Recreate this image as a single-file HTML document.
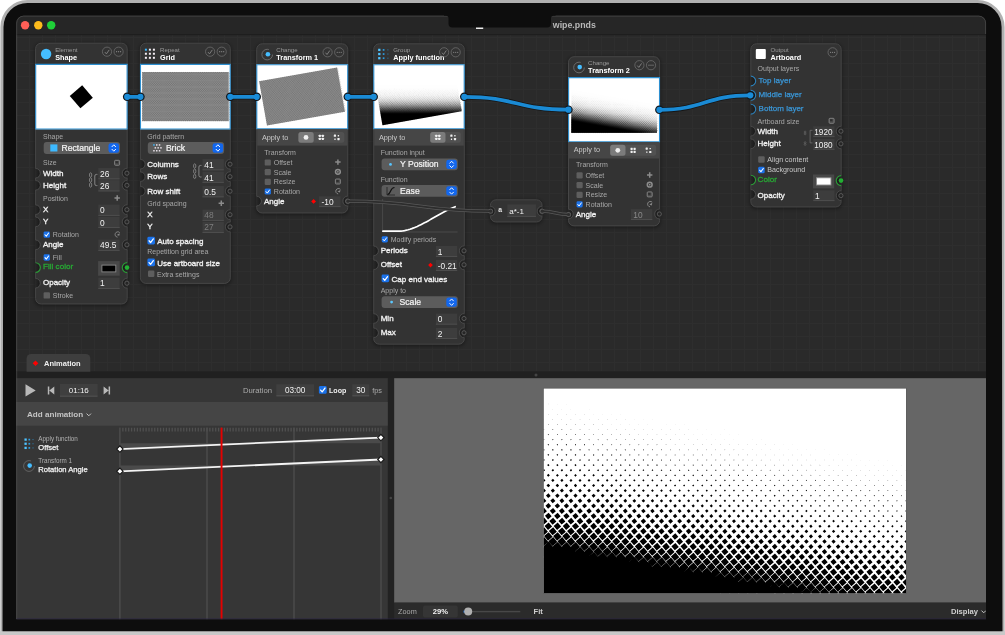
<!DOCTYPE html><html><head><meta charset="utf-8"><title>wipe.pnds</title><style>html,body{margin:0;padding:0;background:#fff}svg{display:block;will-change:transform}text{font-family:"Liberation Sans",sans-serif}</style></head><body>
<svg width="1005" height="635" viewBox="0 0 1005 635">
<defs>
<path id="uni" d="M-958.6 -558.3L-941.7 -538.6L-961.4 -521.7L-978.3 -541.4zM-910.6 -558.3L-893.7 -538.6L-913.4 -521.7L-930.3 -541.4zM-862.6 -558.3L-845.7 -538.6L-865.4 -521.7L-882.3 -541.4zM-814.6 -558.3L-797.7 -538.6L-817.4 -521.7L-834.3 -541.4zM-766.6 -558.3L-749.7 -538.6L-769.4 -521.7L-786.3 -541.4zM-718.6 -558.3L-701.7 -538.6L-721.4 -521.7L-738.3 -541.4zM-670.6 -558.3L-653.7 -538.6L-673.4 -521.7L-690.3 -541.4zM-622.6 -558.3L-605.7 -538.6L-625.4 -521.7L-642.3 -541.4zM-574.6 -558.3L-557.7 -538.6L-577.4 -521.7L-594.3 -541.4zM-526.6 -558.3L-509.7 -538.6L-529.4 -521.7L-546.3 -541.4zM-478.6 -558.3L-461.7 -538.6L-481.4 -521.7L-498.3 -541.4zM-430.6 -558.3L-413.7 -538.6L-433.4 -521.7L-450.3 -541.4zM-382.6 -558.3L-365.7 -538.6L-385.4 -521.7L-402.3 -541.4zM-334.6 -558.3L-317.7 -538.6L-337.4 -521.7L-354.3 -541.4zM-286.6 -558.3L-269.7 -538.6L-289.4 -521.7L-306.3 -541.4zM-238.6 -558.3L-221.7 -538.6L-241.4 -521.7L-258.3 -541.4zM-190.6 -558.3L-173.7 -538.6L-193.4 -521.7L-210.3 -541.4zM-142.6 -558.3L-125.7 -538.6L-145.4 -521.7L-162.3 -541.4zM-94.6 -558.3L-77.7 -538.6L-97.4 -521.7L-114.3 -541.4zM-46.6 -558.3L-29.7 -538.6L-49.4 -521.7L-66.3 -541.4zM1.4 -558.3L18.3 -538.6L-1.4 -521.7L-18.3 -541.4zM49.4 -558.3L66.3 -538.6L46.6 -521.7L29.7 -541.4zM97.4 -558.3L114.3 -538.6L94.6 -521.7L77.7 -541.4zM145.4 -558.3L162.3 -538.6L142.6 -521.7L125.7 -541.4zM193.4 -558.3L210.3 -538.6L190.6 -521.7L173.7 -541.4zM241.4 -558.3L258.3 -538.6L238.6 -521.7L221.7 -541.4zM289.4 -558.3L306.3 -538.6L286.6 -521.7L269.7 -541.4zM337.4 -558.3L354.3 -538.6L334.6 -521.7L317.7 -541.4zM385.4 -558.3L402.3 -538.6L382.6 -521.7L365.7 -541.4zM433.4 -558.3L450.3 -538.6L430.6 -521.7L413.7 -541.4zM481.4 -558.3L498.3 -538.6L478.6 -521.7L461.7 -541.4zM529.4 -558.3L546.3 -538.6L526.6 -521.7L509.7 -541.4zM577.4 -558.3L594.3 -538.6L574.6 -521.7L557.7 -541.4zM625.4 -558.3L642.3 -538.6L622.6 -521.7L605.7 -541.4zM673.4 -558.3L690.3 -538.6L670.6 -521.7L653.7 -541.4zM721.4 -558.3L738.3 -538.6L718.6 -521.7L701.7 -541.4zM769.4 -558.3L786.3 -538.6L766.6 -521.7L749.7 -541.4zM817.4 -558.3L834.3 -538.6L814.6 -521.7L797.7 -541.4zM865.4 -558.3L882.3 -538.6L862.6 -521.7L845.7 -541.4zM913.4 -558.3L930.3 -538.6L910.6 -521.7L893.7 -541.4zM961.4 -558.3L978.3 -538.6L958.6 -521.7L941.7 -541.4zM-934.6 -531.3L-917.7 -511.6L-937.4 -494.7L-954.3 -514.4zM-886.6 -531.3L-869.7 -511.6L-889.4 -494.7L-906.3 -514.4zM-838.6 -531.3L-821.7 -511.6L-841.4 -494.7L-858.3 -514.4zM-790.6 -531.3L-773.7 -511.6L-793.4 -494.7L-810.3 -514.4zM-742.6 -531.3L-725.7 -511.6L-745.4 -494.7L-762.3 -514.4zM-694.6 -531.3L-677.7 -511.6L-697.4 -494.7L-714.3 -514.4zM-646.6 -531.3L-629.7 -511.6L-649.4 -494.7L-666.3 -514.4zM-598.6 -531.3L-581.7 -511.6L-601.4 -494.7L-618.3 -514.4zM-550.6 -531.3L-533.7 -511.6L-553.4 -494.7L-570.3 -514.4zM-502.6 -531.3L-485.7 -511.6L-505.4 -494.7L-522.3 -514.4zM-454.6 -531.3L-437.7 -511.6L-457.4 -494.7L-474.3 -514.4zM-406.6 -531.3L-389.7 -511.6L-409.4 -494.7L-426.3 -514.4zM-358.6 -531.3L-341.7 -511.6L-361.4 -494.7L-378.3 -514.4zM-310.6 -531.3L-293.7 -511.6L-313.4 -494.7L-330.3 -514.4zM-262.6 -531.3L-245.7 -511.6L-265.4 -494.7L-282.3 -514.4zM-214.6 -531.3L-197.7 -511.6L-217.4 -494.7L-234.3 -514.4zM-166.6 -531.3L-149.7 -511.6L-169.4 -494.7L-186.3 -514.4zM-118.6 -531.3L-101.7 -511.6L-121.4 -494.7L-138.3 -514.4zM-70.6 -531.3L-53.7 -511.6L-73.4 -494.7L-90.3 -514.4zM-22.6 -531.3L-5.7 -511.6L-25.4 -494.7L-42.3 -514.4zM25.4 -531.3L42.3 -511.6L22.6 -494.7L5.7 -514.4zM73.4 -531.3L90.3 -511.6L70.6 -494.7L53.7 -514.4zM121.4 -531.3L138.3 -511.6L118.6 -494.7L101.7 -514.4zM169.4 -531.3L186.3 -511.6L166.6 -494.7L149.7 -514.4zM217.4 -531.3L234.3 -511.6L214.6 -494.7L197.7 -514.4zM265.4 -531.3L282.3 -511.6L262.6 -494.7L245.7 -514.4zM313.4 -531.3L330.3 -511.6L310.6 -494.7L293.7 -514.4zM361.4 -531.3L378.3 -511.6L358.6 -494.7L341.7 -514.4zM409.4 -531.3L426.3 -511.6L406.6 -494.7L389.7 -514.4zM457.4 -531.3L474.3 -511.6L454.6 -494.7L437.7 -514.4zM505.4 -531.3L522.3 -511.6L502.6 -494.7L485.7 -514.4zM553.4 -531.3L570.3 -511.6L550.6 -494.7L533.7 -514.4zM601.4 -531.3L618.3 -511.6L598.6 -494.7L581.7 -514.4zM649.4 -531.3L666.3 -511.6L646.6 -494.7L629.7 -514.4zM697.4 -531.3L714.3 -511.6L694.6 -494.7L677.7 -514.4zM745.4 -531.3L762.3 -511.6L742.6 -494.7L725.7 -514.4zM793.4 -531.3L810.3 -511.6L790.6 -494.7L773.7 -514.4zM841.4 -531.3L858.3 -511.6L838.6 -494.7L821.7 -514.4zM889.4 -531.3L906.3 -511.6L886.6 -494.7L869.7 -514.4zM937.4 -531.3L954.3 -511.6L934.6 -494.7L917.7 -514.4zM985.4 -531.3L1002.3 -511.6L982.6 -494.7L965.7 -514.4zM-958.6 -504.3L-941.7 -484.6L-961.4 -467.7L-978.3 -487.4zM-910.6 -504.3L-893.7 -484.6L-913.4 -467.7L-930.3 -487.4zM-862.6 -504.3L-845.7 -484.6L-865.4 -467.7L-882.3 -487.4zM-814.6 -504.3L-797.7 -484.6L-817.4 -467.7L-834.3 -487.4zM-766.6 -504.3L-749.7 -484.6L-769.4 -467.7L-786.3 -487.4zM-718.6 -504.3L-701.7 -484.6L-721.4 -467.7L-738.3 -487.4zM-670.6 -504.3L-653.7 -484.6L-673.4 -467.7L-690.3 -487.4zM-622.6 -504.3L-605.7 -484.6L-625.4 -467.7L-642.3 -487.4zM-574.6 -504.3L-557.7 -484.6L-577.4 -467.7L-594.3 -487.4zM-526.6 -504.3L-509.7 -484.6L-529.4 -467.7L-546.3 -487.4zM-478.6 -504.3L-461.7 -484.6L-481.4 -467.7L-498.3 -487.4zM-430.6 -504.3L-413.7 -484.6L-433.4 -467.7L-450.3 -487.4zM-382.6 -504.3L-365.7 -484.6L-385.4 -467.7L-402.3 -487.4zM-334.6 -504.3L-317.7 -484.6L-337.4 -467.7L-354.3 -487.4zM-286.6 -504.3L-269.7 -484.6L-289.4 -467.7L-306.3 -487.4zM-238.6 -504.3L-221.7 -484.6L-241.4 -467.7L-258.3 -487.4zM-190.6 -504.3L-173.7 -484.6L-193.4 -467.7L-210.3 -487.4zM-142.6 -504.3L-125.7 -484.6L-145.4 -467.7L-162.3 -487.4zM-94.6 -504.3L-77.7 -484.6L-97.4 -467.7L-114.3 -487.4zM-46.6 -504.3L-29.7 -484.6L-49.4 -467.7L-66.3 -487.4zM1.4 -504.3L18.3 -484.6L-1.4 -467.7L-18.3 -487.4zM49.4 -504.3L66.3 -484.6L46.6 -467.7L29.7 -487.4zM97.4 -504.3L114.3 -484.6L94.6 -467.7L77.7 -487.4zM145.4 -504.3L162.3 -484.6L142.6 -467.7L125.7 -487.4zM193.4 -504.3L210.3 -484.6L190.6 -467.7L173.7 -487.4zM241.4 -504.3L258.3 -484.6L238.6 -467.7L221.7 -487.4zM289.4 -504.3L306.3 -484.6L286.6 -467.7L269.7 -487.4zM337.4 -504.3L354.3 -484.6L334.6 -467.7L317.7 -487.4zM385.4 -504.3L402.3 -484.6L382.6 -467.7L365.7 -487.4zM433.4 -504.3L450.3 -484.6L430.6 -467.7L413.7 -487.4zM481.4 -504.3L498.3 -484.6L478.6 -467.7L461.7 -487.4zM529.4 -504.3L546.3 -484.6L526.6 -467.7L509.7 -487.4zM577.4 -504.3L594.3 -484.6L574.6 -467.7L557.7 -487.4zM625.4 -504.3L642.3 -484.6L622.6 -467.7L605.7 -487.4zM673.4 -504.3L690.3 -484.6L670.6 -467.7L653.7 -487.4zM721.4 -504.3L738.3 -484.6L718.6 -467.7L701.7 -487.4zM769.4 -504.3L786.3 -484.6L766.6 -467.7L749.7 -487.4zM817.4 -504.3L834.3 -484.6L814.6 -467.7L797.7 -487.4zM865.4 -504.3L882.3 -484.6L862.6 -467.7L845.7 -487.4zM913.4 -504.3L930.3 -484.6L910.6 -467.7L893.7 -487.4zM961.4 -504.3L978.3 -484.6L958.6 -467.7L941.7 -487.4zM-934.6 -477.3L-917.7 -457.6L-937.4 -440.7L-954.3 -460.4zM-886.6 -477.3L-869.7 -457.6L-889.4 -440.7L-906.3 -460.4zM-838.6 -477.3L-821.7 -457.6L-841.4 -440.7L-858.3 -460.4zM-790.6 -477.3L-773.7 -457.6L-793.4 -440.7L-810.3 -460.4zM-742.6 -477.3L-725.7 -457.6L-745.4 -440.7L-762.3 -460.4zM-694.6 -477.3L-677.7 -457.6L-697.4 -440.7L-714.3 -460.4zM-646.6 -477.3L-629.7 -457.6L-649.4 -440.7L-666.3 -460.4zM-598.6 -477.3L-581.7 -457.6L-601.4 -440.7L-618.3 -460.4zM-550.6 -477.3L-533.7 -457.6L-553.4 -440.7L-570.3 -460.4zM-502.6 -477.3L-485.7 -457.6L-505.4 -440.7L-522.3 -460.4zM-454.6 -477.3L-437.7 -457.6L-457.4 -440.7L-474.3 -460.4zM-406.6 -477.3L-389.7 -457.6L-409.4 -440.7L-426.3 -460.4zM-358.6 -477.3L-341.7 -457.6L-361.4 -440.7L-378.3 -460.4zM-310.6 -477.3L-293.7 -457.6L-313.4 -440.7L-330.3 -460.4zM-262.6 -477.3L-245.7 -457.6L-265.4 -440.7L-282.3 -460.4zM-214.6 -477.3L-197.7 -457.6L-217.4 -440.7L-234.3 -460.4zM-166.6 -477.3L-149.7 -457.6L-169.4 -440.7L-186.3 -460.4zM-118.6 -477.3L-101.7 -457.6L-121.4 -440.7L-138.3 -460.4zM-70.6 -477.3L-53.7 -457.6L-73.4 -440.7L-90.3 -460.4zM-22.6 -477.3L-5.7 -457.6L-25.4 -440.7L-42.3 -460.4zM25.4 -477.3L42.3 -457.6L22.6 -440.7L5.7 -460.4zM73.4 -477.3L90.3 -457.6L70.6 -440.7L53.7 -460.4zM121.4 -477.3L138.3 -457.6L118.6 -440.7L101.7 -460.4zM169.4 -477.3L186.3 -457.6L166.6 -440.7L149.7 -460.4zM217.4 -477.3L234.3 -457.6L214.6 -440.7L197.7 -460.4zM265.4 -477.3L282.3 -457.6L262.6 -440.7L245.7 -460.4zM313.4 -477.3L330.3 -457.6L310.6 -440.7L293.7 -460.4zM361.4 -477.3L378.3 -457.6L358.6 -440.7L341.7 -460.4zM409.4 -477.3L426.3 -457.6L406.6 -440.7L389.7 -460.4zM457.4 -477.3L474.3 -457.6L454.6 -440.7L437.7 -460.4zM505.4 -477.3L522.3 -457.6L502.6 -440.7L485.7 -460.4zM553.4 -477.3L570.3 -457.6L550.6 -440.7L533.7 -460.4zM601.4 -477.3L618.3 -457.6L598.6 -440.7L581.7 -460.4zM649.4 -477.3L666.3 -457.6L646.6 -440.7L629.7 -460.4zM697.4 -477.3L714.3 -457.6L694.6 -440.7L677.7 -460.4zM745.4 -477.3L762.3 -457.6L742.6 -440.7L725.7 -460.4zM793.4 -477.3L810.3 -457.6L790.6 -440.7L773.7 -460.4zM841.4 -477.3L858.3 -457.6L838.6 -440.7L821.7 -460.4zM889.4 -477.3L906.3 -457.6L886.6 -440.7L869.7 -460.4zM937.4 -477.3L954.3 -457.6L934.6 -440.7L917.7 -460.4zM985.4 -477.3L1002.3 -457.6L982.6 -440.7L965.7 -460.4zM-958.6 -450.3L-941.7 -430.6L-961.4 -413.7L-978.3 -433.4zM-910.6 -450.3L-893.7 -430.6L-913.4 -413.7L-930.3 -433.4zM-862.6 -450.3L-845.7 -430.6L-865.4 -413.7L-882.3 -433.4zM-814.6 -450.3L-797.7 -430.6L-817.4 -413.7L-834.3 -433.4zM-766.6 -450.3L-749.7 -430.6L-769.4 -413.7L-786.3 -433.4zM-718.6 -450.3L-701.7 -430.6L-721.4 -413.7L-738.3 -433.4zM-670.6 -450.3L-653.7 -430.6L-673.4 -413.7L-690.3 -433.4zM-622.6 -450.3L-605.7 -430.6L-625.4 -413.7L-642.3 -433.4zM-574.6 -450.3L-557.7 -430.6L-577.4 -413.7L-594.3 -433.4zM-526.6 -450.3L-509.7 -430.6L-529.4 -413.7L-546.3 -433.4zM-478.6 -450.3L-461.7 -430.6L-481.4 -413.7L-498.3 -433.4zM-430.6 -450.3L-413.7 -430.6L-433.4 -413.7L-450.3 -433.4zM-382.6 -450.3L-365.7 -430.6L-385.4 -413.7L-402.3 -433.4zM-334.6 -450.3L-317.7 -430.6L-337.4 -413.7L-354.3 -433.4zM-286.6 -450.3L-269.7 -430.6L-289.4 -413.7L-306.3 -433.4zM-238.6 -450.3L-221.7 -430.6L-241.4 -413.7L-258.3 -433.4zM-190.6 -450.3L-173.7 -430.6L-193.4 -413.7L-210.3 -433.4zM-142.6 -450.3L-125.7 -430.6L-145.4 -413.7L-162.3 -433.4zM-94.6 -450.3L-77.7 -430.6L-97.4 -413.7L-114.3 -433.4zM-46.6 -450.3L-29.7 -430.6L-49.4 -413.7L-66.3 -433.4zM1.4 -450.3L18.3 -430.6L-1.4 -413.7L-18.3 -433.4zM49.4 -450.3L66.3 -430.6L46.6 -413.7L29.7 -433.4zM97.4 -450.3L114.3 -430.6L94.6 -413.7L77.7 -433.4zM145.4 -450.3L162.3 -430.6L142.6 -413.7L125.7 -433.4zM193.4 -450.3L210.3 -430.6L190.6 -413.7L173.7 -433.4zM241.4 -450.3L258.3 -430.6L238.6 -413.7L221.7 -433.4zM289.4 -450.3L306.3 -430.6L286.6 -413.7L269.7 -433.4zM337.4 -450.3L354.3 -430.6L334.6 -413.7L317.7 -433.4zM385.4 -450.3L402.3 -430.6L382.6 -413.7L365.7 -433.4zM433.4 -450.3L450.3 -430.6L430.6 -413.7L413.7 -433.4zM481.4 -450.3L498.3 -430.6L478.6 -413.7L461.7 -433.4zM529.4 -450.3L546.3 -430.6L526.6 -413.7L509.7 -433.4zM577.4 -450.3L594.3 -430.6L574.6 -413.7L557.7 -433.4zM625.4 -450.3L642.3 -430.6L622.6 -413.7L605.7 -433.4zM673.4 -450.3L690.3 -430.6L670.6 -413.7L653.7 -433.4zM721.4 -450.3L738.3 -430.6L718.6 -413.7L701.7 -433.4zM769.4 -450.3L786.3 -430.6L766.6 -413.7L749.7 -433.4zM817.4 -450.3L834.3 -430.6L814.6 -413.7L797.7 -433.4zM865.4 -450.3L882.3 -430.6L862.6 -413.7L845.7 -433.4zM913.4 -450.3L930.3 -430.6L910.6 -413.7L893.7 -433.4zM961.4 -450.3L978.3 -430.6L958.6 -413.7L941.7 -433.4zM-934.6 -423.3L-917.7 -403.6L-937.4 -386.7L-954.3 -406.4zM-886.6 -423.3L-869.7 -403.6L-889.4 -386.7L-906.3 -406.4zM-838.6 -423.3L-821.7 -403.6L-841.4 -386.7L-858.3 -406.4zM-790.6 -423.3L-773.7 -403.6L-793.4 -386.7L-810.3 -406.4zM-742.6 -423.3L-725.7 -403.6L-745.4 -386.7L-762.3 -406.4zM-694.6 -423.3L-677.7 -403.6L-697.4 -386.7L-714.3 -406.4zM-646.6 -423.3L-629.7 -403.6L-649.4 -386.7L-666.3 -406.4zM-598.6 -423.3L-581.7 -403.6L-601.4 -386.7L-618.3 -406.4zM-550.6 -423.3L-533.7 -403.6L-553.4 -386.7L-570.3 -406.4zM-502.6 -423.3L-485.7 -403.6L-505.4 -386.7L-522.3 -406.4zM-454.6 -423.3L-437.7 -403.6L-457.4 -386.7L-474.3 -406.4zM-406.6 -423.3L-389.7 -403.6L-409.4 -386.7L-426.3 -406.4zM-358.6 -423.3L-341.7 -403.6L-361.4 -386.7L-378.3 -406.4zM-310.6 -423.3L-293.7 -403.6L-313.4 -386.7L-330.3 -406.4zM-262.6 -423.3L-245.7 -403.6L-265.4 -386.7L-282.3 -406.4zM-214.6 -423.3L-197.7 -403.6L-217.4 -386.7L-234.3 -406.4zM-166.6 -423.3L-149.7 -403.6L-169.4 -386.7L-186.3 -406.4zM-118.6 -423.3L-101.7 -403.6L-121.4 -386.7L-138.3 -406.4zM-70.6 -423.3L-53.7 -403.6L-73.4 -386.7L-90.3 -406.4zM-22.6 -423.3L-5.7 -403.6L-25.4 -386.7L-42.3 -406.4zM25.4 -423.3L42.3 -403.6L22.6 -386.7L5.7 -406.4zM73.4 -423.3L90.3 -403.6L70.6 -386.7L53.7 -406.4zM121.4 -423.3L138.3 -403.6L118.6 -386.7L101.7 -406.4zM169.4 -423.3L186.3 -403.6L166.6 -386.7L149.7 -406.4zM217.4 -423.3L234.3 -403.6L214.6 -386.7L197.7 -406.4zM265.4 -423.3L282.3 -403.6L262.6 -386.7L245.7 -406.4zM313.4 -423.3L330.3 -403.6L310.6 -386.7L293.7 -406.4zM361.4 -423.3L378.3 -403.6L358.6 -386.7L341.7 -406.4zM409.4 -423.3L426.3 -403.6L406.6 -386.7L389.7 -406.4zM457.4 -423.3L474.3 -403.6L454.6 -386.7L437.7 -406.4zM505.4 -423.3L522.3 -403.6L502.6 -386.7L485.7 -406.4zM553.4 -423.3L570.3 -403.6L550.6 -386.7L533.7 -406.4zM601.4 -423.3L618.3 -403.6L598.6 -386.7L581.7 -406.4zM649.4 -423.3L666.3 -403.6L646.6 -386.7L629.7 -406.4zM697.4 -423.3L714.3 -403.6L694.6 -386.7L677.7 -406.4zM745.4 -423.3L762.3 -403.6L742.6 -386.7L725.7 -406.4zM793.4 -423.3L810.3 -403.6L790.6 -386.7L773.7 -406.4zM841.4 -423.3L858.3 -403.6L838.6 -386.7L821.7 -406.4zM889.4 -423.3L906.3 -403.6L886.6 -386.7L869.7 -406.4zM937.4 -423.3L954.3 -403.6L934.6 -386.7L917.7 -406.4zM985.4 -423.3L1002.3 -403.6L982.6 -386.7L965.7 -406.4zM-958.6 -396.3L-941.7 -376.6L-961.4 -359.7L-978.3 -379.4zM-910.6 -396.3L-893.7 -376.6L-913.4 -359.7L-930.3 -379.4zM-862.6 -396.3L-845.7 -376.6L-865.4 -359.7L-882.3 -379.4zM-814.6 -396.3L-797.7 -376.6L-817.4 -359.7L-834.3 -379.4zM-766.6 -396.3L-749.7 -376.6L-769.4 -359.7L-786.3 -379.4zM-718.6 -396.3L-701.7 -376.6L-721.4 -359.7L-738.3 -379.4zM-670.6 -396.3L-653.7 -376.6L-673.4 -359.7L-690.3 -379.4zM-622.6 -396.3L-605.7 -376.6L-625.4 -359.7L-642.3 -379.4zM-574.6 -396.3L-557.7 -376.6L-577.4 -359.7L-594.3 -379.4zM-526.6 -396.3L-509.7 -376.6L-529.4 -359.7L-546.3 -379.4zM-478.6 -396.3L-461.7 -376.6L-481.4 -359.7L-498.3 -379.4zM-430.6 -396.3L-413.7 -376.6L-433.4 -359.7L-450.3 -379.4zM-382.6 -396.3L-365.7 -376.6L-385.4 -359.7L-402.3 -379.4zM-334.6 -396.3L-317.7 -376.6L-337.4 -359.7L-354.3 -379.4zM-286.6 -396.3L-269.7 -376.6L-289.4 -359.7L-306.3 -379.4zM-238.6 -396.3L-221.7 -376.6L-241.4 -359.7L-258.3 -379.4zM-190.6 -396.3L-173.7 -376.6L-193.4 -359.7L-210.3 -379.4zM-142.6 -396.3L-125.7 -376.6L-145.4 -359.7L-162.3 -379.4zM-94.6 -396.3L-77.7 -376.6L-97.4 -359.7L-114.3 -379.4zM-46.6 -396.3L-29.7 -376.6L-49.4 -359.7L-66.3 -379.4zM1.4 -396.3L18.3 -376.6L-1.4 -359.7L-18.3 -379.4zM49.4 -396.3L66.3 -376.6L46.6 -359.7L29.7 -379.4zM97.4 -396.3L114.3 -376.6L94.6 -359.7L77.7 -379.4zM145.4 -396.3L162.3 -376.6L142.6 -359.7L125.7 -379.4zM193.4 -396.3L210.3 -376.6L190.6 -359.7L173.7 -379.4zM241.4 -396.3L258.3 -376.6L238.6 -359.7L221.7 -379.4zM289.4 -396.3L306.3 -376.6L286.6 -359.7L269.7 -379.4zM337.4 -396.3L354.3 -376.6L334.6 -359.7L317.7 -379.4zM385.4 -396.3L402.3 -376.6L382.6 -359.7L365.7 -379.4zM433.4 -396.3L450.3 -376.6L430.6 -359.7L413.7 -379.4zM481.4 -396.3L498.3 -376.6L478.6 -359.7L461.7 -379.4zM529.4 -396.3L546.3 -376.6L526.6 -359.7L509.7 -379.4zM577.4 -396.3L594.3 -376.6L574.6 -359.7L557.7 -379.4zM625.4 -396.3L642.3 -376.6L622.6 -359.7L605.7 -379.4zM673.4 -396.3L690.3 -376.6L670.6 -359.7L653.7 -379.4zM721.4 -396.3L738.3 -376.6L718.6 -359.7L701.7 -379.4zM769.4 -396.3L786.3 -376.6L766.6 -359.7L749.7 -379.4zM817.4 -396.3L834.3 -376.6L814.6 -359.7L797.7 -379.4zM865.4 -396.3L882.3 -376.6L862.6 -359.7L845.7 -379.4zM913.4 -396.3L930.3 -376.6L910.6 -359.7L893.7 -379.4zM961.4 -396.3L978.3 -376.6L958.6 -359.7L941.7 -379.4zM-934.6 -369.3L-917.7 -349.6L-937.4 -332.7L-954.3 -352.4zM-886.6 -369.3L-869.7 -349.6L-889.4 -332.7L-906.3 -352.4zM-838.6 -369.3L-821.7 -349.6L-841.4 -332.7L-858.3 -352.4zM-790.6 -369.3L-773.7 -349.6L-793.4 -332.7L-810.3 -352.4zM-742.6 -369.3L-725.7 -349.6L-745.4 -332.7L-762.3 -352.4zM-694.6 -369.3L-677.7 -349.6L-697.4 -332.7L-714.3 -352.4zM-646.6 -369.3L-629.7 -349.6L-649.4 -332.7L-666.3 -352.4zM-598.6 -369.3L-581.7 -349.6L-601.4 -332.7L-618.3 -352.4zM-550.6 -369.3L-533.7 -349.6L-553.4 -332.7L-570.3 -352.4zM-502.6 -369.3L-485.7 -349.6L-505.4 -332.7L-522.3 -352.4zM-454.6 -369.3L-437.7 -349.6L-457.4 -332.7L-474.3 -352.4zM-406.6 -369.3L-389.7 -349.6L-409.4 -332.7L-426.3 -352.4zM-358.6 -369.3L-341.7 -349.6L-361.4 -332.7L-378.3 -352.4zM-310.6 -369.3L-293.7 -349.6L-313.4 -332.7L-330.3 -352.4zM-262.6 -369.3L-245.7 -349.6L-265.4 -332.7L-282.3 -352.4zM-214.6 -369.3L-197.7 -349.6L-217.4 -332.7L-234.3 -352.4zM-166.6 -369.3L-149.7 -349.6L-169.4 -332.7L-186.3 -352.4zM-118.6 -369.3L-101.7 -349.6L-121.4 -332.7L-138.3 -352.4zM-70.6 -369.3L-53.7 -349.6L-73.4 -332.7L-90.3 -352.4zM-22.6 -369.3L-5.7 -349.6L-25.4 -332.7L-42.3 -352.4zM25.4 -369.3L42.3 -349.6L22.6 -332.7L5.7 -352.4zM73.4 -369.3L90.3 -349.6L70.6 -332.7L53.7 -352.4zM121.4 -369.3L138.3 -349.6L118.6 -332.7L101.7 -352.4zM169.4 -369.3L186.3 -349.6L166.6 -332.7L149.7 -352.4zM217.4 -369.3L234.3 -349.6L214.6 -332.7L197.7 -352.4zM265.4 -369.3L282.3 -349.6L262.6 -332.7L245.7 -352.4zM313.4 -369.3L330.3 -349.6L310.6 -332.7L293.7 -352.4zM361.4 -369.3L378.3 -349.6L358.6 -332.7L341.7 -352.4zM409.4 -369.3L426.3 -349.6L406.6 -332.7L389.7 -352.4zM457.4 -369.3L474.3 -349.6L454.6 -332.7L437.7 -352.4zM505.4 -369.3L522.3 -349.6L502.6 -332.7L485.7 -352.4zM553.4 -369.3L570.3 -349.6L550.6 -332.7L533.7 -352.4zM601.4 -369.3L618.3 -349.6L598.6 -332.7L581.7 -352.4zM649.4 -369.3L666.3 -349.6L646.6 -332.7L629.7 -352.4zM697.4 -369.3L714.3 -349.6L694.6 -332.7L677.7 -352.4zM745.4 -369.3L762.3 -349.6L742.6 -332.7L725.7 -352.4zM793.4 -369.3L810.3 -349.6L790.6 -332.7L773.7 -352.4zM841.4 -369.3L858.3 -349.6L838.6 -332.7L821.7 -352.4zM889.4 -369.3L906.3 -349.6L886.6 -332.7L869.7 -352.4zM937.4 -369.3L954.3 -349.6L934.6 -332.7L917.7 -352.4zM985.4 -369.3L1002.3 -349.6L982.6 -332.7L965.7 -352.4zM-958.6 -342.3L-941.7 -322.6L-961.4 -305.7L-978.3 -325.4zM-910.6 -342.3L-893.7 -322.6L-913.4 -305.7L-930.3 -325.4zM-862.6 -342.3L-845.7 -322.6L-865.4 -305.7L-882.3 -325.4zM-814.6 -342.3L-797.7 -322.6L-817.4 -305.7L-834.3 -325.4zM-766.6 -342.3L-749.7 -322.6L-769.4 -305.7L-786.3 -325.4zM-718.6 -342.3L-701.7 -322.6L-721.4 -305.7L-738.3 -325.4zM-670.6 -342.3L-653.7 -322.6L-673.4 -305.7L-690.3 -325.4zM-622.6 -342.3L-605.7 -322.6L-625.4 -305.7L-642.3 -325.4zM-574.6 -342.3L-557.7 -322.6L-577.4 -305.7L-594.3 -325.4zM-526.6 -342.3L-509.7 -322.6L-529.4 -305.7L-546.3 -325.4zM-478.6 -342.3L-461.7 -322.6L-481.4 -305.7L-498.3 -325.4zM-430.6 -342.3L-413.7 -322.6L-433.4 -305.7L-450.3 -325.4zM-382.6 -342.3L-365.7 -322.6L-385.4 -305.7L-402.3 -325.4zM-334.6 -342.3L-317.7 -322.6L-337.4 -305.7L-354.3 -325.4zM-286.6 -342.3L-269.7 -322.6L-289.4 -305.7L-306.3 -325.4zM-238.6 -342.3L-221.7 -322.6L-241.4 -305.7L-258.3 -325.4zM-190.6 -342.3L-173.7 -322.6L-193.4 -305.7L-210.3 -325.4zM-142.6 -342.3L-125.7 -322.6L-145.4 -305.7L-162.3 -325.4zM-94.6 -342.3L-77.7 -322.6L-97.4 -305.7L-114.3 -325.4zM-46.6 -342.3L-29.7 -322.6L-49.4 -305.7L-66.3 -325.4zM1.4 -342.3L18.3 -322.6L-1.4 -305.7L-18.3 -325.4zM49.4 -342.3L66.3 -322.6L46.6 -305.7L29.7 -325.4zM97.4 -342.3L114.3 -322.6L94.6 -305.7L77.7 -325.4zM145.4 -342.3L162.3 -322.6L142.6 -305.7L125.7 -325.4zM193.4 -342.3L210.3 -322.6L190.6 -305.7L173.7 -325.4zM241.4 -342.3L258.3 -322.6L238.6 -305.7L221.7 -325.4zM289.4 -342.3L306.3 -322.6L286.6 -305.7L269.7 -325.4zM337.4 -342.3L354.3 -322.6L334.6 -305.7L317.7 -325.4zM385.4 -342.3L402.3 -322.6L382.6 -305.7L365.7 -325.4zM433.4 -342.3L450.3 -322.6L430.6 -305.7L413.7 -325.4zM481.4 -342.3L498.3 -322.6L478.6 -305.7L461.7 -325.4zM529.4 -342.3L546.3 -322.6L526.6 -305.7L509.7 -325.4zM577.4 -342.3L594.3 -322.6L574.6 -305.7L557.7 -325.4zM625.4 -342.3L642.3 -322.6L622.6 -305.7L605.7 -325.4zM673.4 -342.3L690.3 -322.6L670.6 -305.7L653.7 -325.4zM721.4 -342.3L738.3 -322.6L718.6 -305.7L701.7 -325.4zM769.4 -342.3L786.3 -322.6L766.6 -305.7L749.7 -325.4zM817.4 -342.3L834.3 -322.6L814.6 -305.7L797.7 -325.4zM865.4 -342.3L882.3 -322.6L862.6 -305.7L845.7 -325.4zM913.4 -342.3L930.3 -322.6L910.6 -305.7L893.7 -325.4zM961.4 -342.3L978.3 -322.6L958.6 -305.7L941.7 -325.4zM-934.6 -315.3L-917.7 -295.6L-937.4 -278.7L-954.3 -298.4zM-886.6 -315.3L-869.7 -295.6L-889.4 -278.7L-906.3 -298.4zM-838.6 -315.3L-821.7 -295.6L-841.4 -278.7L-858.3 -298.4zM-790.6 -315.3L-773.7 -295.6L-793.4 -278.7L-810.3 -298.4zM-742.6 -315.3L-725.7 -295.6L-745.4 -278.7L-762.3 -298.4zM-694.6 -315.3L-677.7 -295.6L-697.4 -278.7L-714.3 -298.4zM-646.6 -315.3L-629.7 -295.6L-649.4 -278.7L-666.3 -298.4zM-598.6 -315.3L-581.7 -295.6L-601.4 -278.7L-618.3 -298.4zM-550.6 -315.3L-533.7 -295.6L-553.4 -278.7L-570.3 -298.4zM-502.6 -315.3L-485.7 -295.6L-505.4 -278.7L-522.3 -298.4zM-454.6 -315.3L-437.7 -295.6L-457.4 -278.7L-474.3 -298.4zM-406.6 -315.3L-389.7 -295.6L-409.4 -278.7L-426.3 -298.4zM-358.6 -315.3L-341.7 -295.6L-361.4 -278.7L-378.3 -298.4zM-310.6 -315.3L-293.7 -295.6L-313.4 -278.7L-330.3 -298.4zM-262.6 -315.3L-245.7 -295.6L-265.4 -278.7L-282.3 -298.4zM-214.6 -315.3L-197.7 -295.6L-217.4 -278.7L-234.3 -298.4zM-166.6 -315.3L-149.7 -295.6L-169.4 -278.7L-186.3 -298.4zM-118.6 -315.3L-101.7 -295.6L-121.4 -278.7L-138.3 -298.4zM-70.6 -315.3L-53.7 -295.6L-73.4 -278.7L-90.3 -298.4zM-22.6 -315.3L-5.7 -295.6L-25.4 -278.7L-42.3 -298.4zM25.4 -315.3L42.3 -295.6L22.6 -278.7L5.7 -298.4zM73.4 -315.3L90.3 -295.6L70.6 -278.7L53.7 -298.4zM121.4 -315.3L138.3 -295.6L118.6 -278.7L101.7 -298.4zM169.4 -315.3L186.3 -295.6L166.6 -278.7L149.7 -298.4zM217.4 -315.3L234.3 -295.6L214.6 -278.7L197.7 -298.4zM265.4 -315.3L282.3 -295.6L262.6 -278.7L245.7 -298.4zM313.4 -315.3L330.3 -295.6L310.6 -278.7L293.7 -298.4zM361.4 -315.3L378.3 -295.6L358.6 -278.7L341.7 -298.4zM409.4 -315.3L426.3 -295.6L406.6 -278.7L389.7 -298.4zM457.4 -315.3L474.3 -295.6L454.6 -278.7L437.7 -298.4zM505.4 -315.3L522.3 -295.6L502.6 -278.7L485.7 -298.4zM553.4 -315.3L570.3 -295.6L550.6 -278.7L533.7 -298.4zM601.4 -315.3L618.3 -295.6L598.6 -278.7L581.7 -298.4zM649.4 -315.3L666.3 -295.6L646.6 -278.7L629.7 -298.4zM697.4 -315.3L714.3 -295.6L694.6 -278.7L677.7 -298.4zM745.4 -315.3L762.3 -295.6L742.6 -278.7L725.7 -298.4zM793.4 -315.3L810.3 -295.6L790.6 -278.7L773.7 -298.4zM841.4 -315.3L858.3 -295.6L838.6 -278.7L821.7 -298.4zM889.4 -315.3L906.3 -295.6L886.6 -278.7L869.7 -298.4zM937.4 -315.3L954.3 -295.6L934.6 -278.7L917.7 -298.4zM985.4 -315.3L1002.3 -295.6L982.6 -278.7L965.7 -298.4zM-958.6 -288.3L-941.7 -268.6L-961.4 -251.7L-978.3 -271.4zM-910.6 -288.3L-893.7 -268.6L-913.4 -251.7L-930.3 -271.4zM-862.6 -288.3L-845.7 -268.6L-865.4 -251.7L-882.3 -271.4zM-814.6 -288.3L-797.7 -268.6L-817.4 -251.7L-834.3 -271.4zM-766.6 -288.3L-749.7 -268.6L-769.4 -251.7L-786.3 -271.4zM-718.6 -288.3L-701.7 -268.6L-721.4 -251.7L-738.3 -271.4zM-670.6 -288.3L-653.7 -268.6L-673.4 -251.7L-690.3 -271.4zM-622.6 -288.3L-605.7 -268.6L-625.4 -251.7L-642.3 -271.4zM-574.6 -288.3L-557.7 -268.6L-577.4 -251.7L-594.3 -271.4zM-526.6 -288.3L-509.7 -268.6L-529.4 -251.7L-546.3 -271.4zM-478.6 -288.3L-461.7 -268.6L-481.4 -251.7L-498.3 -271.4zM-430.6 -288.3L-413.7 -268.6L-433.4 -251.7L-450.3 -271.4zM-382.6 -288.3L-365.7 -268.6L-385.4 -251.7L-402.3 -271.4zM-334.6 -288.3L-317.7 -268.6L-337.4 -251.7L-354.3 -271.4zM-286.6 -288.3L-269.7 -268.6L-289.4 -251.7L-306.3 -271.4zM-238.6 -288.3L-221.7 -268.6L-241.4 -251.7L-258.3 -271.4zM-190.6 -288.3L-173.7 -268.6L-193.4 -251.7L-210.3 -271.4zM-142.6 -288.3L-125.7 -268.6L-145.4 -251.7L-162.3 -271.4zM-94.6 -288.3L-77.7 -268.6L-97.4 -251.7L-114.3 -271.4zM-46.6 -288.3L-29.7 -268.6L-49.4 -251.7L-66.3 -271.4zM1.4 -288.3L18.3 -268.6L-1.4 -251.7L-18.3 -271.4zM49.4 -288.3L66.3 -268.6L46.6 -251.7L29.7 -271.4zM97.4 -288.3L114.3 -268.6L94.6 -251.7L77.7 -271.4zM145.4 -288.3L162.3 -268.6L142.6 -251.7L125.7 -271.4zM193.4 -288.3L210.3 -268.6L190.6 -251.7L173.7 -271.4zM241.4 -288.3L258.3 -268.6L238.6 -251.7L221.7 -271.4zM289.4 -288.3L306.3 -268.6L286.6 -251.7L269.7 -271.4zM337.4 -288.3L354.3 -268.6L334.6 -251.7L317.7 -271.4zM385.4 -288.3L402.3 -268.6L382.6 -251.7L365.7 -271.4zM433.4 -288.3L450.3 -268.6L430.6 -251.7L413.7 -271.4zM481.4 -288.3L498.3 -268.6L478.6 -251.7L461.7 -271.4zM529.4 -288.3L546.3 -268.6L526.6 -251.7L509.7 -271.4zM577.4 -288.3L594.3 -268.6L574.6 -251.7L557.7 -271.4zM625.4 -288.3L642.3 -268.6L622.6 -251.7L605.7 -271.4zM673.4 -288.3L690.3 -268.6L670.6 -251.7L653.7 -271.4zM721.4 -288.3L738.3 -268.6L718.6 -251.7L701.7 -271.4zM769.4 -288.3L786.3 -268.6L766.6 -251.7L749.7 -271.4zM817.4 -288.3L834.3 -268.6L814.6 -251.7L797.7 -271.4zM865.4 -288.3L882.3 -268.6L862.6 -251.7L845.7 -271.4zM913.4 -288.3L930.3 -268.6L910.6 -251.7L893.7 -271.4zM961.4 -288.3L978.3 -268.6L958.6 -251.7L941.7 -271.4zM-934.6 -261.3L-917.7 -241.6L-937.4 -224.7L-954.3 -244.4zM-886.6 -261.3L-869.7 -241.6L-889.4 -224.7L-906.3 -244.4zM-838.6 -261.3L-821.7 -241.6L-841.4 -224.7L-858.3 -244.4zM-790.6 -261.3L-773.7 -241.6L-793.4 -224.7L-810.3 -244.4zM-742.6 -261.3L-725.7 -241.6L-745.4 -224.7L-762.3 -244.4zM-694.6 -261.3L-677.7 -241.6L-697.4 -224.7L-714.3 -244.4zM-646.6 -261.3L-629.7 -241.6L-649.4 -224.7L-666.3 -244.4zM-598.6 -261.3L-581.7 -241.6L-601.4 -224.7L-618.3 -244.4zM-550.6 -261.3L-533.7 -241.6L-553.4 -224.7L-570.3 -244.4zM-502.6 -261.3L-485.7 -241.6L-505.4 -224.7L-522.3 -244.4zM-454.6 -261.3L-437.7 -241.6L-457.4 -224.7L-474.3 -244.4zM-406.6 -261.3L-389.7 -241.6L-409.4 -224.7L-426.3 -244.4zM-358.6 -261.3L-341.7 -241.6L-361.4 -224.7L-378.3 -244.4zM-310.6 -261.3L-293.7 -241.6L-313.4 -224.7L-330.3 -244.4zM-262.6 -261.3L-245.7 -241.6L-265.4 -224.7L-282.3 -244.4zM-214.6 -261.3L-197.7 -241.6L-217.4 -224.7L-234.3 -244.4zM-166.6 -261.3L-149.7 -241.6L-169.4 -224.7L-186.3 -244.4zM-118.6 -261.3L-101.7 -241.6L-121.4 -224.7L-138.3 -244.4zM-70.6 -261.3L-53.7 -241.6L-73.4 -224.7L-90.3 -244.4zM-22.6 -261.3L-5.7 -241.6L-25.4 -224.7L-42.3 -244.4zM25.4 -261.3L42.3 -241.6L22.6 -224.7L5.7 -244.4zM73.4 -261.3L90.3 -241.6L70.6 -224.7L53.7 -244.4zM121.4 -261.3L138.3 -241.6L118.6 -224.7L101.7 -244.4zM169.4 -261.3L186.3 -241.6L166.6 -224.7L149.7 -244.4zM217.4 -261.3L234.3 -241.6L214.6 -224.7L197.7 -244.4zM265.4 -261.3L282.3 -241.6L262.6 -224.7L245.7 -244.4zM313.4 -261.3L330.3 -241.6L310.6 -224.7L293.7 -244.4zM361.4 -261.3L378.3 -241.6L358.6 -224.7L341.7 -244.4zM409.4 -261.3L426.3 -241.6L406.6 -224.7L389.7 -244.4zM457.4 -261.3L474.3 -241.6L454.6 -224.7L437.7 -244.4zM505.4 -261.3L522.3 -241.6L502.6 -224.7L485.7 -244.4zM553.4 -261.3L570.3 -241.6L550.6 -224.7L533.7 -244.4zM601.4 -261.3L618.3 -241.6L598.6 -224.7L581.7 -244.4zM649.4 -261.3L666.3 -241.6L646.6 -224.7L629.7 -244.4zM697.4 -261.3L714.3 -241.6L694.6 -224.7L677.7 -244.4zM745.4 -261.3L762.3 -241.6L742.6 -224.7L725.7 -244.4zM793.4 -261.3L810.3 -241.6L790.6 -224.7L773.7 -244.4zM841.4 -261.3L858.3 -241.6L838.6 -224.7L821.7 -244.4zM889.4 -261.3L906.3 -241.6L886.6 -224.7L869.7 -244.4zM937.4 -261.3L954.3 -241.6L934.6 -224.7L917.7 -244.4zM985.4 -261.3L1002.3 -241.6L982.6 -224.7L965.7 -244.4zM-958.6 -234.3L-941.7 -214.6L-961.4 -197.7L-978.3 -217.4zM-910.6 -234.3L-893.7 -214.6L-913.4 -197.7L-930.3 -217.4zM-862.6 -234.3L-845.7 -214.6L-865.4 -197.7L-882.3 -217.4zM-814.6 -234.3L-797.7 -214.6L-817.4 -197.7L-834.3 -217.4zM-766.6 -234.3L-749.7 -214.6L-769.4 -197.7L-786.3 -217.4zM-718.6 -234.3L-701.7 -214.6L-721.4 -197.7L-738.3 -217.4zM-670.6 -234.3L-653.7 -214.6L-673.4 -197.7L-690.3 -217.4zM-622.6 -234.3L-605.7 -214.6L-625.4 -197.7L-642.3 -217.4zM-574.6 -234.3L-557.7 -214.6L-577.4 -197.7L-594.3 -217.4zM-526.6 -234.3L-509.7 -214.6L-529.4 -197.7L-546.3 -217.4zM-478.6 -234.3L-461.7 -214.6L-481.4 -197.7L-498.3 -217.4zM-430.6 -234.3L-413.7 -214.6L-433.4 -197.7L-450.3 -217.4zM-382.6 -234.3L-365.7 -214.6L-385.4 -197.7L-402.3 -217.4zM-334.6 -234.3L-317.7 -214.6L-337.4 -197.7L-354.3 -217.4zM-286.6 -234.3L-269.7 -214.6L-289.4 -197.7L-306.3 -217.4zM-238.6 -234.3L-221.7 -214.6L-241.4 -197.7L-258.3 -217.4zM-190.6 -234.3L-173.7 -214.6L-193.4 -197.7L-210.3 -217.4zM-142.6 -234.3L-125.7 -214.6L-145.4 -197.7L-162.3 -217.4zM-94.6 -234.3L-77.7 -214.6L-97.4 -197.7L-114.3 -217.4zM-46.6 -234.3L-29.7 -214.6L-49.4 -197.7L-66.3 -217.4zM1.4 -234.3L18.3 -214.6L-1.4 -197.7L-18.3 -217.4zM49.4 -234.3L66.3 -214.6L46.6 -197.7L29.7 -217.4zM97.4 -234.3L114.3 -214.6L94.6 -197.7L77.7 -217.4zM145.4 -234.3L162.3 -214.6L142.6 -197.7L125.7 -217.4zM193.4 -234.3L210.3 -214.6L190.6 -197.7L173.7 -217.4zM241.4 -234.3L258.3 -214.6L238.6 -197.7L221.7 -217.4zM289.4 -234.3L306.3 -214.6L286.6 -197.7L269.7 -217.4zM337.4 -234.3L354.3 -214.6L334.6 -197.7L317.7 -217.4zM385.4 -234.3L402.3 -214.6L382.6 -197.7L365.7 -217.4zM433.4 -234.3L450.3 -214.6L430.6 -197.7L413.7 -217.4zM481.4 -234.3L498.3 -214.6L478.6 -197.7L461.7 -217.4zM529.4 -234.3L546.3 -214.6L526.6 -197.7L509.7 -217.4zM577.4 -234.3L594.3 -214.6L574.6 -197.7L557.7 -217.4zM625.4 -234.3L642.3 -214.6L622.6 -197.7L605.7 -217.4zM673.4 -234.3L690.3 -214.6L670.6 -197.7L653.7 -217.4zM721.4 -234.3L738.3 -214.6L718.6 -197.7L701.7 -217.4zM769.4 -234.3L786.3 -214.6L766.6 -197.7L749.7 -217.4zM817.4 -234.3L834.3 -214.6L814.6 -197.7L797.7 -217.4zM865.4 -234.3L882.3 -214.6L862.6 -197.7L845.7 -217.4zM913.4 -234.3L930.3 -214.6L910.6 -197.7L893.7 -217.4zM961.4 -234.3L978.3 -214.6L958.6 -197.7L941.7 -217.4zM-934.6 -207.3L-917.7 -187.6L-937.4 -170.7L-954.3 -190.4zM-886.6 -207.3L-869.7 -187.6L-889.4 -170.7L-906.3 -190.4zM-838.6 -207.3L-821.7 -187.6L-841.4 -170.7L-858.3 -190.4zM-790.6 -207.3L-773.7 -187.6L-793.4 -170.7L-810.3 -190.4zM-742.6 -207.3L-725.7 -187.6L-745.4 -170.7L-762.3 -190.4zM-694.6 -207.3L-677.7 -187.6L-697.4 -170.7L-714.3 -190.4zM-646.6 -207.3L-629.7 -187.6L-649.4 -170.7L-666.3 -190.4zM-598.6 -207.3L-581.7 -187.6L-601.4 -170.7L-618.3 -190.4zM-550.6 -207.3L-533.7 -187.6L-553.4 -170.7L-570.3 -190.4zM-502.6 -207.3L-485.7 -187.6L-505.4 -170.7L-522.3 -190.4zM-454.6 -207.3L-437.7 -187.6L-457.4 -170.7L-474.3 -190.4zM-406.6 -207.3L-389.7 -187.6L-409.4 -170.7L-426.3 -190.4zM-358.6 -207.3L-341.7 -187.6L-361.4 -170.7L-378.3 -190.4zM-310.6 -207.3L-293.7 -187.6L-313.4 -170.7L-330.3 -190.4zM-262.6 -207.3L-245.7 -187.6L-265.4 -170.7L-282.3 -190.4zM-214.6 -207.3L-197.7 -187.6L-217.4 -170.7L-234.3 -190.4zM-166.6 -207.3L-149.7 -187.6L-169.4 -170.7L-186.3 -190.4zM-118.6 -207.3L-101.7 -187.6L-121.4 -170.7L-138.3 -190.4zM-70.6 -207.3L-53.7 -187.6L-73.4 -170.7L-90.3 -190.4zM-22.6 -207.3L-5.7 -187.6L-25.4 -170.7L-42.3 -190.4zM25.4 -207.3L42.3 -187.6L22.6 -170.7L5.7 -190.4zM73.4 -207.3L90.3 -187.6L70.6 -170.7L53.7 -190.4zM121.4 -207.3L138.3 -187.6L118.6 -170.7L101.7 -190.4zM169.4 -207.3L186.3 -187.6L166.6 -170.7L149.7 -190.4zM217.4 -207.3L234.3 -187.6L214.6 -170.7L197.7 -190.4zM265.4 -207.3L282.3 -187.6L262.6 -170.7L245.7 -190.4zM313.4 -207.3L330.3 -187.6L310.6 -170.7L293.7 -190.4zM361.4 -207.3L378.3 -187.6L358.6 -170.7L341.7 -190.4zM409.4 -207.3L426.3 -187.6L406.6 -170.7L389.7 -190.4zM457.4 -207.3L474.3 -187.6L454.6 -170.7L437.7 -190.4zM505.4 -207.3L522.3 -187.6L502.6 -170.7L485.7 -190.4zM553.4 -207.3L570.3 -187.6L550.6 -170.7L533.7 -190.4zM601.4 -207.3L618.3 -187.6L598.6 -170.7L581.7 -190.4zM649.4 -207.3L666.3 -187.6L646.6 -170.7L629.7 -190.4zM697.4 -207.3L714.3 -187.6L694.6 -170.7L677.7 -190.4zM745.4 -207.3L762.3 -187.6L742.6 -170.7L725.7 -190.4zM793.4 -207.3L810.3 -187.6L790.6 -170.7L773.7 -190.4zM841.4 -207.3L858.3 -187.6L838.6 -170.7L821.7 -190.4zM889.4 -207.3L906.3 -187.6L886.6 -170.7L869.7 -190.4zM937.4 -207.3L954.3 -187.6L934.6 -170.7L917.7 -190.4zM985.4 -207.3L1002.3 -187.6L982.6 -170.7L965.7 -190.4zM-958.6 -180.3L-941.7 -160.6L-961.4 -143.7L-978.3 -163.4zM-910.6 -180.3L-893.7 -160.6L-913.4 -143.7L-930.3 -163.4zM-862.6 -180.3L-845.7 -160.6L-865.4 -143.7L-882.3 -163.4zM-814.6 -180.3L-797.7 -160.6L-817.4 -143.7L-834.3 -163.4zM-766.6 -180.3L-749.7 -160.6L-769.4 -143.7L-786.3 -163.4zM-718.6 -180.3L-701.7 -160.6L-721.4 -143.7L-738.3 -163.4zM-670.6 -180.3L-653.7 -160.6L-673.4 -143.7L-690.3 -163.4zM-622.6 -180.3L-605.7 -160.6L-625.4 -143.7L-642.3 -163.4zM-574.6 -180.3L-557.7 -160.6L-577.4 -143.7L-594.3 -163.4zM-526.6 -180.3L-509.7 -160.6L-529.4 -143.7L-546.3 -163.4zM-478.6 -180.3L-461.7 -160.6L-481.4 -143.7L-498.3 -163.4zM-430.6 -180.3L-413.7 -160.6L-433.4 -143.7L-450.3 -163.4zM-382.6 -180.3L-365.7 -160.6L-385.4 -143.7L-402.3 -163.4zM-334.6 -180.3L-317.7 -160.6L-337.4 -143.7L-354.3 -163.4zM-286.6 -180.3L-269.7 -160.6L-289.4 -143.7L-306.3 -163.4zM-238.6 -180.3L-221.7 -160.6L-241.4 -143.7L-258.3 -163.4zM-190.6 -180.3L-173.7 -160.6L-193.4 -143.7L-210.3 -163.4zM-142.6 -180.3L-125.7 -160.6L-145.4 -143.7L-162.3 -163.4zM-94.6 -180.3L-77.7 -160.6L-97.4 -143.7L-114.3 -163.4zM-46.6 -180.3L-29.7 -160.6L-49.4 -143.7L-66.3 -163.4zM1.4 -180.3L18.3 -160.6L-1.4 -143.7L-18.3 -163.4zM49.4 -180.3L66.3 -160.6L46.6 -143.7L29.7 -163.4zM97.4 -180.3L114.3 -160.6L94.6 -143.7L77.7 -163.4zM145.4 -180.3L162.3 -160.6L142.6 -143.7L125.7 -163.4zM193.4 -180.3L210.3 -160.6L190.6 -143.7L173.7 -163.4zM241.4 -180.3L258.3 -160.6L238.6 -143.7L221.7 -163.4zM289.4 -180.3L306.3 -160.6L286.6 -143.7L269.7 -163.4zM337.4 -180.3L354.3 -160.6L334.6 -143.7L317.7 -163.4zM385.4 -180.3L402.3 -160.6L382.6 -143.7L365.7 -163.4zM433.4 -180.3L450.3 -160.6L430.6 -143.7L413.7 -163.4zM481.4 -180.3L498.3 -160.6L478.6 -143.7L461.7 -163.4zM529.4 -180.3L546.3 -160.6L526.6 -143.7L509.7 -163.4zM577.4 -180.3L594.3 -160.6L574.6 -143.7L557.7 -163.4zM625.4 -180.3L642.3 -160.6L622.6 -143.7L605.7 -163.4zM673.4 -180.3L690.3 -160.6L670.6 -143.7L653.7 -163.4zM721.4 -180.3L738.3 -160.6L718.6 -143.7L701.7 -163.4zM769.4 -180.3L786.3 -160.6L766.6 -143.7L749.7 -163.4zM817.4 -180.3L834.3 -160.6L814.6 -143.7L797.7 -163.4zM865.4 -180.3L882.3 -160.6L862.6 -143.7L845.7 -163.4zM913.4 -180.3L930.3 -160.6L910.6 -143.7L893.7 -163.4zM961.4 -180.3L978.3 -160.6L958.6 -143.7L941.7 -163.4zM-934.6 -153.3L-917.7 -133.6L-937.4 -116.7L-954.3 -136.4zM-886.6 -153.3L-869.7 -133.6L-889.4 -116.7L-906.3 -136.4zM-838.6 -153.3L-821.7 -133.6L-841.4 -116.7L-858.3 -136.4zM-790.6 -153.3L-773.7 -133.6L-793.4 -116.7L-810.3 -136.4zM-742.6 -153.3L-725.7 -133.6L-745.4 -116.7L-762.3 -136.4zM-694.6 -153.3L-677.7 -133.6L-697.4 -116.7L-714.3 -136.4zM-646.6 -153.3L-629.7 -133.6L-649.4 -116.7L-666.3 -136.4zM-598.6 -153.3L-581.7 -133.6L-601.4 -116.7L-618.3 -136.4zM-550.6 -153.3L-533.7 -133.6L-553.4 -116.7L-570.3 -136.4zM-502.6 -153.3L-485.7 -133.6L-505.4 -116.7L-522.3 -136.4zM-454.6 -153.3L-437.7 -133.6L-457.4 -116.7L-474.3 -136.4zM-406.6 -153.3L-389.7 -133.6L-409.4 -116.7L-426.3 -136.4zM-358.6 -153.3L-341.7 -133.6L-361.4 -116.7L-378.3 -136.4zM-310.6 -153.3L-293.7 -133.6L-313.4 -116.7L-330.3 -136.4zM-262.6 -153.3L-245.7 -133.6L-265.4 -116.7L-282.3 -136.4zM-214.6 -153.3L-197.7 -133.6L-217.4 -116.7L-234.3 -136.4zM-166.6 -153.3L-149.7 -133.6L-169.4 -116.7L-186.3 -136.4zM-118.6 -153.3L-101.7 -133.6L-121.4 -116.7L-138.3 -136.4zM-70.6 -153.3L-53.7 -133.6L-73.4 -116.7L-90.3 -136.4zM-22.6 -153.3L-5.7 -133.6L-25.4 -116.7L-42.3 -136.4zM25.4 -153.3L42.3 -133.6L22.6 -116.7L5.7 -136.4zM73.4 -153.3L90.3 -133.6L70.6 -116.7L53.7 -136.4zM121.4 -153.3L138.3 -133.6L118.6 -116.7L101.7 -136.4zM169.4 -153.3L186.3 -133.6L166.6 -116.7L149.7 -136.4zM217.4 -153.3L234.3 -133.6L214.6 -116.7L197.7 -136.4zM265.4 -153.3L282.3 -133.6L262.6 -116.7L245.7 -136.4zM313.4 -153.3L330.3 -133.6L310.6 -116.7L293.7 -136.4zM361.4 -153.3L378.3 -133.6L358.6 -116.7L341.7 -136.4zM409.4 -153.3L426.3 -133.6L406.6 -116.7L389.7 -136.4zM457.4 -153.3L474.3 -133.6L454.6 -116.7L437.7 -136.4zM505.4 -153.3L522.3 -133.6L502.6 -116.7L485.7 -136.4zM553.4 -153.3L570.3 -133.6L550.6 -116.7L533.7 -136.4zM601.4 -153.3L618.3 -133.6L598.6 -116.7L581.7 -136.4zM649.4 -153.3L666.3 -133.6L646.6 -116.7L629.7 -136.4zM697.4 -153.3L714.3 -133.6L694.6 -116.7L677.7 -136.4zM745.4 -153.3L762.3 -133.6L742.6 -116.7L725.7 -136.4zM793.4 -153.3L810.3 -133.6L790.6 -116.7L773.7 -136.4zM841.4 -153.3L858.3 -133.6L838.6 -116.7L821.7 -136.4zM889.4 -153.3L906.3 -133.6L886.6 -116.7L869.7 -136.4zM937.4 -153.3L954.3 -133.6L934.6 -116.7L917.7 -136.4zM985.4 -153.3L1002.3 -133.6L982.6 -116.7L965.7 -136.4zM-958.6 -126.3L-941.7 -106.6L-961.4 -89.7L-978.3 -109.4zM-910.6 -126.3L-893.7 -106.6L-913.4 -89.7L-930.3 -109.4zM-862.6 -126.3L-845.7 -106.6L-865.4 -89.7L-882.3 -109.4zM-814.6 -126.3L-797.7 -106.6L-817.4 -89.7L-834.3 -109.4zM-766.6 -126.3L-749.7 -106.6L-769.4 -89.7L-786.3 -109.4zM-718.6 -126.3L-701.7 -106.6L-721.4 -89.7L-738.3 -109.4zM-670.6 -126.3L-653.7 -106.6L-673.4 -89.7L-690.3 -109.4zM-622.6 -126.3L-605.7 -106.6L-625.4 -89.7L-642.3 -109.4zM-574.6 -126.3L-557.7 -106.6L-577.4 -89.7L-594.3 -109.4zM-526.6 -126.3L-509.7 -106.6L-529.4 -89.7L-546.3 -109.4zM-478.6 -126.3L-461.7 -106.6L-481.4 -89.7L-498.3 -109.4zM-430.6 -126.3L-413.7 -106.6L-433.4 -89.7L-450.3 -109.4zM-382.6 -126.3L-365.7 -106.6L-385.4 -89.7L-402.3 -109.4zM-334.6 -126.3L-317.7 -106.6L-337.4 -89.7L-354.3 -109.4zM-286.6 -126.3L-269.7 -106.6L-289.4 -89.7L-306.3 -109.4zM-238.6 -126.3L-221.7 -106.6L-241.4 -89.7L-258.3 -109.4zM-190.6 -126.3L-173.7 -106.6L-193.4 -89.7L-210.3 -109.4zM-142.6 -126.3L-125.7 -106.6L-145.4 -89.7L-162.3 -109.4zM-94.6 -126.3L-77.7 -106.6L-97.4 -89.7L-114.3 -109.4zM-46.6 -126.3L-29.7 -106.6L-49.4 -89.7L-66.3 -109.4zM1.4 -126.3L18.3 -106.6L-1.4 -89.7L-18.3 -109.4zM49.4 -126.3L66.3 -106.6L46.6 -89.7L29.7 -109.4zM97.4 -126.3L114.3 -106.6L94.6 -89.7L77.7 -109.4zM145.4 -126.3L162.3 -106.6L142.6 -89.7L125.7 -109.4zM193.4 -126.3L210.3 -106.6L190.6 -89.7L173.7 -109.4zM241.4 -126.3L258.3 -106.6L238.6 -89.7L221.7 -109.4zM289.4 -126.3L306.3 -106.6L286.6 -89.7L269.7 -109.4zM337.4 -126.3L354.3 -106.6L334.6 -89.7L317.7 -109.4zM385.4 -126.3L402.3 -106.6L382.6 -89.7L365.7 -109.4zM433.4 -126.3L450.3 -106.6L430.6 -89.7L413.7 -109.4zM481.4 -126.3L498.3 -106.6L478.6 -89.7L461.7 -109.4zM529.4 -126.3L546.3 -106.6L526.6 -89.7L509.7 -109.4zM577.4 -126.3L594.3 -106.6L574.6 -89.7L557.7 -109.4zM625.4 -126.3L642.3 -106.6L622.6 -89.7L605.7 -109.4zM673.4 -126.3L690.3 -106.6L670.6 -89.7L653.7 -109.4zM721.4 -126.3L738.3 -106.6L718.6 -89.7L701.7 -109.4zM769.4 -126.3L786.3 -106.6L766.6 -89.7L749.7 -109.4zM817.4 -126.3L834.3 -106.6L814.6 -89.7L797.7 -109.4zM865.4 -126.3L882.3 -106.6L862.6 -89.7L845.7 -109.4zM913.4 -126.3L930.3 -106.6L910.6 -89.7L893.7 -109.4zM961.4 -126.3L978.3 -106.6L958.6 -89.7L941.7 -109.4zM-934.6 -99.3L-917.7 -79.6L-937.4 -62.7L-954.3 -82.4zM-886.6 -99.3L-869.7 -79.6L-889.4 -62.7L-906.3 -82.4zM-838.6 -99.3L-821.7 -79.6L-841.4 -62.7L-858.3 -82.4zM-790.6 -99.3L-773.7 -79.6L-793.4 -62.7L-810.3 -82.4zM-742.6 -99.3L-725.7 -79.6L-745.4 -62.7L-762.3 -82.4zM-694.6 -99.3L-677.7 -79.6L-697.4 -62.7L-714.3 -82.4zM-646.6 -99.3L-629.7 -79.6L-649.4 -62.7L-666.3 -82.4zM-598.6 -99.3L-581.7 -79.6L-601.4 -62.7L-618.3 -82.4zM-550.6 -99.3L-533.7 -79.6L-553.4 -62.7L-570.3 -82.4zM-502.6 -99.3L-485.7 -79.6L-505.4 -62.7L-522.3 -82.4zM-454.6 -99.3L-437.7 -79.6L-457.4 -62.7L-474.3 -82.4zM-406.6 -99.3L-389.7 -79.6L-409.4 -62.7L-426.3 -82.4zM-358.6 -99.3L-341.7 -79.6L-361.4 -62.7L-378.3 -82.4zM-310.6 -99.3L-293.7 -79.6L-313.4 -62.7L-330.3 -82.4zM-262.6 -99.3L-245.7 -79.6L-265.4 -62.7L-282.3 -82.4zM-214.6 -99.3L-197.7 -79.6L-217.4 -62.7L-234.3 -82.4zM-166.6 -99.3L-149.7 -79.6L-169.4 -62.7L-186.3 -82.4zM-118.6 -99.3L-101.7 -79.6L-121.4 -62.7L-138.3 -82.4zM-70.6 -99.3L-53.7 -79.6L-73.4 -62.7L-90.3 -82.4zM-22.6 -99.3L-5.7 -79.6L-25.4 -62.7L-42.3 -82.4zM25.4 -99.3L42.3 -79.6L22.6 -62.7L5.7 -82.4zM73.4 -99.3L90.3 -79.6L70.6 -62.7L53.7 -82.4zM121.4 -99.3L138.3 -79.6L118.6 -62.7L101.7 -82.4zM169.4 -99.3L186.3 -79.6L166.6 -62.7L149.7 -82.4zM217.4 -99.3L234.3 -79.6L214.6 -62.7L197.7 -82.4zM265.4 -99.3L282.3 -79.6L262.6 -62.7L245.7 -82.4zM313.4 -99.3L330.3 -79.6L310.6 -62.7L293.7 -82.4zM361.4 -99.3L378.3 -79.6L358.6 -62.7L341.7 -82.4zM409.4 -99.3L426.3 -79.6L406.6 -62.7L389.7 -82.4zM457.4 -99.3L474.3 -79.6L454.6 -62.7L437.7 -82.4zM505.4 -99.3L522.3 -79.6L502.6 -62.7L485.7 -82.4zM553.4 -99.3L570.3 -79.6L550.6 -62.7L533.7 -82.4zM601.4 -99.3L618.3 -79.6L598.6 -62.7L581.7 -82.4zM649.4 -99.3L666.3 -79.6L646.6 -62.7L629.7 -82.4zM697.4 -99.3L714.3 -79.6L694.6 -62.7L677.7 -82.4zM745.4 -99.3L762.3 -79.6L742.6 -62.7L725.7 -82.4zM793.4 -99.3L810.3 -79.6L790.6 -62.7L773.7 -82.4zM841.4 -99.3L858.3 -79.6L838.6 -62.7L821.7 -82.4zM889.4 -99.3L906.3 -79.6L886.6 -62.7L869.7 -82.4zM937.4 -99.3L954.3 -79.6L934.6 -62.7L917.7 -82.4zM985.4 -99.3L1002.3 -79.6L982.6 -62.7L965.7 -82.4zM-958.6 -72.3L-941.7 -52.6L-961.4 -35.7L-978.3 -55.4zM-910.6 -72.3L-893.7 -52.6L-913.4 -35.7L-930.3 -55.4zM-862.6 -72.3L-845.7 -52.6L-865.4 -35.7L-882.3 -55.4zM-814.6 -72.3L-797.7 -52.6L-817.4 -35.7L-834.3 -55.4zM-766.6 -72.3L-749.7 -52.6L-769.4 -35.7L-786.3 -55.4zM-718.6 -72.3L-701.7 -52.6L-721.4 -35.7L-738.3 -55.4zM-670.6 -72.3L-653.7 -52.6L-673.4 -35.7L-690.3 -55.4zM-622.6 -72.3L-605.7 -52.6L-625.4 -35.7L-642.3 -55.4zM-574.6 -72.3L-557.7 -52.6L-577.4 -35.7L-594.3 -55.4zM-526.6 -72.3L-509.7 -52.6L-529.4 -35.7L-546.3 -55.4zM-478.6 -72.3L-461.7 -52.6L-481.4 -35.7L-498.3 -55.4zM-430.6 -72.3L-413.7 -52.6L-433.4 -35.7L-450.3 -55.4zM-382.6 -72.3L-365.7 -52.6L-385.4 -35.7L-402.3 -55.4zM-334.6 -72.3L-317.7 -52.6L-337.4 -35.7L-354.3 -55.4zM-286.6 -72.3L-269.7 -52.6L-289.4 -35.7L-306.3 -55.4zM-238.6 -72.3L-221.7 -52.6L-241.4 -35.7L-258.3 -55.4zM-190.6 -72.3L-173.7 -52.6L-193.4 -35.7L-210.3 -55.4zM-142.6 -72.3L-125.7 -52.6L-145.4 -35.7L-162.3 -55.4zM-94.6 -72.3L-77.7 -52.6L-97.4 -35.7L-114.3 -55.4zM-46.6 -72.3L-29.7 -52.6L-49.4 -35.7L-66.3 -55.4zM1.4 -72.3L18.3 -52.6L-1.4 -35.7L-18.3 -55.4zM49.4 -72.3L66.3 -52.6L46.6 -35.7L29.7 -55.4zM97.4 -72.3L114.3 -52.6L94.6 -35.7L77.7 -55.4zM145.4 -72.3L162.3 -52.6L142.6 -35.7L125.7 -55.4zM193.4 -72.3L210.3 -52.6L190.6 -35.7L173.7 -55.4zM241.4 -72.3L258.3 -52.6L238.6 -35.7L221.7 -55.4zM289.4 -72.3L306.3 -52.6L286.6 -35.7L269.7 -55.4zM337.4 -72.3L354.3 -52.6L334.6 -35.7L317.7 -55.4zM385.4 -72.3L402.3 -52.6L382.6 -35.7L365.7 -55.4zM433.4 -72.3L450.3 -52.6L430.6 -35.7L413.7 -55.4zM481.4 -72.3L498.3 -52.6L478.6 -35.7L461.7 -55.4zM529.4 -72.3L546.3 -52.6L526.6 -35.7L509.7 -55.4zM577.4 -72.3L594.3 -52.6L574.6 -35.7L557.7 -55.4zM625.4 -72.3L642.3 -52.6L622.6 -35.7L605.7 -55.4zM673.4 -72.3L690.3 -52.6L670.6 -35.7L653.7 -55.4zM721.4 -72.3L738.3 -52.6L718.6 -35.7L701.7 -55.4zM769.4 -72.3L786.3 -52.6L766.6 -35.7L749.7 -55.4zM817.4 -72.3L834.3 -52.6L814.6 -35.7L797.7 -55.4zM865.4 -72.3L882.3 -52.6L862.6 -35.7L845.7 -55.4zM913.4 -72.3L930.3 -52.6L910.6 -35.7L893.7 -55.4zM961.4 -72.3L978.3 -52.6L958.6 -35.7L941.7 -55.4zM-934.6 -45.3L-917.7 -25.6L-937.4 -8.7L-954.3 -28.4zM-886.6 -45.3L-869.7 -25.6L-889.4 -8.7L-906.3 -28.4zM-838.6 -45.3L-821.7 -25.6L-841.4 -8.7L-858.3 -28.4zM-790.6 -45.3L-773.7 -25.6L-793.4 -8.7L-810.3 -28.4zM-742.6 -45.3L-725.7 -25.6L-745.4 -8.7L-762.3 -28.4zM-694.6 -45.3L-677.7 -25.6L-697.4 -8.7L-714.3 -28.4zM-646.6 -45.3L-629.7 -25.6L-649.4 -8.7L-666.3 -28.4zM-598.6 -45.3L-581.7 -25.6L-601.4 -8.7L-618.3 -28.4zM-550.6 -45.3L-533.7 -25.6L-553.4 -8.7L-570.3 -28.4zM-502.6 -45.3L-485.7 -25.6L-505.4 -8.7L-522.3 -28.4zM-454.6 -45.3L-437.7 -25.6L-457.4 -8.7L-474.3 -28.4zM-406.6 -45.3L-389.7 -25.6L-409.4 -8.7L-426.3 -28.4zM-358.6 -45.3L-341.7 -25.6L-361.4 -8.7L-378.3 -28.4zM-310.6 -45.3L-293.7 -25.6L-313.4 -8.7L-330.3 -28.4zM-262.6 -45.3L-245.7 -25.6L-265.4 -8.7L-282.3 -28.4zM-214.6 -45.3L-197.7 -25.6L-217.4 -8.7L-234.3 -28.4zM-166.6 -45.3L-149.7 -25.6L-169.4 -8.7L-186.3 -28.4zM-118.6 -45.3L-101.7 -25.6L-121.4 -8.7L-138.3 -28.4zM-70.6 -45.3L-53.7 -25.6L-73.4 -8.7L-90.3 -28.4zM-22.6 -45.3L-5.7 -25.6L-25.4 -8.7L-42.3 -28.4zM25.4 -45.3L42.3 -25.6L22.6 -8.7L5.7 -28.4zM73.4 -45.3L90.3 -25.6L70.6 -8.7L53.7 -28.4zM121.4 -45.3L138.3 -25.6L118.6 -8.7L101.7 -28.4zM169.4 -45.3L186.3 -25.6L166.6 -8.7L149.7 -28.4zM217.4 -45.3L234.3 -25.6L214.6 -8.7L197.7 -28.4zM265.4 -45.3L282.3 -25.6L262.6 -8.7L245.7 -28.4zM313.4 -45.3L330.3 -25.6L310.6 -8.7L293.7 -28.4zM361.4 -45.3L378.3 -25.6L358.6 -8.7L341.7 -28.4zM409.4 -45.3L426.3 -25.6L406.6 -8.7L389.7 -28.4zM457.4 -45.3L474.3 -25.6L454.6 -8.7L437.7 -28.4zM505.4 -45.3L522.3 -25.6L502.6 -8.7L485.7 -28.4zM553.4 -45.3L570.3 -25.6L550.6 -8.7L533.7 -28.4zM601.4 -45.3L618.3 -25.6L598.6 -8.7L581.7 -28.4zM649.4 -45.3L666.3 -25.6L646.6 -8.7L629.7 -28.4zM697.4 -45.3L714.3 -25.6L694.6 -8.7L677.7 -28.4zM745.4 -45.3L762.3 -25.6L742.6 -8.7L725.7 -28.4zM793.4 -45.3L810.3 -25.6L790.6 -8.7L773.7 -28.4zM841.4 -45.3L858.3 -25.6L838.6 -8.7L821.7 -28.4zM889.4 -45.3L906.3 -25.6L886.6 -8.7L869.7 -28.4zM937.4 -45.3L954.3 -25.6L934.6 -8.7L917.7 -28.4zM985.4 -45.3L1002.3 -25.6L982.6 -8.7L965.7 -28.4zM-958.6 -18.3L-941.7 1.4L-961.4 18.3L-978.3 -1.4zM-910.6 -18.3L-893.7 1.4L-913.4 18.3L-930.3 -1.4zM-862.6 -18.3L-845.7 1.4L-865.4 18.3L-882.3 -1.4zM-814.6 -18.3L-797.7 1.4L-817.4 18.3L-834.3 -1.4zM-766.6 -18.3L-749.7 1.4L-769.4 18.3L-786.3 -1.4zM-718.6 -18.3L-701.7 1.4L-721.4 18.3L-738.3 -1.4zM-670.6 -18.3L-653.7 1.4L-673.4 18.3L-690.3 -1.4zM-622.6 -18.3L-605.7 1.4L-625.4 18.3L-642.3 -1.4zM-574.6 -18.3L-557.7 1.4L-577.4 18.3L-594.3 -1.4zM-526.6 -18.3L-509.7 1.4L-529.4 18.3L-546.3 -1.4zM-478.6 -18.3L-461.7 1.4L-481.4 18.3L-498.3 -1.4zM-430.6 -18.3L-413.7 1.4L-433.4 18.3L-450.3 -1.4zM-382.6 -18.3L-365.7 1.4L-385.4 18.3L-402.3 -1.4zM-334.6 -18.3L-317.7 1.4L-337.4 18.3L-354.3 -1.4zM-286.6 -18.3L-269.7 1.4L-289.4 18.3L-306.3 -1.4zM-238.6 -18.3L-221.7 1.4L-241.4 18.3L-258.3 -1.4zM-190.6 -18.3L-173.7 1.4L-193.4 18.3L-210.3 -1.4zM-142.6 -18.3L-125.7 1.4L-145.4 18.3L-162.3 -1.4zM-94.6 -18.3L-77.7 1.4L-97.4 18.3L-114.3 -1.4zM-46.6 -18.3L-29.7 1.4L-49.4 18.3L-66.3 -1.4zM1.4 -18.3L18.3 1.4L-1.4 18.3L-18.3 -1.4zM49.4 -18.3L66.3 1.4L46.6 18.3L29.7 -1.4zM97.4 -18.3L114.3 1.4L94.6 18.3L77.7 -1.4zM145.4 -18.3L162.3 1.4L142.6 18.3L125.7 -1.4zM193.4 -18.3L210.3 1.4L190.6 18.3L173.7 -1.4zM241.4 -18.3L258.3 1.4L238.6 18.3L221.7 -1.4zM289.4 -18.3L306.3 1.4L286.6 18.3L269.7 -1.4zM337.4 -18.3L354.3 1.4L334.6 18.3L317.7 -1.4zM385.4 -18.3L402.3 1.4L382.6 18.3L365.7 -1.4zM433.4 -18.3L450.3 1.4L430.6 18.3L413.7 -1.4zM481.4 -18.3L498.3 1.4L478.6 18.3L461.7 -1.4zM529.4 -18.3L546.3 1.4L526.6 18.3L509.7 -1.4zM577.4 -18.3L594.3 1.4L574.6 18.3L557.7 -1.4zM625.4 -18.3L642.3 1.4L622.6 18.3L605.7 -1.4zM673.4 -18.3L690.3 1.4L670.6 18.3L653.7 -1.4zM721.4 -18.3L738.3 1.4L718.6 18.3L701.7 -1.4zM769.4 -18.3L786.3 1.4L766.6 18.3L749.7 -1.4zM817.4 -18.3L834.3 1.4L814.6 18.3L797.7 -1.4zM865.4 -18.3L882.3 1.4L862.6 18.3L845.7 -1.4zM913.4 -18.3L930.3 1.4L910.6 18.3L893.7 -1.4zM961.4 -18.3L978.3 1.4L958.6 18.3L941.7 -1.4zM-934.6 8.7L-917.7 28.4L-937.4 45.3L-954.3 25.6zM-886.6 8.7L-869.7 28.4L-889.4 45.3L-906.3 25.6zM-838.6 8.7L-821.7 28.4L-841.4 45.3L-858.3 25.6zM-790.6 8.7L-773.7 28.4L-793.4 45.3L-810.3 25.6zM-742.6 8.7L-725.7 28.4L-745.4 45.3L-762.3 25.6zM-694.6 8.7L-677.7 28.4L-697.4 45.3L-714.3 25.6zM-646.6 8.7L-629.7 28.4L-649.4 45.3L-666.3 25.6zM-598.6 8.7L-581.7 28.4L-601.4 45.3L-618.3 25.6zM-550.6 8.7L-533.7 28.4L-553.4 45.3L-570.3 25.6zM-502.6 8.7L-485.7 28.4L-505.4 45.3L-522.3 25.6zM-454.6 8.7L-437.7 28.4L-457.4 45.3L-474.3 25.6zM-406.6 8.7L-389.7 28.4L-409.4 45.3L-426.3 25.6zM-358.6 8.7L-341.7 28.4L-361.4 45.3L-378.3 25.6zM-310.6 8.7L-293.7 28.4L-313.4 45.3L-330.3 25.6zM-262.6 8.7L-245.7 28.4L-265.4 45.3L-282.3 25.6zM-214.6 8.7L-197.7 28.4L-217.4 45.3L-234.3 25.6zM-166.6 8.7L-149.7 28.4L-169.4 45.3L-186.3 25.6zM-118.6 8.7L-101.7 28.4L-121.4 45.3L-138.3 25.6zM-70.6 8.7L-53.7 28.4L-73.4 45.3L-90.3 25.6zM-22.6 8.7L-5.7 28.4L-25.4 45.3L-42.3 25.6zM25.4 8.7L42.3 28.4L22.6 45.3L5.7 25.6zM73.4 8.7L90.3 28.4L70.6 45.3L53.7 25.6zM121.4 8.7L138.3 28.4L118.6 45.3L101.7 25.6zM169.4 8.7L186.3 28.4L166.6 45.3L149.7 25.6zM217.4 8.7L234.3 28.4L214.6 45.3L197.7 25.6zM265.4 8.7L282.3 28.4L262.6 45.3L245.7 25.6zM313.4 8.7L330.3 28.4L310.6 45.3L293.7 25.6zM361.4 8.7L378.3 28.4L358.6 45.3L341.7 25.6zM409.4 8.7L426.3 28.4L406.6 45.3L389.7 25.6zM457.4 8.7L474.3 28.4L454.6 45.3L437.7 25.6zM505.4 8.7L522.3 28.4L502.6 45.3L485.7 25.6zM553.4 8.7L570.3 28.4L550.6 45.3L533.7 25.6zM601.4 8.7L618.3 28.4L598.6 45.3L581.7 25.6zM649.4 8.7L666.3 28.4L646.6 45.3L629.7 25.6zM697.4 8.7L714.3 28.4L694.6 45.3L677.7 25.6zM745.4 8.7L762.3 28.4L742.6 45.3L725.7 25.6zM793.4 8.7L810.3 28.4L790.6 45.3L773.7 25.6zM841.4 8.7L858.3 28.4L838.6 45.3L821.7 25.6zM889.4 8.7L906.3 28.4L886.6 45.3L869.7 25.6zM937.4 8.7L954.3 28.4L934.6 45.3L917.7 25.6zM985.4 8.7L1002.3 28.4L982.6 45.3L965.7 25.6zM-958.6 35.7L-941.7 55.4L-961.4 72.3L-978.3 52.6zM-910.6 35.7L-893.7 55.4L-913.4 72.3L-930.3 52.6zM-862.6 35.7L-845.7 55.4L-865.4 72.3L-882.3 52.6zM-814.6 35.7L-797.7 55.4L-817.4 72.3L-834.3 52.6zM-766.6 35.7L-749.7 55.4L-769.4 72.3L-786.3 52.6zM-718.6 35.7L-701.7 55.4L-721.4 72.3L-738.3 52.6zM-670.6 35.7L-653.7 55.4L-673.4 72.3L-690.3 52.6zM-622.6 35.7L-605.7 55.4L-625.4 72.3L-642.3 52.6zM-574.6 35.7L-557.7 55.4L-577.4 72.3L-594.3 52.6zM-526.6 35.7L-509.7 55.4L-529.4 72.3L-546.3 52.6zM-478.6 35.7L-461.7 55.4L-481.4 72.3L-498.3 52.6zM-430.6 35.7L-413.7 55.4L-433.4 72.3L-450.3 52.6zM-382.6 35.7L-365.7 55.4L-385.4 72.3L-402.3 52.6zM-334.6 35.7L-317.7 55.4L-337.4 72.3L-354.3 52.6zM-286.6 35.7L-269.7 55.4L-289.4 72.3L-306.3 52.6zM-238.6 35.7L-221.7 55.4L-241.4 72.3L-258.3 52.6zM-190.6 35.7L-173.7 55.4L-193.4 72.3L-210.3 52.6zM-142.6 35.7L-125.7 55.4L-145.4 72.3L-162.3 52.6zM-94.6 35.7L-77.7 55.4L-97.4 72.3L-114.3 52.6zM-46.6 35.7L-29.7 55.4L-49.4 72.3L-66.3 52.6zM1.4 35.7L18.3 55.4L-1.4 72.3L-18.3 52.6zM49.4 35.7L66.3 55.4L46.6 72.3L29.7 52.6zM97.4 35.7L114.3 55.4L94.6 72.3L77.7 52.6zM145.4 35.7L162.3 55.4L142.6 72.3L125.7 52.6zM193.4 35.7L210.3 55.4L190.6 72.3L173.7 52.6zM241.4 35.7L258.3 55.4L238.6 72.3L221.7 52.6zM289.4 35.7L306.3 55.4L286.6 72.3L269.7 52.6zM337.4 35.7L354.3 55.4L334.6 72.3L317.7 52.6zM385.4 35.7L402.3 55.4L382.6 72.3L365.7 52.6zM433.4 35.7L450.3 55.4L430.6 72.3L413.7 52.6zM481.4 35.7L498.3 55.4L478.6 72.3L461.7 52.6zM529.4 35.7L546.3 55.4L526.6 72.3L509.7 52.6zM577.4 35.7L594.3 55.4L574.6 72.3L557.7 52.6zM625.4 35.7L642.3 55.4L622.6 72.3L605.7 52.6zM673.4 35.7L690.3 55.4L670.6 72.3L653.7 52.6zM721.4 35.7L738.3 55.4L718.6 72.3L701.7 52.6zM769.4 35.7L786.3 55.4L766.6 72.3L749.7 52.6zM817.4 35.7L834.3 55.4L814.6 72.3L797.7 52.6zM865.4 35.7L882.3 55.4L862.6 72.3L845.7 52.6zM913.4 35.7L930.3 55.4L910.6 72.3L893.7 52.6zM961.4 35.7L978.3 55.4L958.6 72.3L941.7 52.6zM-934.6 62.7L-917.7 82.4L-937.4 99.3L-954.3 79.6zM-886.6 62.7L-869.7 82.4L-889.4 99.3L-906.3 79.6zM-838.6 62.7L-821.7 82.4L-841.4 99.3L-858.3 79.6zM-790.6 62.7L-773.7 82.4L-793.4 99.3L-810.3 79.6zM-742.6 62.7L-725.7 82.4L-745.4 99.3L-762.3 79.6zM-694.6 62.7L-677.7 82.4L-697.4 99.3L-714.3 79.6zM-646.6 62.7L-629.7 82.4L-649.4 99.3L-666.3 79.6zM-598.6 62.7L-581.7 82.4L-601.4 99.3L-618.3 79.6zM-550.6 62.7L-533.7 82.4L-553.4 99.3L-570.3 79.6zM-502.6 62.7L-485.7 82.4L-505.4 99.3L-522.3 79.6zM-454.6 62.7L-437.7 82.4L-457.4 99.3L-474.3 79.6zM-406.6 62.7L-389.7 82.4L-409.4 99.3L-426.3 79.6zM-358.6 62.7L-341.7 82.4L-361.4 99.3L-378.3 79.6zM-310.6 62.7L-293.7 82.4L-313.4 99.3L-330.3 79.6zM-262.6 62.7L-245.7 82.4L-265.4 99.3L-282.3 79.6zM-214.6 62.7L-197.7 82.4L-217.4 99.3L-234.3 79.6zM-166.6 62.7L-149.7 82.4L-169.4 99.3L-186.3 79.6zM-118.6 62.7L-101.7 82.4L-121.4 99.3L-138.3 79.6zM-70.6 62.7L-53.7 82.4L-73.4 99.3L-90.3 79.6zM-22.6 62.7L-5.7 82.4L-25.4 99.3L-42.3 79.6zM25.4 62.7L42.3 82.4L22.6 99.3L5.7 79.6zM73.4 62.7L90.3 82.4L70.6 99.3L53.7 79.6zM121.4 62.7L138.3 82.4L118.6 99.3L101.7 79.6zM169.4 62.7L186.3 82.4L166.6 99.3L149.7 79.6zM217.4 62.7L234.3 82.4L214.6 99.3L197.7 79.6zM265.4 62.7L282.3 82.4L262.6 99.3L245.7 79.6zM313.4 62.7L330.3 82.4L310.6 99.3L293.7 79.6zM361.4 62.7L378.3 82.4L358.6 99.3L341.7 79.6zM409.4 62.7L426.3 82.4L406.6 99.3L389.7 79.6zM457.4 62.7L474.3 82.4L454.6 99.3L437.7 79.6zM505.4 62.7L522.3 82.4L502.6 99.3L485.7 79.6zM553.4 62.7L570.3 82.4L550.6 99.3L533.7 79.6zM601.4 62.7L618.3 82.4L598.6 99.3L581.7 79.6zM649.4 62.7L666.3 82.4L646.6 99.3L629.7 79.6zM697.4 62.7L714.3 82.4L694.6 99.3L677.7 79.6zM745.4 62.7L762.3 82.4L742.6 99.3L725.7 79.6zM793.4 62.7L810.3 82.4L790.6 99.3L773.7 79.6zM841.4 62.7L858.3 82.4L838.6 99.3L821.7 79.6zM889.4 62.7L906.3 82.4L886.6 99.3L869.7 79.6zM937.4 62.7L954.3 82.4L934.6 99.3L917.7 79.6zM985.4 62.7L1002.3 82.4L982.6 99.3L965.7 79.6zM-958.6 89.7L-941.7 109.4L-961.4 126.3L-978.3 106.6zM-910.6 89.7L-893.7 109.4L-913.4 126.3L-930.3 106.6zM-862.6 89.7L-845.7 109.4L-865.4 126.3L-882.3 106.6zM-814.6 89.7L-797.7 109.4L-817.4 126.3L-834.3 106.6zM-766.6 89.7L-749.7 109.4L-769.4 126.3L-786.3 106.6zM-718.6 89.7L-701.7 109.4L-721.4 126.3L-738.3 106.6zM-670.6 89.7L-653.7 109.4L-673.4 126.3L-690.3 106.6zM-622.6 89.7L-605.7 109.4L-625.4 126.3L-642.3 106.6zM-574.6 89.7L-557.7 109.4L-577.4 126.3L-594.3 106.6zM-526.6 89.7L-509.7 109.4L-529.4 126.3L-546.3 106.6zM-478.6 89.7L-461.7 109.4L-481.4 126.3L-498.3 106.6zM-430.6 89.7L-413.7 109.4L-433.4 126.3L-450.3 106.6zM-382.6 89.7L-365.7 109.4L-385.4 126.3L-402.3 106.6zM-334.6 89.7L-317.7 109.4L-337.4 126.3L-354.3 106.6zM-286.6 89.7L-269.7 109.4L-289.4 126.3L-306.3 106.6zM-238.6 89.7L-221.7 109.4L-241.4 126.3L-258.3 106.6zM-190.6 89.7L-173.7 109.4L-193.4 126.3L-210.3 106.6zM-142.6 89.7L-125.7 109.4L-145.4 126.3L-162.3 106.6zM-94.6 89.7L-77.7 109.4L-97.4 126.3L-114.3 106.6zM-46.6 89.7L-29.7 109.4L-49.4 126.3L-66.3 106.6zM1.4 89.7L18.3 109.4L-1.4 126.3L-18.3 106.6zM49.4 89.7L66.3 109.4L46.6 126.3L29.7 106.6zM97.4 89.7L114.3 109.4L94.6 126.3L77.7 106.6zM145.4 89.7L162.3 109.4L142.6 126.3L125.7 106.6zM193.4 89.7L210.3 109.4L190.6 126.3L173.7 106.6zM241.4 89.7L258.3 109.4L238.6 126.3L221.7 106.6zM289.4 89.7L306.3 109.4L286.6 126.3L269.7 106.6zM337.4 89.7L354.3 109.4L334.6 126.3L317.7 106.6zM385.4 89.7L402.3 109.4L382.6 126.3L365.7 106.6zM433.4 89.7L450.3 109.4L430.6 126.3L413.7 106.6zM481.4 89.7L498.3 109.4L478.6 126.3L461.7 106.6zM529.4 89.7L546.3 109.4L526.6 126.3L509.7 106.6zM577.4 89.7L594.3 109.4L574.6 126.3L557.7 106.6zM625.4 89.7L642.3 109.4L622.6 126.3L605.7 106.6zM673.4 89.7L690.3 109.4L670.6 126.3L653.7 106.6zM721.4 89.7L738.3 109.4L718.6 126.3L701.7 106.6zM769.4 89.7L786.3 109.4L766.6 126.3L749.7 106.6zM817.4 89.7L834.3 109.4L814.6 126.3L797.7 106.6zM865.4 89.7L882.3 109.4L862.6 126.3L845.7 106.6zM913.4 89.7L930.3 109.4L910.6 126.3L893.7 106.6zM961.4 89.7L978.3 109.4L958.6 126.3L941.7 106.6zM-934.6 116.7L-917.7 136.4L-937.4 153.3L-954.3 133.6zM-886.6 116.7L-869.7 136.4L-889.4 153.3L-906.3 133.6zM-838.6 116.7L-821.7 136.4L-841.4 153.3L-858.3 133.6zM-790.6 116.7L-773.7 136.4L-793.4 153.3L-810.3 133.6zM-742.6 116.7L-725.7 136.4L-745.4 153.3L-762.3 133.6zM-694.6 116.7L-677.7 136.4L-697.4 153.3L-714.3 133.6zM-646.6 116.7L-629.7 136.4L-649.4 153.3L-666.3 133.6zM-598.6 116.7L-581.7 136.4L-601.4 153.3L-618.3 133.6zM-550.6 116.7L-533.7 136.4L-553.4 153.3L-570.3 133.6zM-502.6 116.7L-485.7 136.4L-505.4 153.3L-522.3 133.6zM-454.6 116.7L-437.7 136.4L-457.4 153.3L-474.3 133.6zM-406.6 116.7L-389.7 136.4L-409.4 153.3L-426.3 133.6zM-358.6 116.7L-341.7 136.4L-361.4 153.3L-378.3 133.6zM-310.6 116.7L-293.7 136.4L-313.4 153.3L-330.3 133.6zM-262.6 116.7L-245.7 136.4L-265.4 153.3L-282.3 133.6zM-214.6 116.7L-197.7 136.4L-217.4 153.3L-234.3 133.6zM-166.6 116.7L-149.7 136.4L-169.4 153.3L-186.3 133.6zM-118.6 116.7L-101.7 136.4L-121.4 153.3L-138.3 133.6zM-70.6 116.7L-53.7 136.4L-73.4 153.3L-90.3 133.6zM-22.6 116.7L-5.7 136.4L-25.4 153.3L-42.3 133.6zM25.4 116.7L42.3 136.4L22.6 153.3L5.7 133.6zM73.4 116.7L90.3 136.4L70.6 153.3L53.7 133.6zM121.4 116.7L138.3 136.4L118.6 153.3L101.7 133.6zM169.4 116.7L186.3 136.4L166.6 153.3L149.7 133.6zM217.4 116.7L234.3 136.4L214.6 153.3L197.7 133.6zM265.4 116.7L282.3 136.4L262.6 153.3L245.7 133.6zM313.4 116.7L330.3 136.4L310.6 153.3L293.7 133.6zM361.4 116.7L378.3 136.4L358.6 153.3L341.7 133.6zM409.4 116.7L426.3 136.4L406.6 153.3L389.7 133.6zM457.4 116.7L474.3 136.4L454.6 153.3L437.7 133.6zM505.4 116.7L522.3 136.4L502.6 153.3L485.7 133.6zM553.4 116.7L570.3 136.4L550.6 153.3L533.7 133.6zM601.4 116.7L618.3 136.4L598.6 153.3L581.7 133.6zM649.4 116.7L666.3 136.4L646.6 153.3L629.7 133.6zM697.4 116.7L714.3 136.4L694.6 153.3L677.7 133.6zM745.4 116.7L762.3 136.4L742.6 153.3L725.7 133.6zM793.4 116.7L810.3 136.4L790.6 153.3L773.7 133.6zM841.4 116.7L858.3 136.4L838.6 153.3L821.7 133.6zM889.4 116.7L906.3 136.4L886.6 153.3L869.7 133.6zM937.4 116.7L954.3 136.4L934.6 153.3L917.7 133.6zM985.4 116.7L1002.3 136.4L982.6 153.3L965.7 133.6zM-958.6 143.7L-941.7 163.4L-961.4 180.3L-978.3 160.6zM-910.6 143.7L-893.7 163.4L-913.4 180.3L-930.3 160.6zM-862.6 143.7L-845.7 163.4L-865.4 180.3L-882.3 160.6zM-814.6 143.7L-797.7 163.4L-817.4 180.3L-834.3 160.6zM-766.6 143.7L-749.7 163.4L-769.4 180.3L-786.3 160.6zM-718.6 143.7L-701.7 163.4L-721.4 180.3L-738.3 160.6zM-670.6 143.7L-653.7 163.4L-673.4 180.3L-690.3 160.6zM-622.6 143.7L-605.7 163.4L-625.4 180.3L-642.3 160.6zM-574.6 143.7L-557.7 163.4L-577.4 180.3L-594.3 160.6zM-526.6 143.7L-509.7 163.4L-529.4 180.3L-546.3 160.6zM-478.6 143.7L-461.7 163.4L-481.4 180.3L-498.3 160.6zM-430.6 143.7L-413.7 163.4L-433.4 180.3L-450.3 160.6zM-382.6 143.7L-365.7 163.4L-385.4 180.3L-402.3 160.6zM-334.6 143.7L-317.7 163.4L-337.4 180.3L-354.3 160.6zM-286.6 143.7L-269.7 163.4L-289.4 180.3L-306.3 160.6zM-238.6 143.7L-221.7 163.4L-241.4 180.3L-258.3 160.6zM-190.6 143.7L-173.7 163.4L-193.4 180.3L-210.3 160.6zM-142.6 143.7L-125.7 163.4L-145.4 180.3L-162.3 160.6zM-94.6 143.7L-77.7 163.4L-97.4 180.3L-114.3 160.6zM-46.6 143.7L-29.7 163.4L-49.4 180.3L-66.3 160.6zM1.4 143.7L18.3 163.4L-1.4 180.3L-18.3 160.6zM49.4 143.7L66.3 163.4L46.6 180.3L29.7 160.6zM97.4 143.7L114.3 163.4L94.6 180.3L77.7 160.6zM145.4 143.7L162.3 163.4L142.6 180.3L125.7 160.6zM193.4 143.7L210.3 163.4L190.6 180.3L173.7 160.6zM241.4 143.7L258.3 163.4L238.6 180.3L221.7 160.6zM289.4 143.7L306.3 163.4L286.6 180.3L269.7 160.6zM337.4 143.7L354.3 163.4L334.6 180.3L317.7 160.6zM385.4 143.7L402.3 163.4L382.6 180.3L365.7 160.6zM433.4 143.7L450.3 163.4L430.6 180.3L413.7 160.6zM481.4 143.7L498.3 163.4L478.6 180.3L461.7 160.6zM529.4 143.7L546.3 163.4L526.6 180.3L509.7 160.6zM577.4 143.7L594.3 163.4L574.6 180.3L557.7 160.6zM625.4 143.7L642.3 163.4L622.6 180.3L605.7 160.6zM673.4 143.7L690.3 163.4L670.6 180.3L653.7 160.6zM721.4 143.7L738.3 163.4L718.6 180.3L701.7 160.6zM769.4 143.7L786.3 163.4L766.6 180.3L749.7 160.6zM817.4 143.7L834.3 163.4L814.6 180.3L797.7 160.6zM865.4 143.7L882.3 163.4L862.6 180.3L845.7 160.6zM913.4 143.7L930.3 163.4L910.6 180.3L893.7 160.6zM961.4 143.7L978.3 163.4L958.6 180.3L941.7 160.6zM-934.6 170.7L-917.7 190.4L-937.4 207.3L-954.3 187.6zM-886.6 170.7L-869.7 190.4L-889.4 207.3L-906.3 187.6zM-838.6 170.7L-821.7 190.4L-841.4 207.3L-858.3 187.6zM-790.6 170.7L-773.7 190.4L-793.4 207.3L-810.3 187.6zM-742.6 170.7L-725.7 190.4L-745.4 207.3L-762.3 187.6zM-694.6 170.7L-677.7 190.4L-697.4 207.3L-714.3 187.6zM-646.6 170.7L-629.7 190.4L-649.4 207.3L-666.3 187.6zM-598.6 170.7L-581.7 190.4L-601.4 207.3L-618.3 187.6zM-550.6 170.7L-533.7 190.4L-553.4 207.3L-570.3 187.6zM-502.6 170.7L-485.7 190.4L-505.4 207.3L-522.3 187.6zM-454.6 170.7L-437.7 190.4L-457.4 207.3L-474.3 187.6zM-406.6 170.7L-389.7 190.4L-409.4 207.3L-426.3 187.6zM-358.6 170.7L-341.7 190.4L-361.4 207.3L-378.3 187.6zM-310.6 170.7L-293.7 190.4L-313.4 207.3L-330.3 187.6zM-262.6 170.7L-245.7 190.4L-265.4 207.3L-282.3 187.6zM-214.6 170.7L-197.7 190.4L-217.4 207.3L-234.3 187.6zM-166.6 170.7L-149.7 190.4L-169.4 207.3L-186.3 187.6zM-118.6 170.7L-101.7 190.4L-121.4 207.3L-138.3 187.6zM-70.6 170.7L-53.7 190.4L-73.4 207.3L-90.3 187.6zM-22.6 170.7L-5.7 190.4L-25.4 207.3L-42.3 187.6zM25.4 170.7L42.3 190.4L22.6 207.3L5.7 187.6zM73.4 170.7L90.3 190.4L70.6 207.3L53.7 187.6zM121.4 170.7L138.3 190.4L118.6 207.3L101.7 187.6zM169.4 170.7L186.3 190.4L166.6 207.3L149.7 187.6zM217.4 170.7L234.3 190.4L214.6 207.3L197.7 187.6zM265.4 170.7L282.3 190.4L262.6 207.3L245.7 187.6zM313.4 170.7L330.3 190.4L310.6 207.3L293.7 187.6zM361.4 170.7L378.3 190.4L358.6 207.3L341.7 187.6zM409.4 170.7L426.3 190.4L406.6 207.3L389.7 187.6zM457.4 170.7L474.3 190.4L454.6 207.3L437.7 187.6zM505.4 170.7L522.3 190.4L502.6 207.3L485.7 187.6zM553.4 170.7L570.3 190.4L550.6 207.3L533.7 187.6zM601.4 170.7L618.3 190.4L598.6 207.3L581.7 187.6zM649.4 170.7L666.3 190.4L646.6 207.3L629.7 187.6zM697.4 170.7L714.3 190.4L694.6 207.3L677.7 187.6zM745.4 170.7L762.3 190.4L742.6 207.3L725.7 187.6zM793.4 170.7L810.3 190.4L790.6 207.3L773.7 187.6zM841.4 170.7L858.3 190.4L838.6 207.3L821.7 187.6zM889.4 170.7L906.3 190.4L886.6 207.3L869.7 187.6zM937.4 170.7L954.3 190.4L934.6 207.3L917.7 187.6zM985.4 170.7L1002.3 190.4L982.6 207.3L965.7 187.6zM-958.6 197.7L-941.7 217.4L-961.4 234.3L-978.3 214.6zM-910.6 197.7L-893.7 217.4L-913.4 234.3L-930.3 214.6zM-862.6 197.7L-845.7 217.4L-865.4 234.3L-882.3 214.6zM-814.6 197.7L-797.7 217.4L-817.4 234.3L-834.3 214.6zM-766.6 197.7L-749.7 217.4L-769.4 234.3L-786.3 214.6zM-718.6 197.7L-701.7 217.4L-721.4 234.3L-738.3 214.6zM-670.6 197.7L-653.7 217.4L-673.4 234.3L-690.3 214.6zM-622.6 197.7L-605.7 217.4L-625.4 234.3L-642.3 214.6zM-574.6 197.7L-557.7 217.4L-577.4 234.3L-594.3 214.6zM-526.6 197.7L-509.7 217.4L-529.4 234.3L-546.3 214.6zM-478.6 197.7L-461.7 217.4L-481.4 234.3L-498.3 214.6zM-430.6 197.7L-413.7 217.4L-433.4 234.3L-450.3 214.6zM-382.6 197.7L-365.7 217.4L-385.4 234.3L-402.3 214.6zM-334.6 197.7L-317.7 217.4L-337.4 234.3L-354.3 214.6zM-286.6 197.7L-269.7 217.4L-289.4 234.3L-306.3 214.6zM-238.6 197.7L-221.7 217.4L-241.4 234.3L-258.3 214.6zM-190.6 197.7L-173.7 217.4L-193.4 234.3L-210.3 214.6zM-142.6 197.7L-125.7 217.4L-145.4 234.3L-162.3 214.6zM-94.6 197.7L-77.7 217.4L-97.4 234.3L-114.3 214.6zM-46.6 197.7L-29.7 217.4L-49.4 234.3L-66.3 214.6zM1.4 197.7L18.3 217.4L-1.4 234.3L-18.3 214.6zM49.4 197.7L66.3 217.4L46.6 234.3L29.7 214.6zM97.4 197.7L114.3 217.4L94.6 234.3L77.7 214.6zM145.4 197.7L162.3 217.4L142.6 234.3L125.7 214.6zM193.4 197.7L210.3 217.4L190.6 234.3L173.7 214.6zM241.4 197.7L258.3 217.4L238.6 234.3L221.7 214.6zM289.4 197.7L306.3 217.4L286.6 234.3L269.7 214.6zM337.4 197.7L354.3 217.4L334.6 234.3L317.7 214.6zM385.4 197.7L402.3 217.4L382.6 234.3L365.7 214.6zM433.4 197.7L450.3 217.4L430.6 234.3L413.7 214.6zM481.4 197.7L498.3 217.4L478.6 234.3L461.7 214.6zM529.4 197.7L546.3 217.4L526.6 234.3L509.7 214.6zM577.4 197.7L594.3 217.4L574.6 234.3L557.7 214.6zM625.4 197.7L642.3 217.4L622.6 234.3L605.7 214.6zM673.4 197.7L690.3 217.4L670.6 234.3L653.7 214.6zM721.4 197.7L738.3 217.4L718.6 234.3L701.7 214.6zM769.4 197.7L786.3 217.4L766.6 234.3L749.7 214.6zM817.4 197.7L834.3 217.4L814.6 234.3L797.7 214.6zM865.4 197.7L882.3 217.4L862.6 234.3L845.7 214.6zM913.4 197.7L930.3 217.4L910.6 234.3L893.7 214.6zM961.4 197.7L978.3 217.4L958.6 234.3L941.7 214.6zM-934.6 224.7L-917.7 244.4L-937.4 261.3L-954.3 241.6zM-886.6 224.7L-869.7 244.4L-889.4 261.3L-906.3 241.6zM-838.6 224.7L-821.7 244.4L-841.4 261.3L-858.3 241.6zM-790.6 224.7L-773.7 244.4L-793.4 261.3L-810.3 241.6zM-742.6 224.7L-725.7 244.4L-745.4 261.3L-762.3 241.6zM-694.6 224.7L-677.7 244.4L-697.4 261.3L-714.3 241.6zM-646.6 224.7L-629.7 244.4L-649.4 261.3L-666.3 241.6zM-598.6 224.7L-581.7 244.4L-601.4 261.3L-618.3 241.6zM-550.6 224.7L-533.7 244.4L-553.4 261.3L-570.3 241.6zM-502.6 224.7L-485.7 244.4L-505.4 261.3L-522.3 241.6zM-454.6 224.7L-437.7 244.4L-457.4 261.3L-474.3 241.6zM-406.6 224.7L-389.7 244.4L-409.4 261.3L-426.3 241.6zM-358.6 224.7L-341.7 244.4L-361.4 261.3L-378.3 241.6zM-310.6 224.7L-293.7 244.4L-313.4 261.3L-330.3 241.6zM-262.6 224.7L-245.7 244.4L-265.4 261.3L-282.3 241.6zM-214.6 224.7L-197.7 244.4L-217.4 261.3L-234.3 241.6zM-166.6 224.7L-149.7 244.4L-169.4 261.3L-186.3 241.6zM-118.6 224.7L-101.7 244.4L-121.4 261.3L-138.3 241.6zM-70.6 224.7L-53.7 244.4L-73.4 261.3L-90.3 241.6zM-22.6 224.7L-5.7 244.4L-25.4 261.3L-42.3 241.6zM25.4 224.7L42.3 244.4L22.6 261.3L5.7 241.6zM73.4 224.7L90.3 244.4L70.6 261.3L53.7 241.6zM121.4 224.7L138.3 244.4L118.6 261.3L101.7 241.6zM169.4 224.7L186.3 244.4L166.6 261.3L149.7 241.6zM217.4 224.7L234.3 244.4L214.6 261.3L197.7 241.6zM265.4 224.7L282.3 244.4L262.6 261.3L245.7 241.6zM313.4 224.7L330.3 244.4L310.6 261.3L293.7 241.6zM361.4 224.7L378.3 244.4L358.6 261.3L341.7 241.6zM409.4 224.7L426.3 244.4L406.6 261.3L389.7 241.6zM457.4 224.7L474.3 244.4L454.6 261.3L437.7 241.6zM505.4 224.7L522.3 244.4L502.6 261.3L485.7 241.6zM553.4 224.7L570.3 244.4L550.6 261.3L533.7 241.6zM601.4 224.7L618.3 244.4L598.6 261.3L581.7 241.6zM649.4 224.7L666.3 244.4L646.6 261.3L629.7 241.6zM697.4 224.7L714.3 244.4L694.6 261.3L677.7 241.6zM745.4 224.7L762.3 244.4L742.6 261.3L725.7 241.6zM793.4 224.7L810.3 244.4L790.6 261.3L773.7 241.6zM841.4 224.7L858.3 244.4L838.6 261.3L821.7 241.6zM889.4 224.7L906.3 244.4L886.6 261.3L869.7 241.6zM937.4 224.7L954.3 244.4L934.6 261.3L917.7 241.6zM985.4 224.7L1002.3 244.4L982.6 261.3L965.7 241.6zM-958.6 251.7L-941.7 271.4L-961.4 288.3L-978.3 268.6zM-910.6 251.7L-893.7 271.4L-913.4 288.3L-930.3 268.6zM-862.6 251.7L-845.7 271.4L-865.4 288.3L-882.3 268.6zM-814.6 251.7L-797.7 271.4L-817.4 288.3L-834.3 268.6zM-766.6 251.7L-749.7 271.4L-769.4 288.3L-786.3 268.6zM-718.6 251.7L-701.7 271.4L-721.4 288.3L-738.3 268.6zM-670.6 251.7L-653.7 271.4L-673.4 288.3L-690.3 268.6zM-622.6 251.7L-605.7 271.4L-625.4 288.3L-642.3 268.6zM-574.6 251.7L-557.7 271.4L-577.4 288.3L-594.3 268.6zM-526.6 251.7L-509.7 271.4L-529.4 288.3L-546.3 268.6zM-478.6 251.7L-461.7 271.4L-481.4 288.3L-498.3 268.6zM-430.6 251.7L-413.7 271.4L-433.4 288.3L-450.3 268.6zM-382.6 251.7L-365.7 271.4L-385.4 288.3L-402.3 268.6zM-334.6 251.7L-317.7 271.4L-337.4 288.3L-354.3 268.6zM-286.6 251.7L-269.7 271.4L-289.4 288.3L-306.3 268.6zM-238.6 251.7L-221.7 271.4L-241.4 288.3L-258.3 268.6zM-190.6 251.7L-173.7 271.4L-193.4 288.3L-210.3 268.6zM-142.6 251.7L-125.7 271.4L-145.4 288.3L-162.3 268.6zM-94.6 251.7L-77.7 271.4L-97.4 288.3L-114.3 268.6zM-46.6 251.7L-29.7 271.4L-49.4 288.3L-66.3 268.6zM1.4 251.7L18.3 271.4L-1.4 288.3L-18.3 268.6zM49.4 251.7L66.3 271.4L46.6 288.3L29.7 268.6zM97.4 251.7L114.3 271.4L94.6 288.3L77.7 268.6zM145.4 251.7L162.3 271.4L142.6 288.3L125.7 268.6zM193.4 251.7L210.3 271.4L190.6 288.3L173.7 268.6zM241.4 251.7L258.3 271.4L238.6 288.3L221.7 268.6zM289.4 251.7L306.3 271.4L286.6 288.3L269.7 268.6zM337.4 251.7L354.3 271.4L334.6 288.3L317.7 268.6zM385.4 251.7L402.3 271.4L382.6 288.3L365.7 268.6zM433.4 251.7L450.3 271.4L430.6 288.3L413.7 268.6zM481.4 251.7L498.3 271.4L478.6 288.3L461.7 268.6zM529.4 251.7L546.3 271.4L526.6 288.3L509.7 268.6zM577.4 251.7L594.3 271.4L574.6 288.3L557.7 268.6zM625.4 251.7L642.3 271.4L622.6 288.3L605.7 268.6zM673.4 251.7L690.3 271.4L670.6 288.3L653.7 268.6zM721.4 251.7L738.3 271.4L718.6 288.3L701.7 268.6zM769.4 251.7L786.3 271.4L766.6 288.3L749.7 268.6zM817.4 251.7L834.3 271.4L814.6 288.3L797.7 268.6zM865.4 251.7L882.3 271.4L862.6 288.3L845.7 268.6zM913.4 251.7L930.3 271.4L910.6 288.3L893.7 268.6zM961.4 251.7L978.3 271.4L958.6 288.3L941.7 268.6zM-934.6 278.7L-917.7 298.4L-937.4 315.3L-954.3 295.6zM-886.6 278.7L-869.7 298.4L-889.4 315.3L-906.3 295.6zM-838.6 278.7L-821.7 298.4L-841.4 315.3L-858.3 295.6zM-790.6 278.7L-773.7 298.4L-793.4 315.3L-810.3 295.6zM-742.6 278.7L-725.7 298.4L-745.4 315.3L-762.3 295.6zM-694.6 278.7L-677.7 298.4L-697.4 315.3L-714.3 295.6zM-646.6 278.7L-629.7 298.4L-649.4 315.3L-666.3 295.6zM-598.6 278.7L-581.7 298.4L-601.4 315.3L-618.3 295.6zM-550.6 278.7L-533.7 298.4L-553.4 315.3L-570.3 295.6zM-502.6 278.7L-485.7 298.4L-505.4 315.3L-522.3 295.6zM-454.6 278.7L-437.7 298.4L-457.4 315.3L-474.3 295.6zM-406.6 278.7L-389.7 298.4L-409.4 315.3L-426.3 295.6zM-358.6 278.7L-341.7 298.4L-361.4 315.3L-378.3 295.6zM-310.6 278.7L-293.7 298.4L-313.4 315.3L-330.3 295.6zM-262.6 278.7L-245.7 298.4L-265.4 315.3L-282.3 295.6zM-214.6 278.7L-197.7 298.4L-217.4 315.3L-234.3 295.6zM-166.6 278.7L-149.7 298.4L-169.4 315.3L-186.3 295.6zM-118.6 278.7L-101.7 298.4L-121.4 315.3L-138.3 295.6zM-70.6 278.7L-53.7 298.4L-73.4 315.3L-90.3 295.6zM-22.6 278.7L-5.7 298.4L-25.4 315.3L-42.3 295.6zM25.4 278.7L42.3 298.4L22.6 315.3L5.7 295.6zM73.4 278.7L90.3 298.4L70.6 315.3L53.7 295.6zM121.4 278.7L138.3 298.4L118.6 315.3L101.7 295.6zM169.4 278.7L186.3 298.4L166.6 315.3L149.7 295.6zM217.4 278.7L234.3 298.4L214.6 315.3L197.7 295.6zM265.4 278.7L282.3 298.4L262.6 315.3L245.7 295.6zM313.4 278.7L330.3 298.4L310.6 315.3L293.7 295.6zM361.4 278.7L378.3 298.4L358.6 315.3L341.7 295.6zM409.4 278.7L426.3 298.4L406.6 315.3L389.7 295.6zM457.4 278.7L474.3 298.4L454.6 315.3L437.7 295.6zM505.4 278.7L522.3 298.4L502.6 315.3L485.7 295.6zM553.4 278.7L570.3 298.4L550.6 315.3L533.7 295.6zM601.4 278.7L618.3 298.4L598.6 315.3L581.7 295.6zM649.4 278.7L666.3 298.4L646.6 315.3L629.7 295.6zM697.4 278.7L714.3 298.4L694.6 315.3L677.7 295.6zM745.4 278.7L762.3 298.4L742.6 315.3L725.7 295.6zM793.4 278.7L810.3 298.4L790.6 315.3L773.7 295.6zM841.4 278.7L858.3 298.4L838.6 315.3L821.7 295.6zM889.4 278.7L906.3 298.4L886.6 315.3L869.7 295.6zM937.4 278.7L954.3 298.4L934.6 315.3L917.7 295.6zM985.4 278.7L1002.3 298.4L982.6 315.3L965.7 295.6zM-958.6 305.7L-941.7 325.4L-961.4 342.3L-978.3 322.6zM-910.6 305.7L-893.7 325.4L-913.4 342.3L-930.3 322.6zM-862.6 305.7L-845.7 325.4L-865.4 342.3L-882.3 322.6zM-814.6 305.7L-797.7 325.4L-817.4 342.3L-834.3 322.6zM-766.6 305.7L-749.7 325.4L-769.4 342.3L-786.3 322.6zM-718.6 305.7L-701.7 325.4L-721.4 342.3L-738.3 322.6zM-670.6 305.7L-653.7 325.4L-673.4 342.3L-690.3 322.6zM-622.6 305.7L-605.7 325.4L-625.4 342.3L-642.3 322.6zM-574.6 305.7L-557.7 325.4L-577.4 342.3L-594.3 322.6zM-526.6 305.7L-509.7 325.4L-529.4 342.3L-546.3 322.6zM-478.6 305.7L-461.7 325.4L-481.4 342.3L-498.3 322.6zM-430.6 305.7L-413.7 325.4L-433.4 342.3L-450.3 322.6zM-382.6 305.7L-365.7 325.4L-385.4 342.3L-402.3 322.6zM-334.6 305.7L-317.7 325.4L-337.4 342.3L-354.3 322.6zM-286.6 305.7L-269.7 325.4L-289.4 342.3L-306.3 322.6zM-238.6 305.7L-221.7 325.4L-241.4 342.3L-258.3 322.6zM-190.6 305.7L-173.7 325.4L-193.4 342.3L-210.3 322.6zM-142.6 305.7L-125.7 325.4L-145.4 342.3L-162.3 322.6zM-94.6 305.7L-77.7 325.4L-97.4 342.3L-114.3 322.6zM-46.6 305.7L-29.7 325.4L-49.4 342.3L-66.3 322.6zM1.4 305.7L18.3 325.4L-1.4 342.3L-18.3 322.6zM49.4 305.7L66.3 325.4L46.6 342.3L29.7 322.6zM97.4 305.7L114.3 325.4L94.6 342.3L77.7 322.6zM145.4 305.7L162.3 325.4L142.6 342.3L125.7 322.6zM193.4 305.7L210.3 325.4L190.6 342.3L173.7 322.6zM241.4 305.7L258.3 325.4L238.6 342.3L221.7 322.6zM289.4 305.7L306.3 325.4L286.6 342.3L269.7 322.6zM337.4 305.7L354.3 325.4L334.6 342.3L317.7 322.6zM385.4 305.7L402.3 325.4L382.6 342.3L365.7 322.6zM433.4 305.7L450.3 325.4L430.6 342.3L413.7 322.6zM481.4 305.7L498.3 325.4L478.6 342.3L461.7 322.6zM529.4 305.7L546.3 325.4L526.6 342.3L509.7 322.6zM577.4 305.7L594.3 325.4L574.6 342.3L557.7 322.6zM625.4 305.7L642.3 325.4L622.6 342.3L605.7 322.6zM673.4 305.7L690.3 325.4L670.6 342.3L653.7 322.6zM721.4 305.7L738.3 325.4L718.6 342.3L701.7 322.6zM769.4 305.7L786.3 325.4L766.6 342.3L749.7 322.6zM817.4 305.7L834.3 325.4L814.6 342.3L797.7 322.6zM865.4 305.7L882.3 325.4L862.6 342.3L845.7 322.6zM913.4 305.7L930.3 325.4L910.6 342.3L893.7 322.6zM961.4 305.7L978.3 325.4L958.6 342.3L941.7 322.6zM-934.6 332.7L-917.7 352.4L-937.4 369.3L-954.3 349.6zM-886.6 332.7L-869.7 352.4L-889.4 369.3L-906.3 349.6zM-838.6 332.7L-821.7 352.4L-841.4 369.3L-858.3 349.6zM-790.6 332.7L-773.7 352.4L-793.4 369.3L-810.3 349.6zM-742.6 332.7L-725.7 352.4L-745.4 369.3L-762.3 349.6zM-694.6 332.7L-677.7 352.4L-697.4 369.3L-714.3 349.6zM-646.6 332.7L-629.7 352.4L-649.4 369.3L-666.3 349.6zM-598.6 332.7L-581.7 352.4L-601.4 369.3L-618.3 349.6zM-550.6 332.7L-533.7 352.4L-553.4 369.3L-570.3 349.6zM-502.6 332.7L-485.7 352.4L-505.4 369.3L-522.3 349.6zM-454.6 332.7L-437.7 352.4L-457.4 369.3L-474.3 349.6zM-406.6 332.7L-389.7 352.4L-409.4 369.3L-426.3 349.6zM-358.6 332.7L-341.7 352.4L-361.4 369.3L-378.3 349.6zM-310.6 332.7L-293.7 352.4L-313.4 369.3L-330.3 349.6zM-262.6 332.7L-245.7 352.4L-265.4 369.3L-282.3 349.6zM-214.6 332.7L-197.7 352.4L-217.4 369.3L-234.3 349.6zM-166.6 332.7L-149.7 352.4L-169.4 369.3L-186.3 349.6zM-118.6 332.7L-101.7 352.4L-121.4 369.3L-138.3 349.6zM-70.6 332.7L-53.7 352.4L-73.4 369.3L-90.3 349.6zM-22.6 332.7L-5.7 352.4L-25.4 369.3L-42.3 349.6zM25.4 332.7L42.3 352.4L22.6 369.3L5.7 349.6zM73.4 332.7L90.3 352.4L70.6 369.3L53.7 349.6zM121.4 332.7L138.3 352.4L118.6 369.3L101.7 349.6zM169.4 332.7L186.3 352.4L166.6 369.3L149.7 349.6zM217.4 332.7L234.3 352.4L214.6 369.3L197.7 349.6zM265.4 332.7L282.3 352.4L262.6 369.3L245.7 349.6zM313.4 332.7L330.3 352.4L310.6 369.3L293.7 349.6zM361.4 332.7L378.3 352.4L358.6 369.3L341.7 349.6zM409.4 332.7L426.3 352.4L406.6 369.3L389.7 349.6zM457.4 332.7L474.3 352.4L454.6 369.3L437.7 349.6zM505.4 332.7L522.3 352.4L502.6 369.3L485.7 349.6zM553.4 332.7L570.3 352.4L550.6 369.3L533.7 349.6zM601.4 332.7L618.3 352.4L598.6 369.3L581.7 349.6zM649.4 332.7L666.3 352.4L646.6 369.3L629.7 349.6zM697.4 332.7L714.3 352.4L694.6 369.3L677.7 349.6zM745.4 332.7L762.3 352.4L742.6 369.3L725.7 349.6zM793.4 332.7L810.3 352.4L790.6 369.3L773.7 349.6zM841.4 332.7L858.3 352.4L838.6 369.3L821.7 349.6zM889.4 332.7L906.3 352.4L886.6 369.3L869.7 349.6zM937.4 332.7L954.3 352.4L934.6 369.3L917.7 349.6zM985.4 332.7L1002.3 352.4L982.6 369.3L965.7 349.6zM-958.6 359.7L-941.7 379.4L-961.4 396.3L-978.3 376.6zM-910.6 359.7L-893.7 379.4L-913.4 396.3L-930.3 376.6zM-862.6 359.7L-845.7 379.4L-865.4 396.3L-882.3 376.6zM-814.6 359.7L-797.7 379.4L-817.4 396.3L-834.3 376.6zM-766.6 359.7L-749.7 379.4L-769.4 396.3L-786.3 376.6zM-718.6 359.7L-701.7 379.4L-721.4 396.3L-738.3 376.6zM-670.6 359.7L-653.7 379.4L-673.4 396.3L-690.3 376.6zM-622.6 359.7L-605.7 379.4L-625.4 396.3L-642.3 376.6zM-574.6 359.7L-557.7 379.4L-577.4 396.3L-594.3 376.6zM-526.6 359.7L-509.7 379.4L-529.4 396.3L-546.3 376.6zM-478.6 359.7L-461.7 379.4L-481.4 396.3L-498.3 376.6zM-430.6 359.7L-413.7 379.4L-433.4 396.3L-450.3 376.6zM-382.6 359.7L-365.7 379.4L-385.4 396.3L-402.3 376.6zM-334.6 359.7L-317.7 379.4L-337.4 396.3L-354.3 376.6zM-286.6 359.7L-269.7 379.4L-289.4 396.3L-306.3 376.6zM-238.6 359.7L-221.7 379.4L-241.4 396.3L-258.3 376.6zM-190.6 359.7L-173.7 379.4L-193.4 396.3L-210.3 376.6zM-142.6 359.7L-125.7 379.4L-145.4 396.3L-162.3 376.6zM-94.6 359.7L-77.7 379.4L-97.4 396.3L-114.3 376.6zM-46.6 359.7L-29.7 379.4L-49.4 396.3L-66.3 376.6zM1.4 359.7L18.3 379.4L-1.4 396.3L-18.3 376.6zM49.4 359.7L66.3 379.4L46.6 396.3L29.7 376.6zM97.4 359.7L114.3 379.4L94.6 396.3L77.7 376.6zM145.4 359.7L162.3 379.4L142.6 396.3L125.7 376.6zM193.4 359.7L210.3 379.4L190.6 396.3L173.7 376.6zM241.4 359.7L258.3 379.4L238.6 396.3L221.7 376.6zM289.4 359.7L306.3 379.4L286.6 396.3L269.7 376.6zM337.4 359.7L354.3 379.4L334.6 396.3L317.7 376.6zM385.4 359.7L402.3 379.4L382.6 396.3L365.7 376.6zM433.4 359.7L450.3 379.4L430.6 396.3L413.7 376.6zM481.4 359.7L498.3 379.4L478.6 396.3L461.7 376.6zM529.4 359.7L546.3 379.4L526.6 396.3L509.7 376.6zM577.4 359.7L594.3 379.4L574.6 396.3L557.7 376.6zM625.4 359.7L642.3 379.4L622.6 396.3L605.7 376.6zM673.4 359.7L690.3 379.4L670.6 396.3L653.7 376.6zM721.4 359.7L738.3 379.4L718.6 396.3L701.7 376.6zM769.4 359.7L786.3 379.4L766.6 396.3L749.7 376.6zM817.4 359.7L834.3 379.4L814.6 396.3L797.7 376.6zM865.4 359.7L882.3 379.4L862.6 396.3L845.7 376.6zM913.4 359.7L930.3 379.4L910.6 396.3L893.7 376.6zM961.4 359.7L978.3 379.4L958.6 396.3L941.7 376.6zM-934.6 386.7L-917.7 406.4L-937.4 423.3L-954.3 403.6zM-886.6 386.7L-869.7 406.4L-889.4 423.3L-906.3 403.6zM-838.6 386.7L-821.7 406.4L-841.4 423.3L-858.3 403.6zM-790.6 386.7L-773.7 406.4L-793.4 423.3L-810.3 403.6zM-742.6 386.7L-725.7 406.4L-745.4 423.3L-762.3 403.6zM-694.6 386.7L-677.7 406.4L-697.4 423.3L-714.3 403.6zM-646.6 386.7L-629.7 406.4L-649.4 423.3L-666.3 403.6zM-598.6 386.7L-581.7 406.4L-601.4 423.3L-618.3 403.6zM-550.6 386.7L-533.7 406.4L-553.4 423.3L-570.3 403.6zM-502.6 386.7L-485.7 406.4L-505.4 423.3L-522.3 403.6zM-454.6 386.7L-437.7 406.4L-457.4 423.3L-474.3 403.6zM-406.6 386.7L-389.7 406.4L-409.4 423.3L-426.3 403.6zM-358.6 386.7L-341.7 406.4L-361.4 423.3L-378.3 403.6zM-310.6 386.7L-293.7 406.4L-313.4 423.3L-330.3 403.6zM-262.6 386.7L-245.7 406.4L-265.4 423.3L-282.3 403.6zM-214.6 386.7L-197.7 406.4L-217.4 423.3L-234.3 403.6zM-166.6 386.7L-149.7 406.4L-169.4 423.3L-186.3 403.6zM-118.6 386.7L-101.7 406.4L-121.4 423.3L-138.3 403.6zM-70.6 386.7L-53.7 406.4L-73.4 423.3L-90.3 403.6zM-22.6 386.7L-5.7 406.4L-25.4 423.3L-42.3 403.6zM25.4 386.7L42.3 406.4L22.6 423.3L5.7 403.6zM73.4 386.7L90.3 406.4L70.6 423.3L53.7 403.6zM121.4 386.7L138.3 406.4L118.6 423.3L101.7 403.6zM169.4 386.7L186.3 406.4L166.6 423.3L149.7 403.6zM217.4 386.7L234.3 406.4L214.6 423.3L197.7 403.6zM265.4 386.7L282.3 406.4L262.6 423.3L245.7 403.6zM313.4 386.7L330.3 406.4L310.6 423.3L293.7 403.6zM361.4 386.7L378.3 406.4L358.6 423.3L341.7 403.6zM409.4 386.7L426.3 406.4L406.6 423.3L389.7 403.6zM457.4 386.7L474.3 406.4L454.6 423.3L437.7 403.6zM505.4 386.7L522.3 406.4L502.6 423.3L485.7 403.6zM553.4 386.7L570.3 406.4L550.6 423.3L533.7 403.6zM601.4 386.7L618.3 406.4L598.6 423.3L581.7 403.6zM649.4 386.7L666.3 406.4L646.6 423.3L629.7 403.6zM697.4 386.7L714.3 406.4L694.6 423.3L677.7 403.6zM745.4 386.7L762.3 406.4L742.6 423.3L725.7 403.6zM793.4 386.7L810.3 406.4L790.6 423.3L773.7 403.6zM841.4 386.7L858.3 406.4L838.6 423.3L821.7 403.6zM889.4 386.7L906.3 406.4L886.6 423.3L869.7 403.6zM937.4 386.7L954.3 406.4L934.6 423.3L917.7 403.6zM985.4 386.7L1002.3 406.4L982.6 423.3L965.7 403.6zM-958.6 413.7L-941.7 433.4L-961.4 450.3L-978.3 430.6zM-910.6 413.7L-893.7 433.4L-913.4 450.3L-930.3 430.6zM-862.6 413.7L-845.7 433.4L-865.4 450.3L-882.3 430.6zM-814.6 413.7L-797.7 433.4L-817.4 450.3L-834.3 430.6zM-766.6 413.7L-749.7 433.4L-769.4 450.3L-786.3 430.6zM-718.6 413.7L-701.7 433.4L-721.4 450.3L-738.3 430.6zM-670.6 413.7L-653.7 433.4L-673.4 450.3L-690.3 430.6zM-622.6 413.7L-605.7 433.4L-625.4 450.3L-642.3 430.6zM-574.6 413.7L-557.7 433.4L-577.4 450.3L-594.3 430.6zM-526.6 413.7L-509.7 433.4L-529.4 450.3L-546.3 430.6zM-478.6 413.7L-461.7 433.4L-481.4 450.3L-498.3 430.6zM-430.6 413.7L-413.7 433.4L-433.4 450.3L-450.3 430.6zM-382.6 413.7L-365.7 433.4L-385.4 450.3L-402.3 430.6zM-334.6 413.7L-317.7 433.4L-337.4 450.3L-354.3 430.6zM-286.6 413.7L-269.7 433.4L-289.4 450.3L-306.3 430.6zM-238.6 413.7L-221.7 433.4L-241.4 450.3L-258.3 430.6zM-190.6 413.7L-173.7 433.4L-193.4 450.3L-210.3 430.6zM-142.6 413.7L-125.7 433.4L-145.4 450.3L-162.3 430.6zM-94.6 413.7L-77.7 433.4L-97.4 450.3L-114.3 430.6zM-46.6 413.7L-29.7 433.4L-49.4 450.3L-66.3 430.6zM1.4 413.7L18.3 433.4L-1.4 450.3L-18.3 430.6zM49.4 413.7L66.3 433.4L46.6 450.3L29.7 430.6zM97.4 413.7L114.3 433.4L94.6 450.3L77.7 430.6zM145.4 413.7L162.3 433.4L142.6 450.3L125.7 430.6zM193.4 413.7L210.3 433.4L190.6 450.3L173.7 430.6zM241.4 413.7L258.3 433.4L238.6 450.3L221.7 430.6zM289.4 413.7L306.3 433.4L286.6 450.3L269.7 430.6zM337.4 413.7L354.3 433.4L334.6 450.3L317.7 430.6zM385.4 413.7L402.3 433.4L382.6 450.3L365.7 430.6zM433.4 413.7L450.3 433.4L430.6 450.3L413.7 430.6zM481.4 413.7L498.3 433.4L478.6 450.3L461.7 430.6zM529.4 413.7L546.3 433.4L526.6 450.3L509.7 430.6zM577.4 413.7L594.3 433.4L574.6 450.3L557.7 430.6zM625.4 413.7L642.3 433.4L622.6 450.3L605.7 430.6zM673.4 413.7L690.3 433.4L670.6 450.3L653.7 430.6zM721.4 413.7L738.3 433.4L718.6 450.3L701.7 430.6zM769.4 413.7L786.3 433.4L766.6 450.3L749.7 430.6zM817.4 413.7L834.3 433.4L814.6 450.3L797.7 430.6zM865.4 413.7L882.3 433.4L862.6 450.3L845.7 430.6zM913.4 413.7L930.3 433.4L910.6 450.3L893.7 430.6zM961.4 413.7L978.3 433.4L958.6 450.3L941.7 430.6zM-934.6 440.7L-917.7 460.4L-937.4 477.3L-954.3 457.6zM-886.6 440.7L-869.7 460.4L-889.4 477.3L-906.3 457.6zM-838.6 440.7L-821.7 460.4L-841.4 477.3L-858.3 457.6zM-790.6 440.7L-773.7 460.4L-793.4 477.3L-810.3 457.6zM-742.6 440.7L-725.7 460.4L-745.4 477.3L-762.3 457.6zM-694.6 440.7L-677.7 460.4L-697.4 477.3L-714.3 457.6zM-646.6 440.7L-629.7 460.4L-649.4 477.3L-666.3 457.6zM-598.6 440.7L-581.7 460.4L-601.4 477.3L-618.3 457.6zM-550.6 440.7L-533.7 460.4L-553.4 477.3L-570.3 457.6zM-502.6 440.7L-485.7 460.4L-505.4 477.3L-522.3 457.6zM-454.6 440.7L-437.7 460.4L-457.4 477.3L-474.3 457.6zM-406.6 440.7L-389.7 460.4L-409.4 477.3L-426.3 457.6zM-358.6 440.7L-341.7 460.4L-361.4 477.3L-378.3 457.6zM-310.6 440.7L-293.7 460.4L-313.4 477.3L-330.3 457.6zM-262.6 440.7L-245.7 460.4L-265.4 477.3L-282.3 457.6zM-214.6 440.7L-197.7 460.4L-217.4 477.3L-234.3 457.6zM-166.6 440.7L-149.7 460.4L-169.4 477.3L-186.3 457.6zM-118.6 440.7L-101.7 460.4L-121.4 477.3L-138.3 457.6zM-70.6 440.7L-53.7 460.4L-73.4 477.3L-90.3 457.6zM-22.6 440.7L-5.7 460.4L-25.4 477.3L-42.3 457.6zM25.4 440.7L42.3 460.4L22.6 477.3L5.7 457.6zM73.4 440.7L90.3 460.4L70.6 477.3L53.7 457.6zM121.4 440.7L138.3 460.4L118.6 477.3L101.7 457.6zM169.4 440.7L186.3 460.4L166.6 477.3L149.7 457.6zM217.4 440.7L234.3 460.4L214.6 477.3L197.7 457.6zM265.4 440.7L282.3 460.4L262.6 477.3L245.7 457.6zM313.4 440.7L330.3 460.4L310.6 477.3L293.7 457.6zM361.4 440.7L378.3 460.4L358.6 477.3L341.7 457.6zM409.4 440.7L426.3 460.4L406.6 477.3L389.7 457.6zM457.4 440.7L474.3 460.4L454.6 477.3L437.7 457.6zM505.4 440.7L522.3 460.4L502.6 477.3L485.7 457.6zM553.4 440.7L570.3 460.4L550.6 477.3L533.7 457.6zM601.4 440.7L618.3 460.4L598.6 477.3L581.7 457.6zM649.4 440.7L666.3 460.4L646.6 477.3L629.7 457.6zM697.4 440.7L714.3 460.4L694.6 477.3L677.7 457.6zM745.4 440.7L762.3 460.4L742.6 477.3L725.7 457.6zM793.4 440.7L810.3 460.4L790.6 477.3L773.7 457.6zM841.4 440.7L858.3 460.4L838.6 477.3L821.7 457.6zM889.4 440.7L906.3 460.4L886.6 477.3L869.7 457.6zM937.4 440.7L954.3 460.4L934.6 477.3L917.7 457.6zM985.4 440.7L1002.3 460.4L982.6 477.3L965.7 457.6zM-958.6 467.7L-941.7 487.4L-961.4 504.3L-978.3 484.6zM-910.6 467.7L-893.7 487.4L-913.4 504.3L-930.3 484.6zM-862.6 467.7L-845.7 487.4L-865.4 504.3L-882.3 484.6zM-814.6 467.7L-797.7 487.4L-817.4 504.3L-834.3 484.6zM-766.6 467.7L-749.7 487.4L-769.4 504.3L-786.3 484.6zM-718.6 467.7L-701.7 487.4L-721.4 504.3L-738.3 484.6zM-670.6 467.7L-653.7 487.4L-673.4 504.3L-690.3 484.6zM-622.6 467.7L-605.7 487.4L-625.4 504.3L-642.3 484.6zM-574.6 467.7L-557.7 487.4L-577.4 504.3L-594.3 484.6zM-526.6 467.7L-509.7 487.4L-529.4 504.3L-546.3 484.6zM-478.6 467.7L-461.7 487.4L-481.4 504.3L-498.3 484.6zM-430.6 467.7L-413.7 487.4L-433.4 504.3L-450.3 484.6zM-382.6 467.7L-365.7 487.4L-385.4 504.3L-402.3 484.6zM-334.6 467.7L-317.7 487.4L-337.4 504.3L-354.3 484.6zM-286.6 467.7L-269.7 487.4L-289.4 504.3L-306.3 484.6zM-238.6 467.7L-221.7 487.4L-241.4 504.3L-258.3 484.6zM-190.6 467.7L-173.7 487.4L-193.4 504.3L-210.3 484.6zM-142.6 467.7L-125.7 487.4L-145.4 504.3L-162.3 484.6zM-94.6 467.7L-77.7 487.4L-97.4 504.3L-114.3 484.6zM-46.6 467.7L-29.7 487.4L-49.4 504.3L-66.3 484.6zM1.4 467.7L18.3 487.4L-1.4 504.3L-18.3 484.6zM49.4 467.7L66.3 487.4L46.6 504.3L29.7 484.6zM97.4 467.7L114.3 487.4L94.6 504.3L77.7 484.6zM145.4 467.7L162.3 487.4L142.6 504.3L125.7 484.6zM193.4 467.7L210.3 487.4L190.6 504.3L173.7 484.6zM241.4 467.7L258.3 487.4L238.6 504.3L221.7 484.6zM289.4 467.7L306.3 487.4L286.6 504.3L269.7 484.6zM337.4 467.7L354.3 487.4L334.6 504.3L317.7 484.6zM385.4 467.7L402.3 487.4L382.6 504.3L365.7 484.6zM433.4 467.7L450.3 487.4L430.6 504.3L413.7 484.6zM481.4 467.7L498.3 487.4L478.6 504.3L461.7 484.6zM529.4 467.7L546.3 487.4L526.6 504.3L509.7 484.6zM577.4 467.7L594.3 487.4L574.6 504.3L557.7 484.6zM625.4 467.7L642.3 487.4L622.6 504.3L605.7 484.6zM673.4 467.7L690.3 487.4L670.6 504.3L653.7 484.6zM721.4 467.7L738.3 487.4L718.6 504.3L701.7 484.6zM769.4 467.7L786.3 487.4L766.6 504.3L749.7 484.6zM817.4 467.7L834.3 487.4L814.6 504.3L797.7 484.6zM865.4 467.7L882.3 487.4L862.6 504.3L845.7 484.6zM913.4 467.7L930.3 487.4L910.6 504.3L893.7 484.6zM961.4 467.7L978.3 487.4L958.6 504.3L941.7 484.6zM-934.6 494.7L-917.7 514.4L-937.4 531.3L-954.3 511.6zM-886.6 494.7L-869.7 514.4L-889.4 531.3L-906.3 511.6zM-838.6 494.7L-821.7 514.4L-841.4 531.3L-858.3 511.6zM-790.6 494.7L-773.7 514.4L-793.4 531.3L-810.3 511.6zM-742.6 494.7L-725.7 514.4L-745.4 531.3L-762.3 511.6zM-694.6 494.7L-677.7 514.4L-697.4 531.3L-714.3 511.6zM-646.6 494.7L-629.7 514.4L-649.4 531.3L-666.3 511.6zM-598.6 494.7L-581.7 514.4L-601.4 531.3L-618.3 511.6zM-550.6 494.7L-533.7 514.4L-553.4 531.3L-570.3 511.6zM-502.6 494.7L-485.7 514.4L-505.4 531.3L-522.3 511.6zM-454.6 494.7L-437.7 514.4L-457.4 531.3L-474.3 511.6zM-406.6 494.7L-389.7 514.4L-409.4 531.3L-426.3 511.6zM-358.6 494.7L-341.7 514.4L-361.4 531.3L-378.3 511.6zM-310.6 494.7L-293.7 514.4L-313.4 531.3L-330.3 511.6zM-262.6 494.7L-245.7 514.4L-265.4 531.3L-282.3 511.6zM-214.6 494.7L-197.7 514.4L-217.4 531.3L-234.3 511.6zM-166.6 494.7L-149.7 514.4L-169.4 531.3L-186.3 511.6zM-118.6 494.7L-101.7 514.4L-121.4 531.3L-138.3 511.6zM-70.6 494.7L-53.7 514.4L-73.4 531.3L-90.3 511.6zM-22.6 494.7L-5.7 514.4L-25.4 531.3L-42.3 511.6zM25.4 494.7L42.3 514.4L22.6 531.3L5.7 511.6zM73.4 494.7L90.3 514.4L70.6 531.3L53.7 511.6zM121.4 494.7L138.3 514.4L118.6 531.3L101.7 511.6zM169.4 494.7L186.3 514.4L166.6 531.3L149.7 511.6zM217.4 494.7L234.3 514.4L214.6 531.3L197.7 511.6zM265.4 494.7L282.3 514.4L262.6 531.3L245.7 511.6zM313.4 494.7L330.3 514.4L310.6 531.3L293.7 511.6zM361.4 494.7L378.3 514.4L358.6 531.3L341.7 511.6zM409.4 494.7L426.3 514.4L406.6 531.3L389.7 511.6zM457.4 494.7L474.3 514.4L454.6 531.3L437.7 511.6zM505.4 494.7L522.3 514.4L502.6 531.3L485.7 511.6zM553.4 494.7L570.3 514.4L550.6 531.3L533.7 511.6zM601.4 494.7L618.3 514.4L598.6 531.3L581.7 511.6zM649.4 494.7L666.3 514.4L646.6 531.3L629.7 511.6zM697.4 494.7L714.3 514.4L694.6 531.3L677.7 511.6zM745.4 494.7L762.3 514.4L742.6 531.3L725.7 511.6zM793.4 494.7L810.3 514.4L790.6 531.3L773.7 511.6zM841.4 494.7L858.3 514.4L838.6 531.3L821.7 511.6zM889.4 494.7L906.3 514.4L886.6 531.3L869.7 511.6zM937.4 494.7L954.3 514.4L934.6 531.3L917.7 511.6zM985.4 494.7L1002.3 514.4L982.6 531.3L965.7 511.6zM-958.6 521.7L-941.7 541.4L-961.4 558.3L-978.3 538.6zM-910.6 521.7L-893.7 541.4L-913.4 558.3L-930.3 538.6zM-862.6 521.7L-845.7 541.4L-865.4 558.3L-882.3 538.6zM-814.6 521.7L-797.7 541.4L-817.4 558.3L-834.3 538.6zM-766.6 521.7L-749.7 541.4L-769.4 558.3L-786.3 538.6zM-718.6 521.7L-701.7 541.4L-721.4 558.3L-738.3 538.6zM-670.6 521.7L-653.7 541.4L-673.4 558.3L-690.3 538.6zM-622.6 521.7L-605.7 541.4L-625.4 558.3L-642.3 538.6zM-574.6 521.7L-557.7 541.4L-577.4 558.3L-594.3 538.6zM-526.6 521.7L-509.7 541.4L-529.4 558.3L-546.3 538.6zM-478.6 521.7L-461.7 541.4L-481.4 558.3L-498.3 538.6zM-430.6 521.7L-413.7 541.4L-433.4 558.3L-450.3 538.6zM-382.6 521.7L-365.7 541.4L-385.4 558.3L-402.3 538.6zM-334.6 521.7L-317.7 541.4L-337.4 558.3L-354.3 538.6zM-286.6 521.7L-269.7 541.4L-289.4 558.3L-306.3 538.6zM-238.6 521.7L-221.7 541.4L-241.4 558.3L-258.3 538.6zM-190.6 521.7L-173.7 541.4L-193.4 558.3L-210.3 538.6zM-142.6 521.7L-125.7 541.4L-145.4 558.3L-162.3 538.6zM-94.6 521.7L-77.7 541.4L-97.4 558.3L-114.3 538.6zM-46.6 521.7L-29.7 541.4L-49.4 558.3L-66.3 538.6zM1.4 521.7L18.3 541.4L-1.4 558.3L-18.3 538.6zM49.4 521.7L66.3 541.4L46.6 558.3L29.7 538.6zM97.4 521.7L114.3 541.4L94.6 558.3L77.7 538.6zM145.4 521.7L162.3 541.4L142.6 558.3L125.7 538.6zM193.4 521.7L210.3 541.4L190.6 558.3L173.7 538.6zM241.4 521.7L258.3 541.4L238.6 558.3L221.7 538.6zM289.4 521.7L306.3 541.4L286.6 558.3L269.7 538.6zM337.4 521.7L354.3 541.4L334.6 558.3L317.7 538.6zM385.4 521.7L402.3 541.4L382.6 558.3L365.7 538.6zM433.4 521.7L450.3 541.4L430.6 558.3L413.7 538.6zM481.4 521.7L498.3 541.4L478.6 558.3L461.7 538.6zM529.4 521.7L546.3 541.4L526.6 558.3L509.7 538.6zM577.4 521.7L594.3 541.4L574.6 558.3L557.7 538.6zM625.4 521.7L642.3 541.4L622.6 558.3L605.7 538.6zM673.4 521.7L690.3 541.4L670.6 558.3L653.7 538.6zM721.4 521.7L738.3 541.4L718.6 558.3L701.7 538.6zM769.4 521.7L786.3 541.4L766.6 558.3L749.7 538.6zM817.4 521.7L834.3 541.4L814.6 558.3L797.7 538.6zM865.4 521.7L882.3 541.4L862.6 558.3L845.7 538.6zM913.4 521.7L930.3 541.4L910.6 558.3L893.7 538.6zM961.4 521.7L978.3 541.4L958.6 558.3L941.7 538.6z"/>
<path id="ht" d="M-960 -540.3L-959.7 -540L-960 -539.7L-960.3 -540zM-912 -540.2L-911.8 -540L-912 -539.8L-912.2 -540zM-936 -513.4L-935.6 -513L-936 -512.6L-936.4 -513zM-888 -513.4L-887.6 -513L-888 -512.6L-888.4 -513zM-840 -513.3L-839.7 -513L-840 -512.7L-840.3 -513zM-792 -513.3L-791.7 -513L-792 -512.7L-792.3 -513zM-744 -513.2L-743.8 -513L-744 -512.8L-744.2 -513zM-960 -486.6L-959.4 -486L-960 -485.4L-960.6 -486zM-912 -486.6L-911.4 -486L-912 -485.4L-912.6 -486zM-864 -486.5L-863.5 -486L-864 -485.5L-864.5 -486zM-816 -486.5L-815.5 -486L-816 -485.5L-816.5 -486zM-768 -486.4L-767.6 -486L-768 -485.6L-768.4 -486zM-720 -486.3L-719.7 -486L-720 -485.7L-720.3 -486zM-672 -486.3L-671.7 -486L-672 -485.7L-672.3 -486zM-624 -486.3L-623.7 -486L-624 -485.7L-624.3 -486zM-576 -486.2L-575.8 -486L-576 -485.8L-576.2 -486zM-935.9 -459.8L-935.2 -458.9L-936.1 -458.2L-936.8 -459.1zM-887.9 -459.7L-887.3 -458.9L-888.1 -458.3L-888.7 -459.1zM-839.9 -459.7L-839.3 -458.9L-840.1 -458.3L-840.7 -459.1zM-792 -459.6L-791.4 -459L-792 -458.4L-792.6 -459zM-744 -459.5L-743.5 -459L-744 -458.5L-744.5 -459zM-696 -459.5L-695.5 -459L-696 -458.5L-696.5 -459zM-648 -459.4L-647.6 -459L-648 -458.6L-648.4 -459zM-600 -459.4L-599.6 -459L-600 -458.6L-600.4 -459zM-552 -459.3L-551.7 -459L-552 -458.7L-552.3 -459zM-504 -459.3L-503.7 -459L-504 -458.7L-504.3 -459zM-456 -459.2L-455.8 -459L-456 -458.8L-456.2 -459zM-959.9 -433.1L-958.9 -431.9L-960.1 -430.9L-961.1 -432.1zM-911.9 -433L-911 -431.9L-912.1 -431L-913 -432.1zM-863.9 -432.9L-863.1 -431.9L-864.1 -431.1L-864.9 -432.1zM-815.9 -432.8L-815.2 -431.9L-816.1 -431.2L-816.8 -432.1zM-767.9 -432.8L-767.2 -431.9L-768.1 -431.2L-768.8 -432.1zM-719.9 -432.7L-719.3 -431.9L-720.1 -431.3L-720.7 -432.1zM-671.9 -432.6L-671.4 -431.9L-672.1 -431.4L-672.6 -432.1zM-624 -432.6L-623.4 -432L-624 -431.4L-624.6 -432zM-576 -432.5L-575.5 -432L-576 -431.5L-576.5 -432zM-528 -432.5L-527.5 -432L-528 -431.5L-528.5 -432zM-480 -432.4L-479.6 -432L-480 -431.6L-480.4 -432zM-432 -432.4L-431.6 -432L-432 -431.6L-432.4 -432zM-384 -432.3L-383.7 -432L-384 -431.7L-384.3 -432zM-336 -432.3L-335.7 -432L-336 -431.7L-336.3 -432zM-288 -432.2L-287.8 -432L-288 -431.8L-288.2 -432zM-935.9 -406.3L-934.7 -404.9L-936.1 -403.7L-937.3 -405.1zM-887.9 -406.2L-886.8 -404.9L-888.1 -403.8L-889.2 -405.1zM-839.9 -406.1L-838.9 -404.9L-840.1 -403.9L-841.1 -405.1zM-791.9 -406L-791 -404.9L-792.1 -404L-793 -405.1zM-743.9 -406L-743 -404.9L-744.1 -404L-745 -405.1zM-695.9 -405.9L-695.1 -404.9L-696.1 -404.1L-696.9 -405.1zM-647.9 -405.8L-647.2 -404.9L-648.1 -404.2L-648.8 -405.1zM-599.9 -405.7L-599.3 -404.9L-600.1 -404.3L-600.7 -405.1zM-551.9 -405.7L-551.3 -404.9L-552.1 -404.3L-552.7 -405.1zM-504 -405.6L-503.4 -405L-504 -404.4L-504.6 -405zM-456 -405.6L-455.4 -405L-456 -404.4L-456.6 -405zM-408 -405.5L-407.5 -405L-408 -404.5L-408.5 -405zM-360 -405.5L-359.5 -405L-360 -404.5L-360.5 -405zM-312 -405.4L-311.6 -405L-312 -404.6L-312.4 -405zM-264 -405.4L-263.6 -405L-264 -404.6L-264.4 -405zM-216 -405.3L-215.7 -405L-216 -404.7L-216.3 -405zM-168 -405.3L-167.7 -405L-168 -404.7L-168.3 -405zM-120 -405.2L-119.8 -405L-120 -404.8L-120.2 -405zM-959.9 -379.7L-958.3 -377.9L-960.1 -376.3L-961.7 -378.1zM-911.9 -379.6L-910.4 -377.9L-912.1 -376.4L-913.6 -378.1zM-863.9 -379.5L-862.5 -377.9L-864.1 -376.5L-865.5 -378.1zM-815.9 -379.4L-814.6 -377.9L-816.1 -376.6L-817.4 -378.1zM-767.9 -379.3L-766.7 -377.9L-768.1 -376.7L-769.3 -378.1zM-719.9 -379.2L-718.8 -377.9L-720.1 -376.8L-721.2 -378.1zM-671.9 -379.1L-670.9 -377.9L-672.1 -376.9L-673.1 -378.1zM-623.9 -379L-623 -377.9L-624.1 -377L-625 -378.1zM-575.9 -378.9L-575.1 -377.9L-576.1 -377.1L-576.9 -378.1zM-527.9 -378.9L-527.1 -377.9L-528.1 -377.1L-528.9 -378.1zM-479.9 -378.8L-479.2 -377.9L-480.1 -377.2L-480.8 -378.1zM-431.9 -378.7L-431.3 -377.9L-432.1 -377.3L-432.7 -378.1zM-383.9 -378.7L-383.3 -377.9L-384.1 -377.3L-384.7 -378.1zM-336 -378.6L-335.4 -378L-336 -377.4L-336.6 -378zM-288 -378.6L-287.4 -378L-288 -377.4L-288.6 -378zM-240 -378.5L-239.5 -378L-240 -377.5L-240.5 -378zM-192 -378.4L-191.6 -378L-192 -377.6L-192.4 -378zM-144 -378.4L-143.6 -378L-144 -377.6L-144.4 -378zM-96 -378.3L-95.7 -378L-96 -377.7L-96.3 -378zM-48 -378.3L-47.7 -378L-48 -377.7L-48.3 -378zM0 -378.3L0.3 -378L-0 -377.7L-0.3 -378zM-935.8 -353L-934 -350.8L-936.2 -349L-938 -351.2zM-887.9 -352.9L-886.1 -350.9L-888.1 -349.1L-889.9 -351.1zM-839.9 -352.8L-838.2 -350.9L-840.1 -349.2L-841.8 -351.1zM-791.9 -352.7L-790.3 -350.9L-792.1 -349.3L-793.7 -351.1zM-743.9 -352.5L-742.5 -350.9L-744.1 -349.5L-745.5 -351.1zM-695.9 -352.4L-694.6 -350.9L-696.1 -349.6L-697.4 -351.1zM-647.9 -352.3L-646.7 -350.9L-648.1 -349.7L-649.3 -351.1zM-599.9 -352.2L-598.8 -350.9L-600.1 -349.8L-601.2 -351.1zM-551.9 -352.1L-550.9 -350.9L-552.1 -349.9L-553.1 -351.1zM-503.9 -352.1L-502.9 -350.9L-504.1 -349.9L-505.1 -351.1zM-455.9 -352L-455 -350.9L-456.1 -350L-457 -351.1zM-407.9 -351.9L-407.1 -350.9L-408.1 -350.1L-408.9 -351.1zM-359.9 -351.8L-359.2 -350.9L-360.1 -350.2L-360.8 -351.1zM-311.9 -351.8L-311.2 -350.9L-312.1 -350.2L-312.8 -351.1zM-263.9 -351.7L-263.3 -350.9L-264.1 -350.3L-264.7 -351.1zM-215.9 -351.6L-215.4 -350.9L-216.1 -350.4L-216.6 -351.1zM-168 -351.6L-167.4 -351L-168 -350.4L-168.6 -351zM-120 -351.5L-119.5 -351L-120 -350.5L-120.5 -351zM-72 -351.5L-71.5 -351L-72 -350.5L-72.5 -351zM-24 -351.4L-23.6 -351L-24 -350.6L-24.4 -351zM24 -351.4L24.4 -351L24 -350.6L23.6 -351zM72 -351.3L72.3 -351L72 -350.7L71.7 -351zM120 -351.3L120.3 -351L120 -350.7L119.7 -351zM168 -351.2L168.2 -351L168 -350.8L167.8 -351zM-959.8 -326.6L-957.4 -323.8L-960.2 -321.4L-962.6 -324.2zM-911.8 -326.5L-909.5 -323.8L-912.2 -321.5L-914.5 -324.2zM-863.8 -326.3L-861.7 -323.8L-864.2 -321.7L-866.3 -324.2zM-815.8 -326.1L-813.9 -323.8L-816.2 -321.9L-818.1 -324.2zM-767.8 -326L-766 -323.8L-768.2 -322L-770 -324.2zM-719.9 -325.8L-718.2 -323.9L-720.1 -322.2L-721.8 -324.1zM-671.9 -325.7L-670.3 -323.9L-672.1 -322.3L-673.7 -324.1zM-623.9 -325.6L-622.4 -323.9L-624.1 -322.4L-625.6 -324.1zM-575.9 -325.5L-574.5 -323.9L-576.1 -322.5L-577.5 -324.1zM-527.9 -325.4L-526.6 -323.9L-528.1 -322.6L-529.4 -324.1zM-479.9 -325.3L-478.7 -323.9L-480.1 -322.7L-481.3 -324.1zM-431.9 -325.2L-430.8 -323.9L-432.1 -322.8L-433.2 -324.1zM-383.9 -325.1L-382.9 -323.9L-384.1 -322.9L-385.1 -324.1zM-335.9 -325L-335 -323.9L-336.1 -323L-337 -324.1zM-287.9 -325L-287 -323.9L-288.1 -323L-289 -324.1zM-239.9 -324.9L-239.1 -323.9L-240.1 -323.1L-240.9 -324.1zM-191.9 -324.8L-191.2 -323.9L-192.1 -323.2L-192.8 -324.1zM-143.9 -324.7L-143.3 -323.9L-144.1 -323.3L-144.7 -324.1zM-95.9 -324.7L-95.3 -323.9L-96.1 -323.3L-96.7 -324.1zM-48 -324.6L-47.4 -324L-48 -323.4L-48.6 -324zM0 -324.6L0.6 -324L-0 -323.4L-0.6 -324zM48 -324.5L48.5 -324L48 -323.5L47.5 -324zM96 -324.5L96.5 -324L96 -323.5L95.5 -324zM144 -324.4L144.4 -324L144 -323.6L143.6 -324zM192 -324.4L192.4 -324L192 -323.6L191.6 -324zM240 -324.3L240.3 -324L240 -323.7L239.7 -324zM288 -324.3L288.3 -324L288 -323.7L287.7 -324zM336 -324.2L336.2 -324L336 -323.8L335.8 -324zM-935.8 -300L-933 -296.8L-936.2 -294L-939 -297.2zM-887.8 -299.9L-885.1 -296.8L-888.2 -294.1L-890.9 -297.2zM-839.8 -299.7L-837.3 -296.8L-840.2 -294.3L-842.7 -297.2zM-791.8 -299.6L-789.4 -296.8L-792.2 -294.4L-794.6 -297.2zM-743.8 -299.4L-741.6 -296.8L-744.2 -294.6L-746.4 -297.2zM-695.8 -299.2L-693.8 -296.8L-696.2 -294.8L-698.2 -297.2zM-647.8 -299.1L-645.9 -296.8L-648.2 -294.9L-650.1 -297.2zM-599.8 -298.9L-598.1 -296.8L-600.2 -295.1L-601.9 -297.2zM-551.9 -298.8L-550.2 -296.9L-552.1 -295.2L-553.8 -297.1zM-503.9 -298.7L-502.3 -296.9L-504.1 -295.3L-505.7 -297.1zM-455.9 -298.6L-454.4 -296.9L-456.1 -295.4L-457.6 -297.1zM-407.9 -298.5L-406.5 -296.9L-408.1 -295.5L-409.5 -297.1zM-359.9 -298.4L-358.6 -296.9L-360.1 -295.6L-361.4 -297.1zM-311.9 -298.3L-310.7 -296.9L-312.1 -295.7L-313.3 -297.1zM-263.9 -298.2L-262.8 -296.9L-264.1 -295.8L-265.2 -297.1zM-215.9 -298.1L-214.9 -296.9L-216.1 -295.9L-217.1 -297.1zM-167.9 -298L-167 -296.9L-168.1 -296L-169 -297.1zM-119.9 -297.9L-119.1 -296.9L-120.1 -296.1L-120.9 -297.1zM-71.9 -297.9L-71.1 -296.9L-72.1 -296.1L-72.9 -297.1zM-23.9 -297.8L-23.2 -296.9L-24.1 -296.2L-24.8 -297.1zM24.1 -297.7L24.7 -296.9L23.9 -296.3L23.3 -297.1zM72.1 -297.7L72.7 -296.9L71.9 -296.3L71.3 -297.1zM120 -297.6L120.6 -297L120 -296.4L119.4 -297zM168 -297.6L168.6 -297L168 -296.4L167.4 -297zM216 -297.5L216.5 -297L216 -296.5L215.5 -297zM264 -297.4L264.4 -297L264 -296.6L263.6 -297zM312 -297.4L312.4 -297L312 -296.6L311.6 -297zM360 -297.3L360.3 -297L360 -296.7L359.7 -297zM408 -297.3L408.3 -297L408 -296.7L407.7 -297zM456 -297.3L456.3 -297L456 -296.7L455.7 -297zM-959.7 -273.6L-956.4 -269.7L-960.3 -266.4L-963.6 -270.3zM-911.7 -273.4L-908.6 -269.7L-912.3 -266.6L-915.4 -270.3zM-863.7 -273.3L-860.7 -269.7L-864.3 -266.7L-867.3 -270.3zM-815.8 -273.1L-812.9 -269.8L-816.2 -266.9L-819.1 -270.2zM-767.8 -273L-765 -269.8L-768.2 -267L-771 -270.2zM-719.8 -272.8L-717.2 -269.8L-720.2 -267.2L-722.8 -270.2zM-671.8 -272.7L-669.3 -269.8L-672.2 -267.3L-674.7 -270.2zM-623.8 -272.5L-621.5 -269.8L-624.2 -267.5L-626.5 -270.2zM-575.8 -272.4L-573.6 -269.8L-576.2 -267.6L-578.4 -270.2zM-527.8 -272.2L-525.8 -269.8L-528.2 -267.8L-530.2 -270.2zM-479.8 -272L-478 -269.8L-480.2 -268L-482 -270.2zM-431.9 -271.9L-430.1 -269.9L-432.1 -268.1L-433.9 -270.1zM-383.9 -271.8L-382.2 -269.9L-384.1 -268.2L-385.8 -270.1zM-335.9 -271.7L-334.3 -269.9L-336.1 -268.3L-337.7 -270.1zM-287.9 -271.6L-286.4 -269.9L-288.1 -268.4L-289.6 -270.1zM-239.9 -271.4L-238.6 -269.9L-240.1 -268.6L-241.4 -270.1zM-191.9 -271.3L-190.7 -269.9L-192.1 -268.7L-193.3 -270.1zM-143.9 -271.2L-142.8 -269.9L-144.1 -268.8L-145.2 -270.1zM-95.9 -271.1L-94.9 -269.9L-96.1 -268.9L-97.1 -270.1zM-47.9 -271.1L-46.9 -269.9L-48.1 -268.9L-49.1 -270.1zM0.1 -271L1 -269.9L-0.1 -269L-1 -270.1zM48.1 -270.9L48.9 -269.9L47.9 -269.1L47.1 -270.1zM96.1 -270.8L96.8 -269.9L95.9 -269.2L95.2 -270.1zM144.1 -270.8L144.8 -269.9L143.9 -269.2L143.2 -270.1zM192.1 -270.7L192.7 -269.9L191.9 -269.3L191.3 -270.1zM240.1 -270.6L240.6 -269.9L239.9 -269.4L239.4 -270.1zM288 -270.6L288.6 -270L288 -269.4L287.4 -270zM336 -270.5L336.5 -270L336 -269.5L335.5 -270zM384 -270.5L384.5 -270L384 -269.5L383.5 -270zM432 -270.4L432.4 -270L432 -269.6L431.6 -270zM480 -270.4L480.4 -270L480 -269.6L479.6 -270zM528 -270.3L528.3 -270L528 -269.7L527.7 -270zM576 -270.3L576.3 -270L576 -269.7L575.7 -270zM624 -270.2L624.2 -270L624 -269.8L623.8 -270zM-935.7 -247L-932 -242.7L-936.3 -239L-940 -243.3zM-887.7 -246.8L-884.2 -242.7L-888.3 -239.2L-891.8 -243.3zM-839.7 -246.7L-836.3 -242.7L-840.3 -239.3L-843.7 -243.3zM-791.7 -246.5L-788.5 -242.7L-792.3 -239.5L-795.5 -243.3zM-743.7 -246.4L-740.6 -242.7L-744.3 -239.6L-747.4 -243.3zM-695.7 -246.2L-692.8 -242.7L-696.3 -239.8L-699.2 -243.3zM-647.8 -246.1L-644.9 -242.8L-648.2 -239.9L-651.1 -243.2zM-599.8 -245.9L-597.1 -242.8L-600.2 -240.1L-602.9 -243.2zM-551.8 -245.8L-549.2 -242.8L-552.2 -240.2L-554.8 -243.2zM-503.8 -245.6L-501.4 -242.8L-504.2 -240.4L-506.6 -243.2zM-455.8 -245.5L-453.5 -242.8L-456.2 -240.5L-458.5 -243.2zM-407.8 -245.3L-405.7 -242.8L-408.2 -240.7L-410.3 -243.2zM-359.8 -245.1L-357.9 -242.8L-360.2 -240.9L-362.1 -243.2zM-311.8 -245L-310 -242.8L-312.2 -241L-314 -243.2zM-263.9 -244.8L-262.2 -242.9L-264.1 -241.2L-265.8 -243.1zM-215.9 -244.7L-214.3 -242.9L-216.1 -241.3L-217.7 -243.1zM-167.9 -244.6L-166.4 -242.9L-168.1 -241.4L-169.6 -243.1zM-119.9 -244.5L-118.5 -242.9L-120.1 -241.5L-121.5 -243.1zM-71.9 -244.4L-70.6 -242.9L-72.1 -241.6L-73.4 -243.1zM-23.9 -244.3L-22.7 -242.9L-24.1 -241.7L-25.3 -243.1zM24.1 -244.2L25.2 -242.9L23.9 -241.8L22.8 -243.1zM72.1 -244.1L73.1 -242.9L71.9 -241.9L70.9 -243.1zM120.1 -244L121 -242.9L119.9 -242L119 -243.1zM168.1 -244L169 -242.9L167.9 -242L167 -243.1zM216.1 -243.9L216.9 -242.9L215.9 -242.1L215.1 -243.1zM264.1 -243.8L264.8 -242.9L263.9 -242.2L263.2 -243.1zM312.1 -243.7L312.7 -242.9L311.9 -242.3L311.3 -243.1zM360.1 -243.7L360.7 -242.9L359.9 -242.3L359.3 -243.1zM408 -243.6L408.6 -243L408 -242.4L407.4 -243zM456 -243.6L456.6 -243L456 -242.4L455.4 -243zM504 -243.5L504.5 -243L504 -242.5L503.5 -243zM552 -243.5L552.5 -243L552 -242.5L551.5 -243zM600 -243.4L600.4 -243L600 -242.6L599.6 -243zM648 -243.4L648.4 -243L648 -242.6L647.6 -243zM696 -243.3L696.3 -243L696 -242.7L695.7 -243zM744 -243.3L744.3 -243L744 -242.7L743.7 -243zM792 -243.2L792.2 -243L792 -242.8L791.8 -243zM-959.6 -220.5L-955.5 -215.6L-960.4 -211.5L-964.5 -216.4zM-911.7 -220.3L-907.7 -215.7L-912.3 -211.7L-916.3 -216.3zM-863.7 -220.2L-859.8 -215.7L-864.3 -211.8L-868.2 -216.3zM-815.7 -220.1L-811.9 -215.7L-816.3 -211.9L-820.1 -216.3zM-767.7 -219.9L-764.1 -215.7L-768.3 -212.1L-771.9 -216.3zM-719.7 -219.8L-716.2 -215.7L-720.3 -212.2L-723.8 -216.3zM-671.7 -219.6L-668.4 -215.7L-672.3 -212.4L-675.6 -216.3zM-623.7 -219.5L-620.5 -215.7L-624.3 -212.5L-627.5 -216.3zM-575.7 -219.3L-572.7 -215.7L-576.3 -212.7L-579.3 -216.3zM-527.7 -219.2L-524.8 -215.7L-528.3 -212.8L-531.2 -216.3zM-479.8 -219L-477 -215.8L-480.2 -213L-483 -216.2zM-431.8 -218.9L-429.1 -215.8L-432.2 -213.1L-434.9 -216.2zM-383.8 -218.7L-381.3 -215.8L-384.2 -213.3L-386.7 -216.2zM-335.8 -218.6L-333.4 -215.8L-336.2 -213.4L-338.6 -216.2zM-287.8 -218.4L-285.6 -215.8L-288.2 -213.6L-290.4 -216.2zM-239.8 -218.3L-237.7 -215.8L-240.2 -213.7L-242.3 -216.2zM-191.8 -218.1L-189.9 -215.8L-192.2 -213.9L-194.1 -216.2zM-143.8 -217.9L-142.1 -215.8L-144.2 -214.1L-145.9 -216.2zM-95.9 -217.8L-94.2 -215.9L-96.1 -214.2L-97.8 -216.1zM-47.9 -217.7L-46.3 -215.9L-48.1 -214.3L-49.7 -216.1zM0.1 -217.6L1.6 -215.9L-0.1 -214.4L-1.6 -216.1zM48.1 -217.5L49.5 -215.9L47.9 -214.5L46.5 -216.1zM96.1 -217.4L97.4 -215.9L95.9 -214.6L94.6 -216.1zM144.1 -217.3L145.3 -215.9L143.9 -214.7L142.7 -216.1zM192.1 -217.2L193.2 -215.9L191.9 -214.8L190.8 -216.1zM240.1 -217.1L241.1 -215.9L239.9 -214.9L238.9 -216.1zM288.1 -217L289 -215.9L287.9 -215L287 -216.1zM336.1 -216.9L336.9 -215.9L335.9 -215.1L335.1 -216.1zM384.1 -216.9L384.9 -215.9L383.9 -215.1L383.1 -216.1zM432.1 -216.8L432.8 -215.9L431.9 -215.2L431.2 -216.1zM480.1 -216.7L480.7 -215.9L479.9 -215.3L479.3 -216.1zM528.1 -216.7L528.7 -215.9L527.9 -215.3L527.3 -216.1zM576 -216.6L576.6 -216L576 -215.4L575.4 -216zM624 -216.6L624.6 -216L624 -215.4L623.4 -216zM672 -216.5L672.5 -216L672 -215.5L671.5 -216zM720 -216.4L720.4 -216L720 -215.6L719.6 -216zM768 -216.4L768.4 -216L768 -215.6L767.6 -216zM816 -216.3L816.3 -216L816 -215.7L815.7 -216zM864 -216.3L864.3 -216L864 -215.7L863.7 -216zM912 -216.3L912.3 -216L912 -215.7L911.7 -216zM960 -216.2L960.2 -216L960 -215.8L959.8 -216zM-935.6 -193.9L-931.1 -188.6L-936.4 -184.1L-940.9 -189.4zM-887.6 -193.7L-883.3 -188.6L-888.4 -184.3L-892.7 -189.4zM-839.6 -193.6L-835.4 -188.6L-840.4 -184.4L-844.6 -189.4zM-791.7 -193.4L-787.6 -188.7L-792.3 -184.6L-796.4 -189.3zM-743.7 -193.3L-739.7 -188.7L-744.3 -184.7L-748.3 -189.3zM-695.7 -193.2L-691.8 -188.7L-696.3 -184.8L-700.2 -189.3zM-647.7 -193L-644 -188.7L-648.3 -185L-652 -189.3zM-599.7 -192.9L-596.1 -188.7L-600.3 -185.1L-603.9 -189.3zM-551.7 -192.7L-548.3 -188.7L-552.3 -185.3L-555.7 -189.3zM-503.7 -192.6L-500.4 -188.7L-504.3 -185.4L-507.6 -189.3zM-455.7 -192.4L-452.6 -188.7L-456.3 -185.6L-459.4 -189.3zM-407.7 -192.3L-404.7 -188.7L-408.3 -185.7L-411.3 -189.3zM-359.8 -192.1L-356.9 -188.8L-360.2 -185.9L-363.1 -189.2zM-311.8 -192L-309 -188.8L-312.2 -186L-315 -189.2zM-263.8 -191.8L-261.2 -188.8L-264.2 -186.2L-266.8 -189.2zM-215.8 -191.7L-213.3 -188.8L-216.2 -186.3L-218.7 -189.2zM-167.8 -191.5L-165.5 -188.8L-168.2 -186.5L-170.5 -189.2zM-119.8 -191.4L-117.6 -188.8L-120.2 -186.6L-122.4 -189.2zM-71.8 -191.2L-69.8 -188.8L-72.2 -186.8L-74.2 -189.2zM-23.8 -191L-22 -188.8L-24.2 -187L-26 -189.2zM24.1 -190.9L25.9 -188.9L23.9 -187.1L22.1 -189.1zM72.1 -190.8L73.8 -188.9L71.9 -187.2L70.2 -189.1zM120.1 -190.7L121.7 -188.9L119.9 -187.3L118.3 -189.1zM168.1 -190.6L169.6 -188.9L167.9 -187.4L166.4 -189.1zM216.1 -190.5L217.5 -188.9L215.9 -187.5L214.5 -189.1zM264.1 -190.3L265.3 -188.9L263.9 -187.7L262.7 -189.1zM312.1 -190.2L313.2 -188.9L311.9 -187.8L310.8 -189.1zM360.1 -190.1L361.1 -188.9L359.9 -187.9L358.9 -189.1zM408.1 -190.1L409.1 -188.9L407.9 -187.9L406.9 -189.1zM456.1 -190L457 -188.9L455.9 -188L455 -189.1zM504.1 -189.9L504.9 -188.9L503.9 -188.1L503.1 -189.1zM552.1 -189.9L552.9 -188.9L551.9 -188.1L551.1 -189.1zM600.1 -189.8L600.8 -188.9L599.9 -188.2L599.2 -189.1zM648.1 -189.7L648.7 -188.9L647.9 -188.3L647.3 -189.1zM696.1 -189.7L696.7 -188.9L695.9 -188.3L695.3 -189.1zM744 -189.6L744.6 -189L744 -188.4L743.4 -189zM792 -189.5L792.5 -189L792 -188.5L791.5 -189zM840 -189.5L840.5 -189L840 -188.5L839.5 -189zM888 -189.4L888.4 -189L888 -188.6L887.6 -189zM936 -189.4L936.4 -189L936 -188.6L935.6 -189zM984 -189.3L984.3 -189L984 -188.7L983.7 -189zM-959.6 -167.5L-954.5 -161.6L-960.4 -156.5L-965.5 -162.4zM-911.6 -167.3L-906.7 -161.6L-912.4 -156.7L-917.3 -162.4zM-863.6 -167.2L-858.8 -161.6L-864.4 -156.8L-869.2 -162.4zM-815.6 -167L-811 -161.6L-816.4 -157L-821 -162.4zM-767.6 -166.8L-763.2 -161.6L-768.4 -157.2L-772.8 -162.4zM-719.6 -166.7L-715.3 -161.6L-720.4 -157.3L-724.7 -162.4zM-671.6 -166.5L-667.5 -161.6L-672.4 -157.5L-676.5 -162.4zM-623.7 -166.4L-619.6 -161.7L-624.3 -157.6L-628.4 -162.3zM-575.7 -166.3L-571.7 -161.7L-576.3 -157.7L-580.3 -162.3zM-527.7 -166.1L-523.9 -161.7L-528.3 -157.9L-532.1 -162.3zM-479.7 -166L-476 -161.7L-480.3 -158L-484 -162.3zM-431.7 -165.8L-428.2 -161.7L-432.3 -158.2L-435.8 -162.3zM-383.7 -165.7L-380.3 -161.7L-384.3 -158.3L-387.7 -162.3zM-335.7 -165.5L-332.5 -161.7L-336.3 -158.5L-339.5 -162.3zM-287.7 -165.4L-284.6 -161.7L-288.3 -158.6L-291.4 -162.3zM-239.7 -165.2L-236.8 -161.7L-240.3 -158.8L-243.2 -162.3zM-191.8 -165.1L-188.9 -161.8L-192.2 -158.9L-195.1 -162.2zM-143.8 -165L-141 -161.8L-144.2 -159L-147 -162.2zM-95.8 -164.8L-93.2 -161.8L-96.2 -159.2L-98.8 -162.2zM-47.8 -164.6L-45.4 -161.8L-48.2 -159.4L-50.6 -162.2zM0.2 -164.5L2.5 -161.8L-0.2 -159.5L-2.5 -162.2zM48.2 -164.3L50.3 -161.8L47.8 -159.7L45.7 -162.2zM96.2 -164.2L98.2 -161.8L95.8 -159.8L93.8 -162.2zM144.2 -164L146 -161.8L143.8 -160L142 -162.2zM192.1 -163.9L193.9 -161.9L191.9 -160.1L190.1 -162.1zM240.1 -163.7L241.7 -161.9L239.9 -160.3L238.3 -162.1zM288.1 -163.6L289.6 -161.9L287.9 -160.4L286.4 -162.1zM336.1 -163.5L337.5 -161.9L335.9 -160.5L334.5 -162.1zM384.1 -163.4L385.4 -161.9L383.9 -160.6L382.6 -162.1zM432.1 -163.3L433.3 -161.9L431.9 -160.7L430.7 -162.1zM480.1 -163.2L481.2 -161.9L479.9 -160.8L478.8 -162.1zM528.1 -163.1L529.1 -161.9L527.9 -160.9L526.9 -162.1zM576.1 -163.1L577.1 -161.9L575.9 -160.9L574.9 -162.1zM624.1 -163L625 -161.9L623.9 -161L623 -162.1zM672.1 -162.9L672.9 -161.9L671.9 -161.1L671.1 -162.1zM720.1 -162.8L720.8 -161.9L719.9 -161.2L719.2 -162.1zM768.1 -162.8L768.8 -161.9L767.9 -161.2L767.2 -162.1zM816.1 -162.7L816.7 -161.9L815.9 -161.3L815.3 -162.1zM864.1 -162.6L864.6 -161.9L863.9 -161.4L863.4 -162.1zM912 -162.6L912.6 -162L912 -161.4L911.4 -162zM960 -162.5L960.5 -162L960 -161.5L959.5 -162zM-935.5 -141.2L-929.8 -134.5L-936.5 -128.8L-942.2 -135.5zM-887.5 -140.9L-882.1 -134.5L-888.5 -129.1L-893.9 -135.5zM-839.6 -140.7L-834.3 -134.6L-840.4 -129.3L-845.7 -135.4zM-791.6 -140.5L-786.5 -134.6L-792.4 -129.5L-797.5 -135.4zM-743.6 -140.3L-738.7 -134.6L-744.4 -129.7L-749.3 -135.4zM-695.6 -140.1L-690.9 -134.6L-696.4 -129.9L-701.1 -135.4zM-647.6 -140L-643 -134.6L-648.4 -130L-653 -135.4zM-599.6 -139.8L-595.2 -134.6L-600.4 -130.2L-604.8 -135.4zM-551.6 -139.6L-547.4 -134.6L-552.4 -130.4L-556.6 -135.4zM-503.6 -139.5L-499.5 -134.6L-504.4 -130.5L-508.5 -135.4zM-455.7 -139.4L-451.6 -134.7L-456.3 -130.6L-460.4 -135.3zM-407.7 -139.2L-403.8 -134.7L-408.3 -130.8L-412.2 -135.3zM-359.7 -139.1L-355.9 -134.7L-360.3 -130.9L-364.1 -135.3zM-311.7 -138.9L-308.1 -134.7L-312.3 -131.1L-315.9 -135.3zM-263.7 -138.8L-260.2 -134.7L-264.3 -131.2L-267.8 -135.3zM-215.7 -138.6L-212.4 -134.7L-216.3 -131.4L-219.6 -135.3zM-167.7 -138.5L-164.5 -134.7L-168.3 -131.5L-171.5 -135.3zM-119.7 -138.3L-116.7 -134.7L-120.3 -131.7L-123.3 -135.3zM-71.7 -138.2L-68.8 -134.7L-72.3 -131.8L-75.2 -135.3zM-23.8 -138.1L-20.9 -134.8L-24.2 -131.9L-27.1 -135.2zM24.2 -137.9L26.9 -134.8L23.8 -132.1L21.1 -135.2zM72.2 -137.7L74.7 -134.8L71.8 -132.3L69.3 -135.2zM120.2 -137.6L122.6 -134.8L119.8 -132.4L117.4 -135.2zM168.2 -137.4L170.4 -134.8L167.8 -132.6L165.6 -135.2zM216.2 -137.3L218.3 -134.8L215.8 -132.7L213.7 -135.2zM264.2 -137.1L266.1 -134.8L263.8 -132.9L261.9 -135.2zM312.2 -136.9L313.9 -134.8L311.8 -133.1L310.1 -135.2zM360.1 -136.8L361.8 -134.9L359.9 -133.2L358.2 -135.1zM408.1 -136.7L409.7 -134.9L407.9 -133.3L406.3 -135.1zM456.1 -136.6L457.6 -134.9L455.9 -133.4L454.4 -135.1zM504.1 -136.5L505.5 -134.9L503.9 -133.5L502.5 -135.1zM552.1 -136.4L553.4 -134.9L551.9 -133.6L550.6 -135.1zM600.1 -136.3L601.3 -134.9L599.9 -133.7L598.7 -135.1zM648.1 -136.2L649.2 -134.9L647.9 -133.8L646.8 -135.1zM696.1 -136.1L697.1 -134.9L695.9 -133.9L694.9 -135.1zM744.1 -136L745 -134.9L743.9 -134L743 -135.1zM792.1 -136L793 -134.9L791.9 -134L791 -135.1zM840.1 -135.9L840.9 -134.9L839.9 -134.1L839.1 -135.1zM888.1 -135.8L888.8 -134.9L887.9 -134.2L887.2 -135.1zM936.1 -135.7L936.7 -134.9L935.9 -134.3L935.3 -135.1zM984.1 -135.7L984.7 -134.9L983.9 -134.3L983.3 -135.1zM-959.4 -115.1L-952.9 -107.4L-960.6 -100.9L-967.1 -108.6zM-911.5 -114.8L-905.2 -107.5L-912.5 -101.2L-918.8 -108.5zM-863.5 -114.6L-857.4 -107.5L-864.5 -101.4L-870.6 -108.5zM-815.5 -114.3L-809.7 -107.5L-816.5 -101.7L-822.3 -108.5zM-767.5 -114.1L-761.9 -107.5L-768.5 -101.9L-774.1 -108.5zM-719.5 -113.8L-714.2 -107.5L-720.5 -102.2L-725.8 -108.5zM-671.6 -113.6L-666.4 -107.6L-672.4 -102.4L-677.6 -108.4zM-623.6 -113.4L-618.6 -107.6L-624.4 -102.6L-629.4 -108.4zM-575.6 -113.2L-570.8 -107.6L-576.4 -102.8L-581.2 -108.4zM-527.6 -113.1L-522.9 -107.6L-528.4 -102.9L-533.1 -108.4zM-479.6 -112.9L-475.1 -107.6L-480.4 -103.1L-484.9 -108.4zM-431.6 -112.7L-427.3 -107.6L-432.4 -103.3L-436.7 -108.4zM-383.6 -112.6L-379.4 -107.6L-384.4 -103.4L-388.6 -108.4zM-335.6 -112.5L-331.5 -107.6L-336.4 -103.5L-340.5 -108.4zM-287.7 -112.3L-283.7 -107.7L-288.3 -103.7L-292.3 -108.3zM-239.7 -112.2L-235.8 -107.7L-240.3 -103.8L-244.2 -108.3zM-191.7 -112L-188 -107.7L-192.3 -104L-196 -108.3zM-143.7 -111.9L-140.1 -107.7L-144.3 -104.1L-147.9 -108.3zM-95.7 -111.7L-92.3 -107.7L-96.3 -104.3L-99.7 -108.3zM-47.7 -111.6L-44.4 -107.7L-48.3 -104.4L-51.6 -108.3zM0.3 -111.4L3.4 -107.7L-0.3 -104.6L-3.4 -108.3zM48.3 -111.3L51.3 -107.7L47.7 -104.7L44.7 -108.3zM96.2 -111.2L99.2 -107.8L95.8 -104.8L92.8 -108.2zM144.2 -111L147 -107.8L143.8 -105L141 -108.2zM192.2 -110.9L194.9 -107.8L191.8 -105.1L189.1 -108.2zM240.2 -110.7L242.7 -107.8L239.8 -105.3L237.3 -108.2zM288.2 -110.5L290.5 -107.8L287.8 -105.5L285.5 -108.2zM336.2 -110.4L338.4 -107.8L335.8 -105.6L333.6 -108.2zM384.2 -110.2L386.2 -107.8L383.8 -105.8L381.8 -108.2zM432.2 -110.1L434.1 -107.8L431.8 -105.9L429.9 -108.2zM480.1 -109.9L481.9 -107.9L479.9 -106.1L478.1 -108.1zM528.1 -109.8L529.8 -107.9L527.9 -106.2L526.2 -108.1zM576.1 -109.7L577.7 -107.9L575.9 -106.3L574.3 -108.1zM624.1 -109.6L625.6 -107.9L623.9 -106.4L622.4 -108.1zM672.1 -109.5L673.5 -107.9L671.9 -106.5L670.5 -108.1zM720.1 -109.3L721.3 -107.9L719.9 -106.7L718.7 -108.1zM768.1 -109.2L769.2 -107.9L767.9 -106.8L766.8 -108.1zM816.1 -109.2L817.2 -107.9L815.9 -106.8L814.8 -108.1zM864.1 -109.1L865.1 -107.9L863.9 -106.9L862.9 -108.1zM912.1 -109L913 -107.9L911.9 -107L911 -108.1zM960.1 -108.9L960.9 -107.9L959.9 -107.1L959.1 -108.1zM-935.4 -88.8L-928.2 -80.4L-936.6 -73.2L-943.8 -81.6zM-887.4 -88.6L-880.4 -80.4L-888.6 -73.4L-895.6 -81.6zM-839.4 -88.3L-832.7 -80.4L-840.6 -73.7L-847.3 -81.6zM-791.4 -88L-785 -80.4L-792.6 -74L-799 -81.6zM-743.5 -87.7L-737.3 -80.5L-744.5 -74.3L-750.7 -81.5zM-695.5 -87.5L-689.5 -80.5L-696.5 -74.5L-702.5 -81.5zM-647.5 -87.3L-641.7 -80.5L-648.5 -74.7L-654.3 -81.5zM-599.5 -87L-594 -80.5L-600.5 -75L-606 -81.5zM-551.5 -86.8L-546.2 -80.5L-552.5 -75.2L-557.8 -81.5zM-503.6 -86.5L-498.5 -80.6L-504.4 -75.5L-509.5 -81.4zM-455.6 -86.3L-450.7 -80.6L-456.4 -75.7L-461.3 -81.4zM-407.6 -86.2L-402.8 -80.6L-408.4 -75.8L-413.2 -81.4zM-359.6 -86L-355 -80.6L-360.4 -76L-365 -81.4zM-311.6 -85.9L-307.1 -80.6L-312.4 -76.1L-316.9 -81.4zM-263.6 -85.7L-259.3 -80.6L-264.4 -76.3L-268.7 -81.4zM-215.6 -85.6L-211.4 -80.6L-216.4 -76.4L-220.6 -81.4zM-167.7 -85.4L-163.6 -80.7L-168.3 -76.6L-172.4 -81.3zM-119.7 -85.3L-115.7 -80.7L-120.3 -76.7L-124.3 -81.3zM-71.7 -85.1L-67.9 -80.7L-72.3 -76.9L-76.1 -81.3zM-23.7 -85L-20 -80.7L-24.3 -77L-28 -81.3zM24.3 -84.8L27.8 -80.7L23.7 -77.2L20.2 -81.3zM72.3 -84.7L75.7 -80.7L71.7 -77.3L68.3 -81.3zM120.3 -84.5L123.5 -80.7L119.7 -77.5L116.5 -81.3zM168.3 -84.4L171.4 -80.7L167.7 -77.6L164.6 -81.3zM216.3 -84.3L219.3 -80.7L215.7 -77.7L212.7 -81.3zM264.2 -84.1L267.1 -80.8L263.8 -77.9L260.9 -81.2zM312.2 -84L315 -80.8L311.8 -78L309 -81.2zM360.2 -83.8L362.8 -80.8L359.8 -78.2L357.2 -81.2zM408.2 -83.6L410.6 -80.8L407.8 -78.4L405.4 -81.2zM456.2 -83.5L458.5 -80.8L455.8 -78.5L453.5 -81.2zM504.2 -83.3L506.3 -80.8L503.8 -78.7L501.7 -81.2zM552.2 -83.2L554.2 -80.8L551.8 -78.8L549.8 -81.2zM600.2 -83L602 -80.8L599.8 -79L598 -81.2zM648.1 -82.9L649.9 -80.9L647.9 -79.1L646.1 -81.1zM696.1 -82.8L697.8 -80.9L695.9 -79.2L694.2 -81.1zM744.1 -82.6L745.6 -80.9L743.9 -79.4L742.4 -81.1zM792.1 -82.5L793.5 -80.9L791.9 -79.5L790.5 -81.1zM840.1 -82.4L841.4 -80.9L839.9 -79.6L838.6 -81.1zM888.1 -82.3L889.3 -80.9L887.9 -79.7L886.7 -81.1zM936.1 -82.2L937.2 -80.9L935.9 -79.8L934.8 -81.1zM984.1 -82.1L985.1 -80.9L983.9 -79.9L982.9 -81.1zM-959.3 -62.9L-951.1 -53.3L-960.7 -45.1L-968.9 -54.7zM-911.3 -62.6L-903.4 -53.3L-912.7 -45.4L-920.6 -54.7zM-863.3 -62.3L-855.7 -53.3L-864.7 -45.7L-872.3 -54.7zM-815.4 -62L-808 -53.4L-816.6 -46L-824 -54.6zM-767.4 -61.8L-760.2 -53.4L-768.6 -46.2L-775.8 -54.6zM-719.4 -61.5L-712.5 -53.4L-720.6 -46.5L-727.5 -54.6zM-671.4 -61.2L-664.8 -53.4L-672.6 -46.8L-679.2 -54.6zM-623.5 -60.9L-617.1 -53.5L-624.5 -47.1L-630.9 -54.5zM-575.5 -60.7L-569.3 -53.5L-576.5 -47.3L-582.7 -54.5zM-527.5 -60.4L-521.6 -53.5L-528.5 -47.6L-534.4 -54.5zM-479.5 -60.2L-473.8 -53.5L-480.5 -47.8L-486.2 -54.5zM-431.5 -59.9L-426.1 -53.5L-432.5 -48.1L-437.9 -54.5zM-383.6 -59.7L-378.3 -53.6L-384.4 -48.3L-389.7 -54.4zM-335.6 -59.5L-330.5 -53.6L-336.4 -48.5L-341.5 -54.4zM-287.6 -59.3L-282.7 -53.6L-288.4 -48.7L-293.3 -54.4zM-239.6 -59.1L-234.9 -53.6L-240.4 -48.9L-245.1 -54.4zM-191.6 -59L-187 -53.6L-192.4 -49L-197 -54.4zM-143.6 -58.8L-139.2 -53.6L-144.4 -49.2L-148.8 -54.4zM-95.6 -58.7L-91.3 -53.6L-96.4 -49.3L-100.7 -54.4zM-47.6 -58.5L-43.5 -53.6L-48.4 -49.5L-52.5 -54.4zM0.3 -58.4L4.4 -53.7L-0.3 -49.6L-4.4 -54.3zM48.3 -58.2L52.2 -53.7L47.7 -49.8L43.8 -54.3zM96.3 -58.1L100.1 -53.7L95.7 -49.9L91.9 -54.3zM144.3 -57.9L147.9 -53.7L143.7 -50.1L140.1 -54.3zM192.3 -57.8L195.8 -53.7L191.7 -50.2L188.2 -54.3zM240.3 -57.6L243.6 -53.7L239.7 -50.4L236.4 -54.3zM288.3 -57.5L291.5 -53.7L287.7 -50.5L284.5 -54.3zM336.3 -57.4L339.4 -53.7L335.7 -50.6L332.6 -54.3zM384.3 -57.2L387.2 -53.7L383.7 -50.8L380.8 -54.3zM432.2 -57.1L435.1 -53.8L431.8 -50.9L428.9 -54.2zM480.2 -56.9L482.9 -53.8L479.8 -51.1L477.1 -54.2zM528.2 -56.8L530.8 -53.8L527.8 -51.2L525.2 -54.2zM576.2 -56.6L578.6 -53.8L575.8 -51.4L573.4 -54.2zM624.2 -56.4L626.4 -53.8L623.8 -51.6L621.6 -54.2zM672.2 -56.3L674.3 -53.8L671.8 -51.7L669.7 -54.2zM720.2 -56.1L722.1 -53.8L719.8 -51.9L717.9 -54.2zM768.2 -56L770 -53.8L767.8 -52L766 -54.2zM816.1 -55.8L817.8 -53.9L815.9 -52.2L814.2 -54.1zM864.1 -55.7L865.7 -53.9L863.9 -52.3L862.3 -54.1zM912.1 -55.6L913.6 -53.9L911.9 -52.4L910.4 -54.1zM960.1 -55.5L961.5 -53.9L959.9 -52.5L958.5 -54.1zM-935.2 -36.9L-926.1 -26.2L-936.8 -17.1L-945.9 -27.8zM-887.2 -36.6L-878.4 -26.2L-888.8 -17.4L-897.6 -27.8zM-839.3 -36.2L-830.8 -26.3L-840.7 -17.8L-849.2 -27.7zM-791.3 -35.8L-783.2 -26.3L-792.7 -18.2L-800.8 -27.7zM-743.3 -35.5L-735.5 -26.3L-744.7 -18.5L-752.5 -27.7zM-695.4 -35.2L-687.8 -26.4L-696.6 -18.8L-704.2 -27.6zM-647.4 -35L-640 -26.4L-648.6 -19L-656 -27.6zM-599.4 -34.7L-592.3 -26.4L-600.6 -19.3L-607.7 -27.6zM-551.4 -34.4L-544.6 -26.4L-552.6 -19.6L-559.4 -27.6zM-503.4 -34.1L-496.9 -26.4L-504.6 -19.9L-511.1 -27.6zM-455.5 -33.8L-449.2 -26.5L-456.5 -20.2L-462.8 -27.5zM-407.5 -33.6L-401.4 -26.5L-408.5 -20.4L-414.6 -27.5zM-359.5 -33.3L-353.7 -26.5L-360.5 -20.7L-366.3 -27.5zM-311.5 -33.1L-305.9 -26.5L-312.5 -20.9L-318.1 -27.5zM-263.5 -32.9L-258.1 -26.5L-264.5 -21.1L-269.9 -27.5zM-215.6 -32.6L-210.4 -26.6L-216.4 -21.4L-221.6 -27.4zM-167.6 -32.4L-162.6 -26.6L-168.4 -21.6L-173.4 -27.4zM-119.6 -32.2L-114.8 -26.6L-120.4 -21.8L-125.2 -27.4zM-71.6 -32.1L-66.9 -26.6L-72.4 -21.9L-77.1 -27.4zM-23.6 -31.9L-19.1 -26.6L-24.4 -22.1L-28.9 -27.4zM24.4 -31.8L28.8 -26.6L23.6 -22.2L19.2 -27.4zM72.4 -31.6L76.6 -26.6L71.6 -22.4L67.4 -27.4zM120.4 -31.5L124.5 -26.6L119.6 -22.5L115.5 -27.4zM168.3 -31.3L172.3 -26.7L167.7 -22.7L163.7 -27.3zM216.3 -31.2L220.2 -26.7L215.7 -22.8L211.8 -27.3zM264.3 -31L268 -26.7L263.7 -23L260 -27.3zM312.3 -30.9L315.9 -26.7L311.7 -23.1L308.1 -27.3zM360.3 -30.7L363.7 -26.7L359.7 -23.3L356.3 -27.3zM408.3 -30.6L411.6 -26.7L407.7 -23.4L404.4 -27.3zM456.3 -30.5L459.5 -26.7L455.7 -23.5L452.5 -27.3zM504.3 -30.3L507.3 -26.7L503.7 -23.7L500.7 -27.3zM552.2 -30.2L555.2 -26.8L551.8 -23.8L548.8 -27.2zM600.2 -30L603 -26.8L599.8 -24L597 -27.2zM648.2 -29.9L650.9 -26.8L647.8 -24.1L645.1 -27.2zM696.2 -29.7L698.7 -26.8L695.8 -24.3L693.3 -27.2zM744.2 -29.5L746.5 -26.8L743.8 -24.5L741.5 -27.2zM792.2 -29.4L794.4 -26.8L791.8 -24.6L789.6 -27.2zM840.2 -29.2L842.2 -26.8L839.8 -24.8L837.8 -27.2zM888.2 -29.1L890.1 -26.8L887.8 -24.9L885.9 -27.2zM936.1 -28.9L937.9 -26.9L935.9 -25.1L934.1 -27.1zM984.1 -28.8L985.8 -26.9L983.9 -25.2L982.2 -27.1zM-959.1 -11.3L-948.7 0.9L-960.9 11.3L-971.3 -0.9zM-911.1 -11L-901 0.9L-912.9 11L-923 -0.9zM-863.2 -10.6L-853.4 0.8L-864.8 10.6L-874.6 -0.8zM-815.2 -10.2L-805.8 0.8L-816.8 10.2L-826.2 -0.8zM-767.2 -9.8L-758.2 0.8L-768.8 9.8L-777.8 -0.8zM-719.3 -9.4L-710.6 0.7L-720.7 9.4L-729.4 -0.7zM-671.3 -9.1L-662.9 0.7L-672.7 9.1L-681.1 -0.7zM-623.3 -8.7L-615.3 0.7L-624.7 8.7L-632.7 -0.7zM-575.3 -8.4L-567.6 0.7L-576.7 8.4L-584.4 -0.7zM-527.4 -8.2L-519.8 0.6L-528.6 8.2L-536.2 -0.6zM-479.4 -7.9L-472.1 0.6L-480.6 7.9L-487.9 -0.6zM-431.4 -7.6L-424.4 0.6L-432.6 7.6L-439.6 -0.6zM-383.4 -7.3L-376.7 0.6L-384.6 7.3L-391.3 -0.6zM-335.4 -7L-329 0.6L-336.6 7L-343 -0.6zM-287.5 -6.8L-281.2 0.5L-288.5 6.8L-294.8 -0.5zM-239.5 -6.5L-233.5 0.5L-240.5 6.5L-246.5 -0.5zM-191.5 -6.3L-185.7 0.5L-192.5 6.3L-198.3 -0.5zM-143.5 -6L-138 0.5L-144.5 6L-150 -0.5zM-95.5 -5.8L-90.2 0.5L-96.5 5.8L-101.8 -0.5zM-47.6 -5.5L-42.5 0.4L-48.4 5.5L-53.5 -0.4zM0.4 -5.4L5.4 0.4L-0.4 5.4L-5.4 -0.4zM48.4 -5.2L53.2 0.4L47.6 5.2L42.8 -0.4zM96.4 -5L101 0.4L95.6 5L91 -0.4zM144.4 -4.9L148.9 0.4L143.6 4.9L139.1 -0.4zM192.4 -4.7L196.7 0.4L191.6 4.7L187.3 -0.4zM240.4 -4.6L244.6 0.4L239.6 4.6L235.4 -0.4zM288.3 -4.4L292.4 0.3L287.7 4.4L283.6 -0.3zM336.3 -4.3L340.3 0.3L335.7 4.3L331.7 -0.3zM384.3 -4.1L388.1 0.3L383.7 4.1L379.9 -0.3zM432.3 -4L436 0.3L431.7 4L428 -0.3zM480.3 -3.8L483.8 0.3L479.7 3.8L476.2 -0.3zM528.3 -3.7L531.7 0.3L527.7 3.7L524.3 -0.3zM576.3 -3.6L579.6 0.3L575.7 3.6L572.4 -0.3zM624.3 -3.4L627.4 0.3L623.7 3.4L620.6 -0.3zM672.3 -3.3L675.3 0.3L671.7 3.3L668.7 -0.3zM720.2 -3.1L723.1 0.2L719.8 3.1L716.9 -0.2zM768.2 -3L771 0.2L767.8 3L765 -0.2zM816.2 -2.8L818.8 0.2L815.8 2.8L813.2 -0.2zM864.2 -2.7L866.7 0.2L863.8 2.7L861.3 -0.2zM912.2 -2.5L914.5 0.2L911.8 2.5L909.5 -0.2zM960.2 -2.3L962.3 0.2L959.8 2.3L957.7 -0.2zM-935 14.6L-923.6 28L-937 39.4L-948.4 26zM-887.1 15L-876 27.9L-888.9 39L-900 26.1zM-839.1 15.4L-828.4 27.9L-840.9 38.6L-851.6 26.1zM-791.1 15.8L-780.8 27.9L-792.9 38.2L-803.2 26.1zM-743.1 16.2L-733.2 27.9L-744.9 37.8L-754.8 26.1zM-695.2 16.5L-685.5 27.8L-696.8 37.5L-706.5 26.2zM-647.2 16.9L-637.9 27.8L-648.8 37.1L-658.1 26.2zM-599.2 17.3L-590.3 27.8L-600.8 36.7L-609.7 26.2zM-551.3 17.7L-542.7 27.7L-552.7 36.3L-561.3 26.3zM-503.3 18.1L-495.1 27.7L-504.7 35.9L-512.9 26.3zM-455.3 18.4L-447.4 27.7L-456.7 35.6L-464.6 26.3zM-407.3 18.6L-399.6 27.7L-408.7 35.4L-416.4 26.3zM-359.4 18.9L-351.9 27.6L-360.6 35.1L-368.1 26.4zM-311.4 19.2L-304.2 27.6L-312.6 34.8L-319.8 26.4zM-263.4 19.5L-256.5 27.6L-264.6 34.5L-271.5 26.4zM-215.4 19.8L-208.8 27.6L-216.6 34.2L-223.2 26.4zM-167.5 20.1L-161.1 27.5L-168.5 33.9L-174.9 26.5zM-119.5 20.3L-113.3 27.5L-120.5 33.7L-126.7 26.5zM-71.5 20.6L-65.6 27.5L-72.5 33.4L-78.4 26.5zM-23.5 20.8L-17.8 27.5L-24.5 33.2L-30.2 26.5zM24.5 21L30 27.5L23.5 33L18 26.5zM72.4 21.3L77.7 27.4L71.6 32.7L66.3 26.6zM120.4 21.5L125.5 27.4L119.6 32.5L114.5 26.6zM168.4 21.7L173.3 27.4L167.6 32.3L162.7 26.6zM216.4 21.9L221.1 27.4L215.6 32.1L210.9 26.6zM264.4 22L269 27.4L263.6 32L259 26.6zM312.4 22.2L316.8 27.4L311.6 31.8L307.2 26.6zM360.4 22.3L364.7 27.4L359.6 31.7L355.3 26.6zM408.4 22.5L412.5 27.4L407.6 31.5L403.5 26.6zM456.3 22.6L460.4 27.3L455.7 31.4L451.6 26.7zM504.3 22.8L508.2 27.3L503.7 31.2L499.8 26.7zM552.3 22.9L556.1 27.3L551.7 31.1L547.9 26.7zM600.3 23.1L603.9 27.3L599.7 30.9L596.1 26.7zM648.3 23.2L651.8 27.3L647.7 30.8L644.2 26.7zM696.3 23.3L699.7 27.3L695.7 30.7L692.3 26.7zM744.3 23.5L747.5 27.3L743.7 30.5L740.5 26.7zM792.3 23.6L795.4 27.3L791.7 30.4L788.6 26.7zM840.3 23.8L843.2 27.3L839.7 30.2L836.8 26.7zM888.2 23.9L891.1 27.2L887.8 30.1L884.9 26.8zM936.2 24.1L938.9 27.2L935.8 29.9L933.1 26.8zM984.2 24.2L986.8 27.2L983.8 29.8L981.2 26.8zM-958.9 40.3L-946.3 55.1L-961.1 67.7L-973.7 52.9zM-910.9 40.6L-898.6 55.1L-913.1 67.4L-925.4 52.9zM-863 41L-851 55L-865 67L-877 53zM-815 41.4L-803.4 55L-817 66.6L-828.6 53zM-767 41.8L-755.8 55L-769 66.2L-780.2 53zM-719.1 42.1L-708.1 54.9L-720.9 65.9L-731.9 53.1zM-671.1 42.5L-660.5 54.9L-672.9 65.5L-683.5 53.1zM-623.1 42.9L-612.9 54.9L-624.9 65.1L-635.1 53.1zM-575.2 43.3L-565.3 54.8L-576.8 64.7L-586.7 53.2zM-527.2 43.7L-517.7 54.8L-528.8 64.3L-538.3 53.2zM-479.2 44L-470 54.8L-480.8 64L-490 53.2zM-431.2 44.4L-422.4 54.8L-432.8 63.6L-441.6 53.2zM-383.3 44.8L-374.8 54.7L-384.7 63.2L-393.2 53.3zM-335.3 45.2L-327.2 54.7L-336.7 62.8L-344.8 53.3zM-287.3 45.5L-279.5 54.7L-288.7 62.5L-296.5 53.3zM-239.3 45.7L-231.7 54.7L-240.7 62.3L-248.3 53.3zM-191.4 46L-184 54.6L-192.6 62L-200 53.4zM-143.4 46.3L-136.3 54.6L-144.6 61.7L-151.7 53.4zM-95.4 46.6L-88.6 54.6L-96.6 61.4L-103.4 53.4zM-47.4 46.9L-40.9 54.6L-48.6 61.1L-55.1 53.4zM0.5 47.1L6.9 54.5L-0.5 60.9L-6.9 53.5zM48.5 47.4L54.6 54.5L47.5 60.6L41.4 53.5zM96.5 47.6L102.4 54.5L95.5 60.4L89.6 53.5zM144.5 47.9L150.1 54.5L143.5 60.1L137.9 53.5zM192.5 48.1L197.9 54.5L191.5 59.9L186.1 53.5zM240.4 48.4L245.6 54.4L239.6 59.6L234.4 53.6zM288.4 48.6L293.4 54.4L287.6 59.4L282.6 53.6zM336.4 48.7L341.3 54.4L335.6 59.3L330.7 53.6zM384.4 48.9L389.1 54.4L383.6 59.1L378.9 53.6zM432.4 49.1L436.9 54.4L431.6 58.9L427.1 53.6zM480.4 49.2L484.8 54.4L479.6 58.8L475.2 53.6zM528.4 49.4L532.6 54.4L527.6 58.6L523.4 53.6zM576.4 49.5L580.5 54.4L575.6 58.5L571.5 53.6zM624.3 49.7L628.3 54.3L623.7 58.3L619.7 53.7zM672.3 49.8L676.2 54.3L671.7 58.2L667.8 53.7zM720.3 50L724 54.3L719.7 58L716 53.7zM768.3 50.1L771.9 54.3L767.7 57.9L764.1 53.7zM816.3 50.2L819.8 54.3L815.7 57.8L812.2 53.7zM864.3 50.4L867.6 54.3L863.7 57.6L860.4 53.7zM912.3 50.5L915.5 54.3L911.7 57.5L908.5 53.7zM960.3 50.7L963.3 54.3L959.7 57.3L956.7 53.7zM-934.8 66.1L-921.1 82.2L-937.2 95.9L-950.9 79.8zM-886.9 66.5L-873.5 82.1L-889.1 95.5L-902.5 79.9zM-838.9 67L-826 82.1L-841.1 95L-854 79.9zM-790.9 67.4L-778.4 82.1L-793.1 94.6L-805.6 79.9zM-743 67.8L-730.8 82L-745 94.2L-757.2 80zM-695 68.1L-683.1 82L-697 93.9L-708.9 80zM-647 68.5L-635.5 82L-649 93.5L-660.5 80zM-599 68.9L-587.9 82L-601 93.1L-612.1 80zM-551.1 69.2L-540.2 81.9L-552.9 92.8L-563.8 80.1zM-503.1 69.6L-492.6 81.9L-504.9 92.4L-515.4 80.1zM-455.1 70L-445 81.9L-456.9 92L-467 80.1zM-407.2 70.4L-397.4 81.8L-408.8 91.6L-418.6 80.2zM-359.2 70.8L-349.8 81.8L-360.8 91.2L-370.2 80.2zM-311.2 71.2L-302.2 81.8L-312.8 90.8L-321.8 80.2zM-263.3 71.5L-254.5 81.7L-264.7 90.5L-273.5 80.3zM-215.3 71.9L-206.9 81.7L-216.7 90.1L-225.1 80.3zM-167.3 72.3L-159.3 81.7L-168.7 89.7L-176.7 80.3zM-119.3 72.5L-111.5 81.7L-120.7 89.5L-128.5 80.3zM-71.4 72.8L-63.8 81.6L-72.6 89.2L-80.2 80.4zM-23.4 73.1L-16.1 81.6L-24.6 88.9L-31.9 80.4zM24.6 73.4L31.6 81.6L23.4 88.6L16.4 80.4zM72.6 73.7L79.3 81.6L71.4 88.3L64.7 80.4zM120.6 74L127 81.6L119.4 88L113 80.4zM168.5 74.2L174.8 81.5L167.5 87.8L161.2 80.5zM216.5 74.5L222.5 81.5L215.5 87.5L209.5 80.5zM264.5 74.7L270.3 81.5L263.5 87.3L257.7 80.5zM312.5 75L318 81.5L311.5 87L306 80.5zM360.5 75.2L365.8 81.5L359.5 86.8L354.2 80.5zM408.4 75.4L413.6 81.4L407.6 86.6L402.4 80.6zM456.4 75.6L461.4 81.4L455.6 86.4L450.6 80.6zM504.4 75.8L509.2 81.4L503.6 86.2L498.8 80.6zM552.4 76L557 81.4L551.6 86L547 80.6zM600.4 76.1L604.9 81.4L599.6 85.9L595.1 80.6zM648.4 76.3L652.7 81.4L647.6 85.7L643.3 80.6zM696.4 76.4L700.6 81.4L695.6 85.6L691.4 80.6zM744.3 76.6L748.4 81.3L743.7 85.4L739.6 80.7zM792.3 76.7L796.3 81.3L791.7 85.3L787.7 80.7zM840.3 76.9L844.1 81.3L839.7 85.1L835.9 80.7zM888.3 77L892 81.3L887.7 85L884 80.7zM936.3 77.1L939.9 81.3L935.7 84.9L932.1 80.7zM984.3 77.3L987.7 81.3L983.7 84.7L980.3 80.7zM-958.7 91.5L-943.5 109.3L-961.3 124.5L-976.5 106.7zM-910.7 91.9L-895.9 109.3L-913.3 124.1L-928.1 106.7zM-862.8 92.4L-848.4 109.2L-865.2 123.6L-879.6 106.8zM-814.8 92.8L-800.8 109.2L-817.2 123.2L-831.2 106.8zM-766.8 93.2L-753.2 109.2L-769.2 122.8L-782.8 106.8zM-718.9 93.7L-705.7 109.1L-721.1 122.3L-734.3 106.9zM-670.9 94.1L-658.1 109.1L-673.1 121.9L-685.9 106.9zM-622.9 94.5L-610.5 109.1L-625.1 121.5L-637.5 106.9zM-575 94.9L-562.9 109L-577 121.1L-589.1 107zM-527 95.2L-515.2 109L-529 120.8L-540.8 107zM-479 95.6L-467.6 109L-481 120.4L-492.4 107zM-431.1 96L-420 108.9L-432.9 120L-444 107.1zM-383.1 96.4L-372.4 108.9L-384.9 119.6L-395.6 107.1zM-335.1 96.7L-324.7 108.9L-336.9 119.3L-347.3 107.1zM-287.1 97.1L-277.1 108.9L-288.9 118.9L-298.9 107.1zM-239.2 97.5L-229.5 108.8L-240.8 118.5L-250.5 107.2zM-191.2 97.9L-181.9 108.8L-192.8 118.1L-202.1 107.2zM-143.2 98.3L-134.3 108.8L-144.8 117.7L-153.7 107.2zM-95.3 98.7L-86.7 108.7L-96.7 117.3L-105.3 107.3zM-47.3 99L-39 108.7L-48.7 117L-57 107.3zM0.7 99.3L8.7 108.7L-0.7 116.7L-8.7 107.3zM48.7 99.6L56.4 108.7L47.3 116.4L39.6 107.3zM96.6 99.9L104.1 108.6L95.4 116.1L87.9 107.4zM144.6 100.2L151.8 108.6L143.4 115.8L136.2 107.4zM192.6 100.5L199.5 108.6L191.4 115.5L184.5 107.4zM240.6 100.8L247.2 108.6L239.4 115.2L232.8 107.4zM288.5 101.1L294.9 108.5L287.5 114.9L281.1 107.5zM336.5 101.3L342.7 108.5L335.5 114.7L329.3 107.5zM384.5 101.5L390.5 108.5L383.5 114.5L377.5 107.5zM432.5 101.8L438.2 108.5L431.5 114.2L425.8 107.5zM480.5 102L486 108.5L479.5 114L474 107.5zM528.5 102.3L533.7 108.5L527.5 113.7L522.3 107.5zM576.4 102.5L581.5 108.4L575.6 113.5L570.5 107.6zM624.4 102.7L629.3 108.4L623.6 113.3L618.7 107.6zM672.4 102.8L677.2 108.4L671.6 113.2L666.8 107.6zM720.4 103L725 108.4L719.6 113L715 107.6zM768.4 103.2L772.8 108.4L767.6 112.8L763.2 107.6zM816.4 103.3L820.7 108.4L815.6 112.7L811.3 107.6zM864.4 103.5L868.5 108.4L863.6 112.5L859.5 107.6zM912.3 103.6L916.4 108.3L911.7 112.4L907.6 107.7zM960.3 103.8L964.2 108.3L959.7 112.2L955.8 107.7zM-934.6 117.4L-918.4 136.4L-937.4 152.6L-953.6 133.6zM-886.6 117.8L-870.8 136.4L-889.4 152.2L-905.2 133.6zM-838.7 118.2L-823.2 136.3L-841.3 151.8L-856.8 133.7zM-790.7 118.6L-775.6 136.3L-793.3 151.4L-808.4 133.7zM-742.7 119.1L-728.1 136.3L-745.3 150.9L-759.9 133.7zM-694.8 119.5L-680.5 136.2L-697.2 150.5L-711.5 133.8zM-646.8 119.9L-632.9 136.2L-649.2 150.1L-663.1 133.8zM-598.8 120.4L-585.4 136.2L-601.2 149.6L-614.6 133.8zM-550.9 120.8L-537.8 136.1L-553.1 149.2L-566.2 133.9zM-502.9 121.2L-490.2 136.1L-505.1 148.8L-517.8 133.9zM-454.9 121.6L-442.6 136.1L-457.1 148.4L-469.4 133.9zM-407 122L-395 136L-409 148L-421 134zM-359 122.4L-347.4 136L-361 147.6L-372.6 134zM-311 122.7L-299.7 136L-313 147.3L-324.3 134zM-263.1 123.1L-252.1 135.9L-264.9 146.9L-275.9 134.1zM-215.1 123.5L-204.5 135.9L-216.9 146.5L-227.5 134.1zM-167.1 123.9L-156.9 135.9L-168.9 146.1L-179.1 134.1zM-119.2 124.2L-109.2 135.8L-120.8 145.8L-130.8 134.2zM-71.2 124.6L-61.6 135.8L-72.8 145.4L-82.4 134.2zM-23.2 125L-14 135.8L-24.8 145L-34 134.2zM24.8 125.4L33.6 135.8L23.2 144.6L14.4 134.2zM72.7 125.8L81.2 135.7L71.3 144.2L62.8 134.3zM120.7 126.1L128.9 135.7L119.3 143.9L111.1 134.3zM168.7 126.4L176.6 135.7L167.3 143.6L159.4 134.3zM216.7 126.7L224.3 135.7L215.3 143.3L207.7 134.3zM264.6 127L272 135.6L263.4 143L256 134.4zM312.6 127.3L319.7 135.6L311.4 142.7L304.3 134.4zM360.6 127.6L367.4 135.6L359.4 142.4L352.6 134.4zM408.6 127.9L415.1 135.6L407.4 142.1L400.9 134.4zM456.5 128.1L462.9 135.5L455.5 141.9L449.1 134.5zM504.5 128.4L510.6 135.5L503.5 141.6L497.4 134.5zM552.5 128.6L558.4 135.5L551.5 141.4L545.6 134.5zM600.5 128.9L606.1 135.5L599.5 141.1L593.9 134.5zM648.5 129.1L653.9 135.5L647.5 140.9L642.1 134.5zM696.4 129.4L701.6 135.4L695.6 140.6L690.4 134.6zM744.4 129.6L749.4 135.4L743.6 140.4L738.6 134.6zM792.4 129.7L797.3 135.4L791.6 140.3L786.7 134.6zM840.4 129.9L845.1 135.4L839.6 140.1L834.9 134.6zM888.4 130.1L892.9 135.4L887.6 139.9L883.1 134.6zM936.4 130.2L940.8 135.4L935.6 139.8L931.2 134.6zM984.4 130.4L988.6 135.4L983.6 139.6L979.4 134.6zM-958.5 142.9L-940.9 163.5L-961.5 181.1L-979.1 160.5zM-910.5 143.3L-893.3 163.5L-913.5 180.7L-930.7 160.5zM-862.6 143.7L-845.7 163.4L-865.4 180.3L-882.3 160.6zM-814.6 144.1L-798.1 163.4L-817.4 179.9L-833.9 160.6zM-766.6 144.5L-750.5 163.4L-769.4 179.5L-785.5 160.6zM-718.7 144.9L-702.9 163.3L-721.3 179.1L-737.1 160.7zM-670.7 145.3L-655.3 163.3L-673.3 178.7L-688.7 160.7zM-622.7 145.8L-607.8 163.3L-625.3 178.2L-640.2 160.7zM-574.8 146.2L-560.2 163.2L-577.2 177.8L-591.8 160.8zM-526.8 146.6L-512.6 163.2L-529.2 177.4L-543.4 160.8zM-478.8 147.1L-465.1 163.2L-481.2 176.9L-494.9 160.8zM-430.9 147.5L-417.5 163.1L-433.1 176.5L-446.5 160.9zM-382.9 147.9L-369.9 163.1L-385.1 176.1L-398.1 160.9zM-334.9 148.3L-322.3 163.1L-337.1 175.7L-349.7 160.9zM-287 148.7L-274.7 163L-289 175.3L-301.3 161zM-239 149.1L-227.1 163L-241 174.9L-252.9 161zM-191 149.5L-179.5 163L-193 174.5L-204.5 161zM-143 149.8L-131.8 163L-145 174.2L-156.2 161zM-95.1 150.2L-84.2 162.9L-96.9 173.8L-107.8 161.1zM-47.1 150.6L-36.6 162.9L-48.9 173.4L-59.4 161.1zM0.9 151L11 162.9L-0.9 173L-11 161.1zM48.8 151.4L58.6 162.8L47.2 172.6L37.4 161.2zM96.8 151.7L106.3 162.8L95.2 172.3L85.7 161.2zM144.8 152.1L153.9 162.8L143.2 171.9L134.1 161.2zM192.7 152.5L201.5 162.7L191.3 171.5L182.5 161.3zM240.7 152.9L249.1 162.7L239.3 171.1L230.9 161.3zM288.7 153.2L296.8 162.7L287.3 170.8L279.2 161.3zM336.7 153.5L344.5 162.7L335.3 170.5L327.5 161.3zM384.6 153.8L392.2 162.6L383.4 170.2L375.8 161.4zM432.6 154.1L439.9 162.6L431.4 169.9L424.1 161.4zM480.6 154.4L487.6 162.6L479.4 169.6L472.4 161.4zM528.6 154.7L535.3 162.6L527.4 169.3L520.7 161.4zM576.6 155L583 162.6L575.4 169L569 161.4zM624.5 155.2L630.8 162.5L623.5 168.8L617.2 161.5zM672.5 155.4L678.6 162.5L671.5 168.6L665.4 161.5zM720.5 155.7L726.3 162.5L719.5 168.3L713.7 161.5zM768.5 155.9L774.1 162.5L767.5 168.1L761.9 161.5zM816.5 156.2L821.8 162.5L815.5 167.8L810.2 161.5zM864.4 156.4L869.6 162.4L863.6 167.6L858.4 161.6zM912.4 156.6L917.4 162.4L911.6 167.4L906.6 161.6zM960.4 156.8L965.2 162.4L959.6 167.2L954.8 161.6zM-934.4 168.8L-915.8 190.6L-937.6 209.2L-956.2 187.4zM-886.4 169.2L-868.2 190.6L-889.6 208.8L-907.8 187.4zM-838.5 169.6L-820.6 190.5L-841.5 208.4L-859.4 187.5zM-790.5 170L-773 190.5L-793.5 208L-811 187.5zM-742.5 170.4L-725.4 190.5L-745.5 207.6L-762.6 187.5zM-694.6 170.8L-677.8 190.4L-697.4 207.2L-714.2 187.6zM-646.6 171.2L-630.2 190.4L-649.4 206.8L-665.8 187.6zM-598.6 171.7L-582.7 190.4L-601.4 206.3L-617.3 187.6zM-550.7 172.1L-535.1 190.3L-553.3 205.9L-568.9 187.7zM-502.7 172.5L-487.5 190.3L-505.3 205.5L-520.5 187.7zM-454.7 172.9L-439.9 190.3L-457.3 205.1L-472.1 187.7zM-406.8 173.3L-392.3 190.2L-409.2 204.7L-423.7 187.8zM-358.8 173.8L-344.8 190.2L-361.2 204.2L-375.2 187.8zM-310.8 174.2L-297.2 190.2L-313.2 203.8L-326.8 187.8zM-262.9 174.6L-249.6 190.1L-265.1 203.4L-278.4 187.9zM-214.9 175.1L-202.1 190.1L-217.1 202.9L-229.9 187.9zM-166.9 175.5L-154.5 190.1L-169.1 202.5L-181.5 187.9zM-119 175.8L-106.8 190L-121 202.2L-133.2 188zM-71 176.2L-59.2 190L-73 201.8L-84.8 188zM-23 176.6L-11.6 190L-25 201.4L-36.4 188zM24.9 177L36 189.9L23.1 201L12 188.1zM72.9 177.3L83.7 189.9L71.1 200.7L60.3 188.1zM120.9 177.7L131.3 189.9L119.1 200.3L108.7 188.1zM168.9 178.1L178.9 189.9L167.1 199.9L157.1 188.1zM216.8 178.5L226.5 189.8L215.2 199.5L205.5 188.2zM264.8 178.9L274.1 189.8L263.2 199.1L253.9 188.2zM312.8 179.2L321.8 189.8L311.2 198.8L302.2 188.2zM360.7 179.6L369.4 189.7L359.3 198.4L350.6 188.3zM408.7 180L417 189.7L407.3 198L399 188.3zM456.7 180.3L464.7 189.7L455.3 197.7L447.3 188.3zM504.7 180.6L512.4 189.7L503.3 197.4L495.6 188.3zM552.6 180.9L560.1 189.6L551.4 197.1L543.9 188.4zM600.6 181.2L607.8 189.6L599.4 196.8L592.2 188.4zM648.6 181.5L655.5 189.6L647.4 196.5L640.5 188.4zM696.6 181.8L703.2 189.6L695.4 196.2L688.8 188.4zM744.5 182L751 189.5L743.5 196L737 188.5zM792.5 182.3L798.7 189.5L791.5 195.7L785.3 188.5zM840.5 182.5L846.5 189.5L839.5 195.5L833.5 188.5zM888.5 182.8L894.2 189.5L887.5 195.2L881.8 188.5zM936.5 183L942 189.5L935.5 195L930 188.5zM984.5 183.3L989.7 189.5L983.5 194.7L978.3 188.5zM-958.3 194.3L-938.3 217.7L-961.7 237.7L-981.7 214.3zM-910.3 194.7L-890.7 217.7L-913.7 237.3L-933.3 214.3zM-862.4 195.1L-843.1 217.6L-865.6 236.9L-884.9 214.4zM-814.4 195.5L-795.5 217.6L-817.6 236.5L-836.5 214.4zM-766.4 195.9L-747.9 217.6L-769.6 236.1L-788.1 214.4zM-718.5 196.3L-700.3 217.5L-721.5 235.7L-739.7 214.5zM-670.5 196.7L-652.7 217.5L-673.5 235.3L-691.3 214.5zM-622.5 197.1L-605.1 217.5L-625.5 234.9L-642.9 214.5zM-574.5 197.6L-557.6 217.5L-577.5 234.4L-594.4 214.5zM-526.6 198L-510 217.4L-529.4 234L-546 214.6zM-478.6 198.4L-462.4 217.4L-481.4 233.6L-497.6 214.6zM-430.6 198.8L-414.8 217.4L-433.4 233.2L-449.2 214.6zM-382.7 199.2L-367.2 217.3L-385.3 232.8L-400.8 214.7zM-334.7 199.6L-319.6 217.3L-337.3 232.4L-352.4 214.7zM-286.7 200L-272 217.3L-289.3 232L-304 214.7zM-238.8 200.5L-224.5 217.2L-241.2 231.5L-255.5 214.8zM-190.8 200.9L-176.9 217.2L-193.2 231.1L-207.1 214.8zM-142.8 201.3L-129.3 217.2L-145.2 230.7L-158.7 214.8zM-94.9 201.8L-81.8 217.1L-97.1 230.2L-110.2 214.9zM-46.9 202.2L-34.2 217.1L-49.1 229.8L-61.8 214.9zM1.1 202.6L13.4 217.1L-1.1 229.4L-13.4 214.9zM49 203L61 217L47 229L35 215zM97 203.3L108.7 217L95 228.7L83.3 215zM145 203.7L156.3 217L143 228.3L131.7 215zM192.9 204.1L203.9 216.9L191.1 227.9L180.1 215.1zM240.9 204.5L251.5 216.9L239.1 227.5L228.5 215.1zM288.9 204.8L299.2 216.9L287.1 227.2L276.8 215.1zM336.8 205.2L346.8 216.8L335.2 226.8L325.2 215.2zM384.8 205.6L394.4 216.8L383.2 226.4L373.6 215.2zM432.8 206L442 216.8L431.2 226L422 215.2zM480.8 206.4L489.6 216.8L479.2 225.6L470.4 215.2zM528.7 206.7L537.3 216.7L527.3 225.3L518.7 215.3zM576.7 207.1L584.9 216.7L575.3 224.9L567.1 215.3zM624.7 207.4L632.6 216.7L623.3 224.6L615.4 215.3zM672.7 207.7L680.3 216.7L671.3 224.3L663.7 215.3zM720.6 208L728 216.6L719.4 224L712 215.4zM768.6 208.3L775.7 216.6L767.4 223.7L760.3 215.4zM816.6 208.6L823.4 216.6L815.4 223.4L808.6 215.4zM864.6 208.9L871.1 216.6L863.4 223.1L856.9 215.4zM912.5 209.1L918.9 216.5L911.5 222.9L905.1 215.5zM960.5 209.4L966.6 216.5L959.5 222.6L953.4 215.5zM-934.2 220.2L-913.2 244.8L-937.8 265.8L-958.8 241.2zM-886.2 220.6L-865.6 244.8L-889.8 265.4L-910.4 241.2zM-838.3 221L-818 244.7L-841.7 265L-862 241.3zM-790.3 221.4L-770.4 244.7L-793.7 264.6L-813.6 241.3zM-742.3 221.8L-722.8 244.7L-745.7 264.2L-765.2 241.3zM-694.4 222.2L-675.2 244.6L-697.6 263.8L-716.8 241.4zM-646.4 222.6L-627.6 244.6L-649.6 263.4L-668.4 241.4zM-598.4 223L-580 244.6L-601.6 263L-620 241.4zM-550.5 223.5L-532.5 244.5L-553.5 262.5L-571.5 241.5zM-502.5 223.9L-484.9 244.5L-505.5 262.1L-523.1 241.5zM-454.5 224.3L-437.3 244.5L-457.5 261.7L-474.7 241.5zM-406.6 224.7L-389.7 244.4L-409.4 261.3L-426.3 241.6zM-358.6 225.1L-342.1 244.4L-361.4 260.9L-377.9 241.6zM-310.6 225.5L-294.5 244.4L-313.4 260.5L-329.5 241.6zM-262.7 225.9L-246.9 244.3L-265.3 260.1L-281.1 241.7zM-214.7 226.3L-199.3 244.3L-217.3 259.7L-232.7 241.7zM-166.7 226.7L-151.7 244.3L-169.3 259.3L-184.3 241.7zM-118.8 227.2L-104.2 244.2L-121.2 258.8L-135.8 241.8zM-70.8 227.6L-56.6 244.2L-73.2 258.4L-87.4 241.8zM-22.8 228L-9 244.2L-25.2 258L-39 241.8zM25.1 228.5L38.5 244.1L22.9 257.5L9.5 241.9zM73.1 228.9L86.1 244.1L70.9 257.1L57.9 241.9zM121.1 229.3L133.7 244.1L118.9 256.7L106.3 241.9zM169 229.7L181.3 244L167 256.3L154.7 242zM217 230.1L228.9 244L215 255.9L203.1 242zM265 230.4L276.6 244L263 255.6L251.4 242zM313 230.8L324.2 244L311 255.2L299.8 242zM360.9 231.2L371.8 243.9L359.1 254.8L348.2 242.1zM408.9 231.6L419.4 243.9L407.1 254.4L396.6 242.1zM456.9 232L467 243.9L455.1 254L445 242.1zM504.8 232.3L514.7 243.8L503.2 253.7L493.3 242.2zM552.8 232.7L562.3 243.8L551.2 253.3L541.7 242.2zM600.8 233.1L609.9 243.8L599.2 252.9L590.1 242.2zM648.7 233.5L657.5 243.7L647.3 252.5L638.5 242.3zM696.7 233.9L705.1 243.7L695.3 252.1L686.9 242.3zM744.7 234.2L752.8 243.7L743.3 251.8L735.2 242.3zM792.7 234.5L800.5 243.7L791.3 251.5L783.5 242.3zM840.6 234.8L848.2 243.6L839.4 251.2L831.8 242.4zM888.6 235.1L895.9 243.6L887.4 250.9L880.1 242.4zM936.6 235.4L943.6 243.6L935.4 250.6L928.4 242.4zM984.6 235.7L991.3 243.6L983.4 250.3L976.7 242.4zM-958.1 245.7L-935.7 271.9L-961.9 294.3L-984.3 268.1zM-910.1 246.1L-888.1 271.9L-913.9 293.9L-935.9 268.1zM-862.1 246.5L-840.5 271.9L-865.9 293.5L-887.5 268.1zM-814.2 246.9L-792.9 271.8L-817.8 293.1L-839.1 268.2zM-766.2 247.3L-745.3 271.8L-769.8 292.7L-790.7 268.2zM-718.2 247.7L-697.7 271.8L-721.8 292.3L-742.3 268.2zM-670.3 248.1L-650.1 271.7L-673.7 291.9L-693.9 268.3zM-622.3 248.5L-602.5 271.7L-625.7 291.5L-645.5 268.3zM-574.3 248.9L-554.9 271.7L-577.7 291.1L-597.1 268.3zM-526.4 249.4L-507.4 271.6L-529.6 290.6L-548.6 268.4zM-478.4 249.8L-459.8 271.6L-481.6 290.2L-500.2 268.4zM-430.4 250.2L-412.2 271.6L-433.6 289.8L-451.8 268.4zM-382.5 250.6L-364.6 271.5L-385.5 289.4L-403.4 268.5zM-334.5 251L-317 271.5L-337.5 289L-355 268.5zM-286.5 251.4L-269.4 271.5L-289.5 288.6L-306.6 268.5zM-238.6 251.8L-221.8 271.4L-241.4 288.2L-258.2 268.6zM-190.6 252.2L-174.2 271.4L-193.4 287.8L-209.8 268.6zM-142.6 252.6L-126.6 271.4L-145.4 287.4L-161.4 268.6zM-94.7 253L-79 271.3L-97.3 287L-113 268.7zM-46.7 253.4L-31.4 271.3L-49.3 286.6L-64.6 268.7zM1.3 253.9L16.1 271.3L-1.3 286.1L-16.1 268.7zM49.2 254.3L63.7 271.2L46.8 285.7L32.3 268.8zM97.2 254.7L111.3 271.2L94.8 285.3L80.7 268.8zM145.2 255.2L158.8 271.2L142.8 284.8L129.2 268.8zM193.1 255.6L206.4 271.1L190.9 284.4L177.6 268.9zM241.1 256L254 271.1L238.9 284L226 268.9zM289.1 256.4L301.6 271.1L286.9 283.6L274.4 268.9zM337 256.8L349.2 271L335 283.2L322.8 269zM385 257.2L396.8 271L383 282.8L371.2 269zM433 257.6L444.4 271L431 282.4L419.6 269zM480.9 257.9L492.1 270.9L479.1 282.1L467.9 269.1zM528.9 258.3L539.7 270.9L527.1 281.7L516.3 269.1zM576.9 258.7L587.3 270.9L575.1 281.3L564.7 269.1zM624.9 259.1L634.9 270.9L623.1 280.9L613.1 269.1zM672.8 259.5L682.5 270.8L671.2 280.5L661.5 269.2zM720.8 259.8L730.2 270.8L719.2 280.2L709.8 269.2zM768.8 260.2L777.8 270.8L767.2 279.8L758.2 269.2zM816.7 260.6L825.4 270.7L815.3 279.4L806.6 269.3zM864.7 261L873 270.7L863.3 279L855 269.3zM912.7 261.3L920.7 270.7L911.3 278.7L903.3 269.3zM960.7 261.6L968.4 270.7L959.3 278.4L951.6 269.3zM-934 271.6L-910.6 299L-938 322.4L-961.4 295zM-886 272L-863 299L-890 322L-913 295zM-838.1 272.4L-815.4 298.9L-841.9 321.6L-864.6 295.1zM-790.1 272.8L-767.8 298.9L-793.9 321.2L-816.2 295.1zM-742.1 273.2L-720.2 298.9L-745.9 320.8L-767.8 295.1zM-694.2 273.6L-672.6 298.8L-697.8 320.4L-719.4 295.2zM-646.2 274L-625 298.8L-649.8 320L-671 295.2zM-598.2 274.4L-577.4 298.8L-601.8 319.6L-622.6 295.2zM-550.3 274.8L-529.8 298.7L-553.7 319.2L-574.2 295.3zM-502.3 275.3L-482.3 298.7L-505.7 318.7L-525.7 295.3zM-454.3 275.7L-434.7 298.7L-457.7 318.3L-477.3 295.3zM-406.4 276.1L-387.1 298.6L-409.6 317.9L-428.9 295.4zM-358.4 276.5L-339.5 298.6L-361.6 317.5L-380.5 295.4zM-310.4 276.9L-291.9 298.6L-313.6 317.1L-332.1 295.4zM-262.4 277.3L-244.3 298.6L-265.6 316.7L-283.7 295.4zM-214.5 277.7L-196.7 298.5L-217.5 316.3L-235.3 295.5zM-166.5 278.1L-149.1 298.5L-169.5 315.9L-186.9 295.5zM-118.5 278.5L-101.5 298.5L-121.5 315.5L-138.5 295.5zM-70.6 278.9L-53.9 298.4L-73.4 315.1L-90.1 295.6zM-22.6 279.3L-6.3 298.4L-25.4 314.7L-41.7 295.6zM25.4 279.8L41.2 298.4L22.6 314.2L6.8 295.6zM73.3 280.2L88.8 298.3L70.7 313.8L55.2 295.7zM121.3 280.6L136.4 298.3L118.7 313.4L103.6 295.7zM169.3 281L184 298.3L166.7 313L152 295.7zM217.2 281.4L231.6 298.2L214.8 312.6L200.4 295.8zM265.2 281.9L279.1 298.2L262.8 312.1L248.9 295.8zM313.2 282.3L326.7 298.2L310.8 311.7L297.3 295.8zM361.1 282.7L374.3 298.1L358.9 311.3L345.7 295.9zM409.1 283.2L421.8 298.1L406.9 310.8L394.2 295.9zM457.1 283.6L469.4 298.1L454.9 310.4L442.6 295.9zM505 283.9L517.1 298L503 310.1L490.9 296zM553 284.3L564.7 298L551 309.7L539.3 296zM601 284.7L612.3 298L599 309.3L587.7 296zM648.9 285.1L659.9 297.9L647.1 308.9L636.1 296.1zM696.9 285.4L707.6 297.9L695.1 308.6L684.4 296.1zM744.9 285.8L755.2 297.9L743.1 308.2L732.8 296.1zM792.9 286.2L802.8 297.9L791.1 307.8L781.2 296.1zM840.8 286.6L850.4 297.8L839.2 307.4L829.6 296.2zM888.8 287L898 297.8L887.2 307L878 296.2zM936.8 287.3L945.7 297.8L935.2 306.7L926.3 296.2zM984.7 287.7L993.3 297.7L983.3 306.3L974.7 296.3zM-957.9 297.3L-933.3 326.1L-962.1 350.7L-986.7 321.9zM-909.9 297.7L-885.7 326.1L-914.1 350.3L-938.3 321.9zM-862 298L-838 326L-866 350L-890 322zM-814 298.3L-790.3 326L-818 349.7L-841.7 322zM-766 298.7L-742.7 326L-770 349.3L-793.3 322zM-718 299.1L-695.1 326L-722 348.9L-744.9 322zM-670.1 299.5L-647.5 325.9L-673.9 348.5L-696.5 322.1zM-622.1 299.9L-599.9 325.9L-625.9 348.1L-648.1 322.1zM-574.1 300.3L-552.3 325.9L-577.9 347.7L-599.7 322.1zM-526.2 300.7L-504.7 325.8L-529.8 347.3L-551.3 322.2zM-478.2 301.2L-457.2 325.8L-481.8 346.8L-502.8 322.2zM-430.2 301.6L-409.6 325.8L-433.8 346.4L-454.4 322.2zM-382.3 302L-362 325.7L-385.7 346L-406 322.3zM-334.3 302.4L-314.4 325.7L-337.7 345.6L-357.6 322.3zM-286.3 302.8L-266.8 325.7L-289.7 345.2L-309.2 322.3zM-238.4 303.2L-219.2 325.6L-241.6 344.8L-260.8 322.4zM-190.4 303.6L-171.6 325.6L-193.6 344.4L-212.4 322.4zM-142.4 304L-124 325.6L-145.6 344L-164 322.4zM-94.5 304.4L-76.4 325.5L-97.5 343.6L-115.6 322.5zM-46.5 304.8L-28.8 325.5L-49.5 343.2L-67.2 322.5zM1.5 305.2L18.8 325.5L-1.5 342.8L-18.8 322.5zM49.4 305.7L66.3 325.4L46.6 342.3L29.7 322.6zM97.4 306.1L113.9 325.4L94.6 341.9L78.1 322.6zM145.4 306.5L161.5 325.4L142.6 341.5L126.5 322.6zM193.3 306.9L209.1 325.3L190.7 341.1L174.9 322.7zM241.3 307.3L256.7 325.3L238.7 340.7L223.3 322.7zM289.3 307.7L304.3 325.3L286.7 340.3L271.7 322.7zM337.2 308.1L351.9 325.2L334.8 339.9L320.1 322.8zM385.2 308.6L399.4 325.2L382.8 339.4L368.6 322.8zM433.2 309L447 325.2L430.8 339L417 322.8zM481.1 309.4L494.6 325.1L478.9 338.6L465.4 322.9zM529.1 309.9L542.1 325.1L526.9 338.1L513.9 322.9zM577.1 310.3L589.7 325.1L574.9 337.7L562.3 322.9zM625 310.7L637.3 325L623 337.3L610.7 323zM673 311L685 325L671 337L659 323zM721 311.4L732.6 325L719 336.6L707.4 323zM769 311.8L780.2 325L767 336.2L755.8 323zM816.9 312.2L827.8 324.9L815.1 335.8L804.2 323.1zM864.9 312.5L875.5 324.9L863.1 335.5L852.5 323.1zM912.9 312.9L923.1 324.9L911.1 335.1L900.9 323.1zM960.8 313.3L970.7 324.8L959.2 334.7L949.3 323.2zM-933.8 323.4L-908.4 353.2L-938.2 378.6L-963.6 348.8zM-885.9 323.7L-860.7 353.1L-890.1 378.3L-915.3 348.9zM-837.9 324.1L-813.1 353.1L-842.1 377.9L-866.9 348.9zM-789.9 324.4L-765.4 353.1L-794.1 377.6L-818.6 348.9zM-741.9 324.8L-717.8 353.1L-746.1 377.2L-770.2 348.9zM-694 325.1L-670.1 353L-698 376.9L-721.9 349zM-646 325.4L-622.4 353L-650 376.6L-673.6 349zM-598 325.8L-574.8 353L-602 376.2L-625.2 349zM-550.1 326.2L-527.2 352.9L-553.9 375.8L-576.8 349.1zM-502.1 326.6L-479.6 352.9L-505.9 375.4L-528.4 349.1zM-454.1 327.1L-432.1 352.9L-457.9 374.9L-479.9 349.1zM-406.1 327.5L-384.5 352.9L-409.9 374.5L-431.5 349.1zM-358.2 327.9L-336.9 352.8L-361.8 374.1L-383.1 349.2zM-310.2 328.3L-289.3 352.8L-313.8 373.7L-334.7 349.2zM-262.2 328.7L-241.7 352.8L-265.8 373.3L-286.3 349.2zM-214.3 329.1L-194.1 352.7L-217.7 372.9L-237.9 349.3zM-166.3 329.5L-146.5 352.7L-169.7 372.5L-189.5 349.3zM-118.3 329.9L-98.9 352.7L-121.7 372.1L-141.1 349.3zM-70.4 330.3L-51.3 352.6L-73.6 371.7L-92.7 349.4zM-22.4 330.7L-3.7 352.6L-25.6 371.3L-44.3 349.4zM25.6 331.1L43.9 352.6L22.4 370.9L4.1 349.4zM73.5 331.6L91.4 352.5L70.5 370.4L52.6 349.5zM121.5 332L139 352.5L118.5 370L101 349.5zM169.5 332.4L186.6 352.5L166.5 369.6L149.4 349.5zM217.4 332.8L234.2 352.4L214.6 369.2L197.8 349.6zM265.4 333.2L281.8 352.4L262.6 368.8L246.2 349.6zM313.4 333.6L329.4 352.4L310.6 368.4L294.6 349.6zM361.3 334L377 352.3L358.7 368L343 349.7zM409.3 334.4L424.6 352.3L406.7 367.6L391.4 349.7zM457.3 334.8L472.2 352.3L454.7 367.2L439.8 349.7zM505.2 335.3L519.7 352.2L502.8 366.7L488.3 349.8zM553.2 335.7L567.3 352.2L550.8 366.3L536.7 349.8zM601.2 336.1L614.9 352.2L598.8 365.9L585.1 349.8zM649.1 336.6L662.4 352.1L646.9 365.4L633.6 349.9zM697.1 337L710 352.1L694.9 365L682 349.9zM745.1 337.4L757.6 352.1L742.9 364.6L730.4 349.9zM793 337.8L805.2 352L791 364.2L778.8 350zM841 338.2L852.8 352L839 363.8L827.2 350zM889 338.5L900.5 352L887 363.5L875.5 350zM937 338.9L948.1 352L935 363.1L923.9 350zM984.9 339.3L995.7 351.9L983.1 362.7L972.3 350.1zM-957.7 349.2L-931.2 380.3L-962.3 406.8L-988.8 375.7zM-909.8 349.5L-883.5 380.2L-914.2 406.5L-940.5 375.8zM-861.8 349.8L-835.8 380.2L-866.2 406.2L-892.2 375.8zM-813.8 350.2L-788.2 380.2L-818.2 405.8L-843.8 375.8zM-765.8 350.5L-740.5 380.2L-770.2 405.5L-795.5 375.8zM-717.9 350.9L-692.9 380.1L-722.1 405.1L-747.1 375.9zM-669.9 351.2L-645.2 380.1L-674.1 404.8L-698.8 375.9zM-621.9 351.5L-597.5 380.1L-626.1 404.5L-650.5 375.9zM-573.9 351.9L-549.9 380.1L-578.1 404.1L-602.1 375.9zM-526 352.2L-502.2 380L-530 403.8L-553.8 376zM-478 352.5L-454.5 380L-482 403.5L-505.5 376zM-430 353L-407 380L-434 403L-457 376zM-382.1 353.4L-359.4 379.9L-385.9 402.6L-408.6 376.1zM-334.1 353.8L-311.8 379.9L-337.9 402.2L-360.2 376.1zM-286.1 354.2L-264.2 379.9L-289.9 401.8L-311.8 376.1zM-238.2 354.6L-216.6 379.8L-241.8 401.4L-263.4 376.2zM-190.2 355L-169 379.8L-193.8 401L-215 376.2zM-142.2 355.4L-121.4 379.8L-145.8 400.6L-166.6 376.2zM-94.3 355.8L-73.8 379.7L-97.7 400.2L-118.2 376.3zM-46.3 356.2L-26.2 379.7L-49.7 399.8L-69.8 376.3zM1.7 356.6L21.4 379.7L-1.7 399.4L-21.4 376.3zM49.6 357L69 379.6L46.4 399L27 376.4zM97.6 357.5L116.5 379.6L94.4 398.5L75.5 376.4zM145.6 357.9L164.1 379.6L142.4 398.1L123.9 376.4zM193.6 358.3L211.7 379.6L190.4 397.7L172.3 376.4zM241.5 358.7L259.3 379.5L238.5 397.3L220.7 376.5zM289.5 359.1L306.9 379.5L286.5 396.9L269.1 376.5zM337.5 359.5L354.5 379.5L334.5 396.5L317.5 376.5zM385.4 359.9L402.1 379.4L382.6 396.1L365.9 376.6zM433.4 360.3L449.7 379.4L430.6 395.7L414.3 376.6zM481.4 360.7L497.3 379.4L478.6 395.3L462.7 376.6zM529.3 361.1L544.9 379.3L526.7 394.9L511.1 376.7zM577.3 361.5L592.5 379.3L574.7 394.5L559.5 376.7zM625.3 362L640 379.3L622.7 394L608 376.7zM673.2 362.4L687.6 379.2L670.8 393.6L656.4 376.8zM721.2 362.8L735.2 379.2L718.8 393.2L704.8 376.8zM769.2 363.3L782.7 379.2L766.8 392.7L753.3 376.8zM817.1 363.7L830.3 379.1L814.9 392.3L801.7 376.9zM865.1 364.1L877.9 379.1L862.9 391.9L850.1 376.9zM913.1 364.5L925.5 379.1L910.9 391.5L898.5 376.9zM961 364.9L973.1 379L959 391.1L946.9 377zM-933.7 375.3L-906.3 407.3L-938.3 434.7L-965.7 402.7zM-885.7 375.6L-858.6 407.3L-890.3 434.4L-917.4 402.7zM-837.7 375.9L-810.9 407.3L-842.3 434.1L-869.1 402.7zM-789.7 376.3L-763.3 407.3L-794.3 433.7L-820.7 402.7zM-741.8 376.6L-715.6 407.2L-746.2 433.4L-772.4 402.8zM-693.8 376.9L-667.9 407.2L-698.2 433.1L-724.1 402.8zM-645.8 377.3L-620.3 407.2L-650.2 432.7L-675.7 402.8zM-597.8 377.6L-572.6 407.2L-602.2 432.4L-627.4 402.8zM-549.9 378L-525 407.1L-554.1 432L-579 402.9zM-501.9 378.3L-477.3 407.1L-506.1 431.7L-530.7 402.9zM-453.9 378.6L-429.6 407.1L-458.1 431.4L-482.4 402.9zM-406 379L-382 407L-410 431L-434 403zM-358 379.3L-334.3 407L-362 430.7L-385.7 403zM-310 379.7L-286.7 407L-314 430.3L-337.3 403zM-262 380.1L-239.1 407L-266 429.9L-288.9 403zM-214.1 380.5L-191.5 406.9L-217.9 429.5L-240.5 403.1zM-166.1 380.9L-143.9 406.9L-169.9 429.1L-192.1 403.1zM-118.1 381.3L-96.3 406.9L-121.9 428.7L-143.7 403.1zM-70.2 381.7L-48.7 406.8L-73.8 428.3L-95.3 403.2zM-22.2 382.1L-1.1 406.8L-25.8 427.9L-46.9 403.2zM25.8 382.5L46.5 406.8L22.2 427.5L1.5 403.2zM73.7 382.9L94.1 406.7L70.3 427.1L49.9 403.3zM121.7 383.4L141.6 406.7L118.3 426.6L98.4 403.3zM169.7 383.8L189.2 406.7L166.3 426.2L146.8 403.3zM217.6 384.2L236.8 406.6L214.4 425.8L195.2 403.4zM265.6 384.6L284.4 406.6L262.4 425.4L243.6 403.4zM313.6 385L332 406.6L310.4 425L292 403.4zM361.5 385.4L379.6 406.5L358.5 424.6L340.4 403.5zM409.5 385.8L427.2 406.5L406.5 424.2L388.8 403.5zM457.5 386.2L474.8 406.5L454.5 423.8L437.2 403.5zM505.4 386.6L522.4 406.4L502.6 423.4L485.6 403.6zM553.4 387L570 406.4L550.6 423L534 403.6zM601.4 387.4L617.6 406.4L598.6 422.6L582.4 403.6zM649.3 387.9L665.1 406.3L646.7 422.1L630.9 403.7zM697.3 388.3L712.7 406.3L694.7 421.7L679.3 403.7zM745.3 388.7L760.3 406.3L742.7 421.3L727.7 403.7zM793.3 389.1L807.9 406.3L790.7 420.9L776.1 403.7zM841.2 389.5L855.5 406.2L838.8 420.5L824.5 403.8zM889.2 390L903 406.2L886.8 420L873 403.8zM937.1 390.4L950.6 406.1L934.9 419.6L921.4 403.9zM985.1 390.8L998.2 406.1L982.9 419.2L969.8 403.9zM-957.6 401.8L-929.8 434.4L-962.4 462.2L-990.2 429.6zM-909.6 401.9L-881.9 434.4L-914.4 462.1L-942.1 429.6zM-861.6 402L-834 434.4L-866.4 462L-894 429.6zM-813.7 402.2L-786.2 434.3L-818.3 461.8L-845.8 429.7zM-765.7 402.4L-738.4 434.3L-770.3 461.6L-797.6 429.7zM-717.7 402.7L-690.7 434.3L-722.3 461.3L-749.3 429.7zM-669.7 403L-643 434.3L-674.3 461L-701 429.7zM-621.7 403.4L-595.4 434.3L-626.3 460.6L-652.6 429.7zM-573.8 403.7L-547.7 434.2L-578.2 460.3L-604.3 429.8zM-525.8 404L-500 434.2L-530.2 460L-556 429.8zM-477.8 404.4L-452.4 434.2L-482.2 459.6L-507.6 429.8zM-429.9 404.7L-404.7 434.1L-434.1 459.3L-459.3 429.9zM-381.9 405.1L-357.1 434.1L-386.1 458.9L-410.9 429.9zM-333.9 405.4L-309.4 434.1L-338.1 458.6L-362.6 429.9zM-285.9 405.7L-261.7 434.1L-290.1 458.3L-314.3 429.9zM-238 406.1L-214.1 434L-242 457.9L-265.9 430zM-190 406.4L-166.4 434L-194 457.6L-217.6 430zM-142 406.8L-118.8 434L-146 457.2L-169.2 430zM-94 407.2L-71.2 434L-98 456.8L-120.8 430zM-46.1 407.6L-23.6 433.9L-49.9 456.4L-72.4 430.1zM1.9 408L24 433.9L-1.9 456L-24 430.1zM49.9 408.4L71.6 433.9L46.1 455.6L24.4 430.1zM97.8 408.8L119.2 433.8L94.2 455.2L72.8 430.2zM145.8 409.3L166.7 433.8L142.2 454.7L121.3 430.2zM193.8 409.7L214.3 433.8L190.2 454.3L169.7 430.2zM241.7 410.1L261.9 433.7L238.3 453.9L218.1 430.3zM289.7 410.5L309.5 433.7L286.3 453.5L266.5 430.3zM337.7 410.9L357.1 433.7L334.3 453.1L314.9 430.3zM385.6 411.3L404.7 433.6L382.4 452.7L363.3 430.4zM433.6 411.7L452.3 433.6L430.4 452.3L411.7 430.4zM481.6 412.1L499.9 433.6L478.4 451.9L460.1 430.4zM529.5 412.5L547.5 433.5L526.5 451.5L508.5 430.5zM577.5 412.9L595.1 433.5L574.5 451.1L556.9 430.5zM625.5 413.3L642.7 433.5L622.5 450.7L605.3 430.5zM673.4 413.8L690.2 433.4L670.6 450.2L653.8 430.6zM721.4 414.2L737.8 433.4L718.6 449.8L702.2 430.6zM769.4 414.6L785.4 433.4L766.6 449.4L750.6 430.6zM817.3 415L833 433.3L814.7 449L799 430.7zM865.3 415.4L880.6 433.3L862.7 448.6L847.4 430.7zM913.3 415.8L928.2 433.3L910.7 448.2L895.8 430.7zM961.2 416.2L975.8 433.2L958.8 447.8L944.2 430.8zM-933.6 428.4L-905.4 461.4L-938.4 489.6L-966.6 456.6zM-885.6 428.5L-857.5 461.4L-890.4 489.5L-918.5 456.6zM-837.6 428.7L-809.7 461.4L-842.4 489.3L-870.3 456.6zM-789.6 428.8L-761.8 461.4L-794.4 489.2L-822.2 456.6zM-741.6 428.9L-713.9 461.4L-746.4 489.1L-774.1 456.6zM-693.6 429.1L-666.1 461.4L-698.4 488.9L-725.9 456.6zM-645.7 429.2L-618.2 461.3L-650.3 488.8L-677.8 456.7zM-597.7 429.5L-570.5 461.3L-602.3 488.5L-629.5 456.7zM-549.7 429.8L-522.8 461.3L-554.3 488.2L-581.2 456.7zM-501.7 430.1L-475.1 461.3L-506.3 487.9L-532.9 456.7zM-453.8 430.5L-427.5 461.2L-458.2 487.5L-484.5 456.8zM-405.8 430.8L-379.8 461.2L-410.2 487.2L-436.2 456.8zM-357.8 431.2L-332.2 461.2L-362.2 486.8L-387.8 456.8zM-309.8 431.5L-284.5 461.2L-314.2 486.5L-339.5 456.8zM-261.9 431.8L-236.8 461.1L-266.1 486.2L-291.2 456.9zM-213.9 432.2L-189.2 461.1L-218.1 485.8L-242.8 456.9zM-165.9 432.5L-141.5 461.1L-170.1 485.5L-194.5 456.9zM-117.9 432.8L-93.8 461.1L-122.1 485.2L-146.2 456.9zM-70 433.2L-46.2 461L-74 484.8L-97.8 457zM-22 433.5L1.5 461L-26 484.5L-49.5 457zM26 433.9L49.1 461L22 484.1L-1.1 457zM73.9 434.3L96.7 460.9L70.1 483.7L47.3 457.1zM121.9 434.7L144.3 460.9L118.1 483.3L95.7 457.1zM169.9 435.2L191.8 460.9L166.1 482.8L144.2 457.1zM217.8 435.6L239.4 460.8L214.2 482.4L192.6 457.2zM265.8 436L287 460.8L262.2 482L241 457.2zM313.8 436.4L334.6 460.8L310.2 481.6L289.4 457.2zM361.7 436.8L382.2 460.7L358.3 481.2L337.8 457.3zM409.7 437.2L429.8 460.7L406.3 480.8L386.2 457.3zM457.7 437.6L477.4 460.7L454.3 480.4L434.6 457.3zM505.7 438L525 460.7L502.3 480L483 457.3zM553.6 438.4L572.6 460.6L550.4 479.6L531.4 457.4zM601.6 438.8L620.2 460.6L598.4 479.2L579.8 457.4zM649.6 439.2L667.8 460.6L646.4 478.8L628.2 457.4zM697.5 439.7L715.3 460.5L694.5 478.3L676.7 457.5zM745.5 440.1L762.9 460.5L742.5 477.9L725.1 457.5zM793.5 440.5L810.5 460.5L790.5 477.5L773.5 457.5zM841.4 440.9L858.1 460.4L838.6 477.1L821.9 457.6zM889.4 441.3L905.7 460.4L886.6 476.7L870.3 457.6zM937.4 441.7L953.3 460.4L934.6 476.3L918.7 457.6zM985.3 442.1L1000.9 460.3L982.7 475.9L967.1 457.7zM-957.5 454.9L-928.9 488.5L-962.5 517.1L-991.1 483.5zM-909.6 455L-881 488.4L-914.4 517L-943 483.6zM-861.6 455.1L-833.1 488.4L-866.4 516.9L-894.9 483.6zM-813.6 455.3L-785.3 488.4L-818.4 516.7L-846.7 483.6zM-765.6 455.4L-737.4 488.4L-770.4 516.6L-798.6 483.6zM-717.6 455.6L-689.6 488.4L-722.4 516.4L-750.4 483.6zM-669.6 455.7L-641.7 488.4L-674.4 516.3L-702.3 483.6zM-621.6 455.8L-593.8 488.4L-626.4 516.2L-654.2 483.6zM-573.6 456L-546 488.4L-578.4 516L-606 483.6zM-525.6 456.1L-498.1 488.4L-530.4 515.9L-557.9 483.6zM-477.7 456.3L-450.3 488.3L-482.3 515.7L-509.7 483.7zM-429.7 456.6L-402.6 488.3L-434.3 515.4L-461.4 483.7zM-381.7 456.9L-354.9 488.3L-386.3 515.1L-413.1 483.7zM-333.7 457.2L-307.2 488.3L-338.3 514.8L-364.8 483.7zM-285.8 457.6L-259.6 488.2L-290.2 514.4L-316.4 483.8zM-237.8 457.9L-211.9 488.2L-242.2 514.1L-268.1 483.8zM-189.8 458.3L-164.3 488.2L-194.2 513.7L-219.7 483.8zM-141.8 458.6L-116.6 488.2L-146.2 513.4L-171.4 483.8zM-93.9 458.9L-68.9 488.1L-98.1 513.1L-123.1 483.9zM-45.9 459.3L-21.3 488.1L-50.1 512.7L-74.7 483.9zM2.1 459.6L26.4 488.1L-2.1 512.4L-26.4 483.9zM50.1 459.9L74.1 488.1L45.9 512.1L21.9 483.9zM98 460.3L121.7 488L94 511.7L70.3 484zM146 460.6L169.4 488L142 511.4L118.6 484zM194 461.1L216.9 488L190 510.9L167.1 484zM241.9 461.5L264.5 487.9L238.1 510.5L215.5 484.1zM289.9 461.9L312.1 487.9L286.1 510.1L263.9 484.1zM337.9 462.3L359.7 487.9L334.1 509.7L312.3 484.1zM385.8 462.7L407.3 487.8L382.2 509.3L360.7 484.2zM433.8 463.1L454.9 487.8L430.2 508.9L409.1 484.2zM481.8 463.5L502.5 487.8L478.2 508.5L457.5 484.2zM529.7 463.9L550.1 487.7L526.3 508.1L505.9 484.3zM577.7 464.3L597.7 487.7L574.3 507.7L554.3 484.3zM625.7 464.7L645.3 487.7L622.3 507.3L602.7 484.3zM673.6 465.1L692.9 487.6L670.4 506.9L651.1 484.4zM721.6 465.5L740.5 487.6L718.4 506.5L699.5 484.4zM769.6 466L788 487.6L766.4 506L748 484.4zM817.5 466.4L835.6 487.5L814.5 505.6L796.4 484.5zM865.5 466.8L883.2 487.5L862.5 505.2L844.8 484.5zM913.5 467.2L930.8 487.5L910.5 504.8L893.2 484.5zM961.4 467.6L978.4 487.4L958.6 504.4L941.6 484.6zM-933.5 481.5L-904.5 515.5L-938.5 544.5L-967.5 510.5zM-885.5 481.6L-856.6 515.5L-890.5 544.4L-919.4 510.5zM-837.5 481.8L-808.8 515.5L-842.5 544.2L-871.2 510.5zM-789.6 481.9L-760.9 515.4L-794.4 544.1L-823.1 510.6zM-741.6 482L-713 515.4L-746.4 544L-775 510.6zM-693.6 482.2L-665.2 515.4L-698.4 543.8L-726.8 510.6zM-645.6 482.3L-617.3 515.4L-650.4 543.7L-678.7 510.6zM-597.6 482.5L-569.5 515.4L-602.4 543.5L-630.5 510.6zM-549.6 482.6L-521.6 515.4L-554.4 543.4L-582.4 510.6zM-501.6 482.8L-473.8 515.4L-506.4 543.2L-534.2 510.6zM-453.6 482.9L-425.9 515.4L-458.4 543.1L-486.1 510.6zM-405.6 483L-378 515.4L-410.4 543L-438 510.6zM-357.7 483.2L-330.2 515.3L-362.3 542.8L-389.8 510.7zM-309.7 483.3L-282.3 515.3L-314.3 542.7L-341.7 510.7zM-261.7 483.7L-234.7 515.3L-266.3 542.3L-293.3 510.7zM-213.7 484L-187 515.3L-218.3 542L-245 510.7zM-165.7 484.3L-139.3 515.3L-170.3 541.7L-196.7 510.7zM-117.8 484.7L-91.7 515.2L-122.2 541.3L-148.3 510.8zM-69.8 485L-44 515.2L-74.2 541L-100 510.8zM-21.8 485.4L3.6 515.2L-26.2 540.6L-51.6 510.8zM26.1 485.7L51.3 515.1L21.9 540.3L-3.3 510.9zM74.1 486L99 515.1L69.9 540L45 510.9zM122.1 486.4L146.6 515.1L117.9 539.6L93.4 510.9zM170.1 486.7L194.3 515.1L165.9 539.3L141.7 510.9zM218 487L242 515L214 539L190 511zM266 487.4L289.6 515L262 538.6L238.4 511zM314 487.8L337.2 515L310 538.2L286.8 511zM362 488.2L384.8 515L358 537.8L335.2 511zM409.9 488.6L432.4 514.9L406.1 537.4L383.6 511.1zM457.9 489L480 514.9L454.1 537L432 511.1zM505.9 489.4L527.6 514.9L502.1 536.6L480.4 511.1zM553.8 489.8L575.2 514.8L550.2 536.2L528.8 511.2zM601.8 490.2L622.8 514.8L598.2 535.8L577.2 511.2zM649.8 490.6L670.4 514.8L646.2 535.4L625.6 511.2zM697.7 491L718 514.7L694.3 535L674 511.3zM745.7 491.4L765.6 514.7L742.3 534.6L722.4 511.3zM793.7 491.9L813.1 514.7L790.3 534.1L770.9 511.3zM841.6 492.3L860.7 514.6L838.4 533.7L819.3 511.4zM889.6 492.7L908.3 514.6L886.4 533.3L867.7 511.4zM937.6 493.1L955.9 514.6L934.4 532.9L916.1 511.4zM985.5 493.5L1003.5 514.5L982.5 532.5L964.5 511.5zM-957.5 508L-928 542.5L-962.5 572L-992 537.5zM-909.5 508.1L-880.1 542.5L-914.5 571.9L-943.9 537.5zM-861.5 508.2L-832.2 542.5L-866.5 571.8L-895.8 537.5zM-813.5 508.4L-784.4 542.5L-818.5 571.6L-847.6 537.5zM-765.5 508.5L-736.5 542.5L-770.5 571.5L-799.5 537.5zM-717.5 508.7L-688.7 542.5L-722.5 571.3L-751.3 537.5zM-669.5 508.8L-640.8 542.5L-674.5 571.2L-703.2 537.5zM-621.6 508.9L-592.9 542.4L-626.4 571.1L-655.1 537.6zM-573.6 509.1L-545.1 542.4L-578.4 570.9L-606.9 537.6zM-525.6 509.2L-497.2 542.4L-530.4 570.8L-558.8 537.6zM-477.6 509.4L-449.4 542.4L-482.4 570.6L-510.6 537.6zM-429.6 509.5L-401.5 542.4L-434.4 570.5L-462.5 537.6zM-381.6 509.7L-353.7 542.4L-386.4 570.3L-414.3 537.6zM-333.6 509.8L-305.8 542.4L-338.4 570.2L-366.2 537.6zM-285.6 509.9L-257.9 542.4L-290.4 570.1L-318.1 537.6zM-237.6 510.1L-210.1 542.4L-242.4 569.9L-269.9 537.6zM-189.7 510.2L-162.2 542.3L-194.3 569.8L-221.8 537.7zM-141.7 510.4L-114.4 542.3L-146.3 569.6L-173.6 537.7zM-93.7 510.8L-66.8 542.3L-98.3 569.2L-125.2 537.7zM-45.7 511.1L-19.1 542.3L-50.3 568.9L-76.9 537.7zM2.2 511.5L28.5 542.2L-2.2 568.5L-28.5 537.8zM50.2 511.8L76.2 542.2L45.8 568.2L19.8 537.8zM98.2 512.1L123.9 542.2L93.8 567.9L68.1 537.8zM146.2 512.5L171.5 542.2L141.8 567.5L116.5 537.8zM194.1 512.8L219.2 542.1L189.9 567.2L164.8 537.9zM242.1 513.1L266.9 542.1L237.9 566.9L213.1 537.9zM290.1 513.5L314.5 542.1L285.9 566.5L261.5 537.9zM338.1 513.8L362.2 542.1L333.9 566.2L309.8 537.9zM386 514.2L409.8 542L382 565.8L358.2 538zM434 514.5L457.5 542L430 565.5L406.5 538zM482 514.9L505.1 542L478 565.1L454.9 538zM529.9 515.3L552.7 541.9L526.1 564.7L503.3 538.1zM577.9 515.7L600.3 541.9L574.1 564.3L551.7 538.1zM625.9 516.1L647.9 541.9L622.1 563.9L600.1 538.1zM673.8 516.5L695.5 541.8L670.2 563.5L648.5 538.2zM721.8 516.9L743.1 541.8L718.2 563.1L696.9 538.2zM769.8 517.3L790.7 541.8L766.2 562.7L745.3 538.2zM817.8 517.8L838.2 541.8L814.2 562.2L793.8 538.2zM865.7 518.2L885.8 541.7L862.3 561.8L842.2 538.3zM913.7 518.6L933.4 541.7L910.3 561.4L890.6 538.3zM961.7 519L981 541.7L958.3 561L939 538.3z"/>
<pattern id="grid" x="3" y="11" width="13" height="13" patternUnits="userSpaceOnUse"><path d="M0 0.5H13M0.5 0V13" stroke="#2e2e2e" stroke-width="1" fill="none"/></pattern>
<clipPath id="scr"><path d="M16.3 619.3V23a7.3 7.3 0 0 1 7.3-7.3H978.7a7.3 7.3 0 0 1 7.3 7.3V619.3z"/></clipPath>
<clipPath id="art"><rect x="543.8" y="388.6" width="362.2" height="204.6"/></clipPath>
<linearGradient id="gL" x1="0" x2="1" y1="0" y2="0"><stop offset="0" stop-color="#2a2a2a"/><stop offset="1" stop-color="#1a1a1a"/></linearGradient><linearGradient id="gR" x1="0" x2="1" y1="0" y2="0"><stop offset="0" stop-color="#1a1a1a"/><stop offset="1" stop-color="#2a2a2a"/></linearGradient><filter id="sh" x="-20%" y="-20%" width="140%" height="140%"><feGaussianBlur stdDeviation="2.2"/></filter>
<linearGradient id="hg" gradientUnits="userSpaceOnUse" x1="121.6" y1="-689.4" x2="-121.6" y2="689.4"><stop offset="0.1857" stop-color="#ffffff"/><stop offset="0.2000" stop-color="#ffffff"/><stop offset="0.2143" stop-color="#ffffff"/><stop offset="0.2286" stop-color="#ffffff"/><stop offset="0.2429" stop-color="#ffffff"/><stop offset="0.2571" stop-color="#ffffff"/><stop offset="0.2714" stop-color="#ffffff"/><stop offset="0.2857" stop-color="#ffffff"/><stop offset="0.3000" stop-color="#ffffff"/><stop offset="0.3143" stop-color="#ffffff"/><stop offset="0.3286" stop-color="#fefefe"/><stop offset="0.3429" stop-color="#fefefe"/><stop offset="0.3571" stop-color="#fefefe"/><stop offset="0.3714" stop-color="#fdfdfd"/><stop offset="0.3857" stop-color="#fdfdfd"/><stop offset="0.4000" stop-color="#fcfcfc"/><stop offset="0.4143" stop-color="#fbfbfb"/><stop offset="0.4286" stop-color="#fafafa"/><stop offset="0.4429" stop-color="#f9f9f9"/><stop offset="0.4571" stop-color="#f8f8f8"/><stop offset="0.4714" stop-color="#f7f7f7"/><stop offset="0.4857" stop-color="#f5f5f5"/><stop offset="0.5000" stop-color="#f4f4f4"/><stop offset="0.5143" stop-color="#f1f1f1"/><stop offset="0.5286" stop-color="#eeeeee"/><stop offset="0.5429" stop-color="#ebebeb"/><stop offset="0.5571" stop-color="#e7e7e7"/><stop offset="0.5714" stop-color="#e2e2e2"/><stop offset="0.5857" stop-color="#dddddd"/><stop offset="0.6000" stop-color="#d6d6d6"/><stop offset="0.6143" stop-color="#cecece"/><stop offset="0.6286" stop-color="#c5c5c5"/><stop offset="0.6429" stop-color="#bcbcbc"/><stop offset="0.6571" stop-color="#b2b2b2"/><stop offset="0.6714" stop-color="#a5a5a5"/><stop offset="0.6857" stop-color="#989898"/><stop offset="0.7000" stop-color="#8a8a8a"/><stop offset="0.7143" stop-color="#7b7b7b"/><stop offset="0.7286" stop-color="#6c6c6c"/><stop offset="0.7429" stop-color="#5c5c5c"/><stop offset="0.7571" stop-color="#4b4b4b"/><stop offset="0.7714" stop-color="#393939"/><stop offset="0.7857" stop-color="#282828"/><stop offset="0.8000" stop-color="#171717"/><stop offset="0.8143" stop-color="#070707"/><stop offset="0.8286" stop-color="#000000"/><stop offset="0.8429" stop-color="#000000"/></linearGradient>
</defs>
<rect width="1005" height="635" fill="#fff"/>
<path d="M0.4 635V27A27 27 0 0 1 27.4 0H977.6A27 27 0 0 1 1004.6 27V635z" fill="#b0b0b0"/>
<rect x="0" y="631.2" width="1005" height="4" fill="#c8c8c8"/>
<path d="M2.5 631.2L3.5 27A24 24 0 0 1 27.5 3H977.6A24 24 0 0 1 1001.6 27L1002.5 631.2z" fill="#0d0d0d"/>
<g clip-path="url(#scr)">
<rect x="16" y="15" width="971" height="605" fill="#2a2a2a" />
<rect x="16" y="34" width="971" height="337" fill="url(#grid)" />
<rect x="16" y="15" width="971" height="19.3" fill="#262626" />
<rect x="16" y="34.3" width="971" height="0.8" fill="#1b1b1b" />
<circle cx="25.1" cy="25.3" r="4.2" fill="#fe5f57" />
<circle cx="38.3" cy="25.3" r="4.2" fill="#fdbb1c" />
<circle cx="51.2" cy="25.3" r="4.2" fill="#1fd038" />
<text x="552.8" y="28" font-size="8.8" fill="#b8b8b8" font-weight="bold" >wipe.pnds</text>
<rect x="476" y="26.5" width="7.2" height="2.5" fill="#eee" />
</g>
<g clip-path="url(#scr)" id="ui">
<rect x="35.1" y="43.7" width="92.6" height="261.8" rx="5.5" fill="#000" fill-opacity="0.45" filter="url(#sh)"/>
<rect x="35.6" y="43.2" width="91.6" height="260.8" rx="5.5" fill="#333333" stroke="#4a4a4a" stroke-width="0.9"/>
<text x="55.2" y="51.7" font-size="6.1" fill="#9a9a9a" >Element</text>
<text x="55.2" y="59.6" font-size="7.3" fill="#fff" font-weight="bold" >Shape</text>
<circle cx="118.6" cy="51.7" r="4.6" fill="none" stroke="#6c6c6c" stroke-width="0.8"/>
<circle cx="116.6" cy="51.7" r="0.6" fill="#8a8a8a" />
<circle cx="118.6" cy="51.7" r="0.6" fill="#8a8a8a" />
<circle cx="120.6" cy="51.7" r="0.6" fill="#8a8a8a" />
<circle cx="107" cy="51.7" r="4.6" fill="none" stroke="#6c6c6c" stroke-width="0.8"/>
<path d="M104.9 52.1l1.5 1.8 2.8-4" fill="none" stroke="#858585" stroke-width="0.9"/>
<circle cx="46.1" cy="54" r="5.2" fill="#45bdff" />
<rect x="35.6" y="64" width="91.6" height="65.3" fill="#fff" />
<path d="M35.7 129V64.4H127.1V129z" fill="none" stroke="#2d8fd0" stroke-width="1.1"/>
<path d="M1.4 -18.3L18.3 1.4L-1.4 18.3L-18.3 -1.4z" fill="#000" transform="translate(81.3 96.8) scale(0.63)"/>
<text x="43" y="138.6" font-size="7" fill="#a8a8a8" >Shape</text>
<rect x="43.7" y="142.1" width="76.3" height="11.8" fill="#5c5c5c" rx="3" />
<rect x="108.5" y="143.3" width="10.5" height="9.4" fill="#1267ee" rx="2.3" />
<path d="M112 146.7l1.8-1.9 1.8 1.9M112 149.3l1.8 1.9 1.8-1.9" fill="none" stroke="#fff" stroke-width="0.95" stroke-linecap="round" stroke-linejoin="round"/>
<text x="61.5" y="150.9" font-size="8.6" fill="#f4f4f4" stroke="#f4f4f4" stroke-width="0.22">Rectangle</text>
<rect x="50.3" y="144.4" width="7.1" height="7.1" fill="#3db9ff" />
<text x="43" y="165.1" font-size="7" fill="#a8a8a8" >Size</text>
<rect x="114.6" y="160.3" width="5" height="5" rx="0.9" fill="#4a4a4a" stroke="#868686" stroke-width="0.9"/>
<rect x="115.5" y="161.2" width="2.4" height="2" fill="#2e2e2e" />
<path d="M34.9 168.4a4.8 4.8 0 0 1 0 9.6z" fill="url(#gL)"/>
<path d="M35.6 168.4a4.8 4.8 0 0 1 0 9.6" fill="none" stroke="#4a4a4a" stroke-width="0.9"/>
<path d="M127.9 168.2a5 5 0 0 0 0 10z" fill="url(#gR)"/>
<path d="M127.2 168.2a5 5 0 0 0 0 10" fill="none" stroke="#4a4a4a" stroke-width="0.9"/>
<circle cx="126.9" cy="173.2" r="2.1" fill="#262626" stroke="#5c5c5c" stroke-width="0.9"/>
<text x="43" y="175.7" font-size="8" fill="#f2f2f2" stroke="#f2f2f2" stroke-width="0.32" >Width</text>
<rect x="98.3" y="168.1" width="21.3" height="11.2" fill="#3d3d3d" />
<rect x="98.3" y="178.4" width="21.3" height="0.9" fill="#505050" />
<text x="100.1" y="176.9" font-size="8.4" fill="#f2f2f2" >26</text>
<path d="M34.9 180.5a4.8 4.8 0 0 1 0 9.6z" fill="url(#gL)"/>
<path d="M35.6 180.5a4.8 4.8 0 0 1 0 9.6" fill="none" stroke="#4a4a4a" stroke-width="0.9"/>
<path d="M127.9 180.3a5 5 0 0 0 0 10z" fill="url(#gR)"/>
<path d="M127.2 180.3a5 5 0 0 0 0 10" fill="none" stroke="#4a4a4a" stroke-width="0.9"/>
<circle cx="126.9" cy="185.3" r="2.1" fill="#262626" stroke="#5c5c5c" stroke-width="0.9"/>
<text x="43" y="187.8" font-size="8" fill="#f2f2f2" stroke="#f2f2f2" stroke-width="0.32" >Height</text>
<rect x="98.3" y="180.2" width="21.3" height="11.2" fill="#3d3d3d" />
<rect x="98.3" y="190.5" width="21.3" height="0.9" fill="#505050" />
<text x="100.1" y="189" font-size="8.4" fill="#f2f2f2" >26</text>
<ellipse cx="90.6" cy="175" rx="1.15" ry="2.2" fill="none" stroke="#9a9a9a" stroke-width="0.7"/>
<ellipse cx="90.6" cy="180" rx="1.15" ry="2.2" fill="none" stroke="#9a9a9a" stroke-width="0.7"/>
<ellipse cx="90.6" cy="185" rx="1.15" ry="2.2" fill="none" stroke="#9a9a9a" stroke-width="0.7"/>
<path d="M97.4 174.4h-1a1.6 1.6 0 0 0-1.6 1.6V184a1.6 1.6 0 0 0 1.6 1.6h1" fill="none" stroke="#9a9a9a" stroke-width="0.8"/>
<text x="43" y="200.6" font-size="7" fill="#a8a8a8" >Position</text>
<path d="M114.5 198h5.4M117.2 195.3v5.4" stroke="#8c8c8c" stroke-width="1.5"/>
<path d="M34.9 204.9a4.8 4.8 0 0 1 0 9.6z" fill="url(#gL)"/>
<path d="M35.6 204.9a4.8 4.8 0 0 1 0 9.6" fill="none" stroke="#4a4a4a" stroke-width="0.9"/>
<path d="M127.9 204.7a5 5 0 0 0 0 10z" fill="url(#gR)"/>
<path d="M127.2 204.7a5 5 0 0 0 0 10" fill="none" stroke="#4a4a4a" stroke-width="0.9"/>
<circle cx="126.9" cy="209.7" r="2.1" fill="#262626" stroke="#5c5c5c" stroke-width="0.9"/>
<text x="43" y="212.2" font-size="8" fill="#f2f2f2" stroke="#f2f2f2" stroke-width="0.32" >X</text>
<rect x="98.3" y="204.6" width="21.3" height="11.2" fill="#3d3d3d" />
<rect x="98.3" y="214.9" width="21.3" height="0.9" fill="#505050" />
<text x="100.1" y="213.4" font-size="8.4" fill="#f2f2f2" >0</text>
<path d="M34.9 217.1a4.8 4.8 0 0 1 0 9.6z" fill="url(#gL)"/>
<path d="M35.6 217.1a4.8 4.8 0 0 1 0 9.6" fill="none" stroke="#4a4a4a" stroke-width="0.9"/>
<path d="M127.9 216.9a5 5 0 0 0 0 10z" fill="url(#gR)"/>
<path d="M127.2 216.9a5 5 0 0 0 0 10" fill="none" stroke="#4a4a4a" stroke-width="0.9"/>
<circle cx="126.9" cy="221.9" r="2.1" fill="#262626" stroke="#5c5c5c" stroke-width="0.9"/>
<text x="43" y="224.4" font-size="8" fill="#f2f2f2" stroke="#f2f2f2" stroke-width="0.32" >Y</text>
<rect x="98.3" y="216.8" width="21.3" height="11.2" fill="#3d3d3d" />
<rect x="98.3" y="227.1" width="21.3" height="0.9" fill="#505050" />
<text x="100.1" y="225.6" font-size="8.4" fill="#f2f2f2" >0</text>
<rect x="43.6" y="231.4" width="6.4" height="6.4" fill="#1b72ea" rx="1.4" />
<path d="M45.01 234.73l1.28 1.54 2.3 -3.2" fill="none" stroke="#fff" stroke-width="1.02" stroke-linecap="round" stroke-linejoin="round"/>
<text x="52.8" y="237.2" font-size="7" fill="#a8a8a8" >Rotation</text>
<path d="M117.5 237.2a2.7 2.7 0 1 1 2.2-4.6" fill="none" stroke="#8c8c8c" stroke-width="0.9"/>
<path d="M116.8 234.9l3-1.7-0.6 2.6z" fill="#8c8c8c"/>
<path d="M34.9 240a4.8 4.8 0 0 1 0 9.6z" fill="url(#gL)"/>
<path d="M35.6 240a4.8 4.8 0 0 1 0 9.6" fill="none" stroke="#4a4a4a" stroke-width="0.9"/>
<path d="M127.9 239.8a5 5 0 0 0 0 10z" fill="url(#gR)"/>
<path d="M127.2 239.8a5 5 0 0 0 0 10" fill="none" stroke="#4a4a4a" stroke-width="0.9"/>
<circle cx="126.9" cy="244.8" r="2.1" fill="#262626" stroke="#5c5c5c" stroke-width="0.9"/>
<text x="43" y="246.7" font-size="8" fill="#f2f2f2" stroke="#f2f2f2" stroke-width="0.32" >Angle</text>
<rect x="98.3" y="239.6" width="21.3" height="11.2" fill="#3d3d3d" />
<rect x="98.3" y="249.9" width="21.3" height="0.9" fill="#505050" />
<text x="100.1" y="247.7" font-size="8.4" fill="#f2f2f2" >49.5</text>
<rect x="43.6" y="254.3" width="6.4" height="6.4" fill="#1b72ea" rx="1.4" />
<path d="M45.01 257.63l1.28 1.54 2.3 -3.2" fill="none" stroke="#fff" stroke-width="1.02" stroke-linecap="round" stroke-linejoin="round"/>
<text x="52.8" y="260.1" font-size="7" fill="#a8a8a8" >Fill</text>
<path d="M34.9 262.8a4.8 4.8 0 0 1 0 9.6z" fill="url(#gL)"/>
<path d="M35.6 262.8a4.8 4.8 0 0 1 0 9.6" fill="none" stroke="#2a9a36" stroke-width="1.1"/>
<path d="M127.9 262.6a5 5 0 0 0 0 10z" fill="url(#gR)"/>
<path d="M127.2 262.6a5 5 0 0 0 0 10" fill="none" stroke="#2a9a36" stroke-width="1.1"/>
<circle cx="127" cy="267.6" r="2.3" fill="#22b033" />
<text x="43" y="269.1" font-size="8.1" fill="#27a834" stroke="#27a834" stroke-width="0.3">Fill color</text>
<rect x="98.1" y="261.1" width="21.6" height="14.6" fill="#484848" />
<rect x="101.9" y="265.1" width="13.9" height="6.8" fill="#000" stroke="#8a8a8a" stroke-width="0.9"/>
<path d="M34.9 278.4a4.8 4.8 0 0 1 0 9.6z" fill="url(#gL)"/>
<path d="M35.6 278.4a4.8 4.8 0 0 1 0 9.6" fill="none" stroke="#4a4a4a" stroke-width="0.9"/>
<path d="M127.9 278.2a5 5 0 0 0 0 10z" fill="url(#gR)"/>
<path d="M127.2 278.2a5 5 0 0 0 0 10" fill="none" stroke="#4a4a4a" stroke-width="0.9"/>
<circle cx="126.9" cy="283.2" r="2.1" fill="#262626" stroke="#5c5c5c" stroke-width="0.9"/>
<text x="43" y="284.8" font-size="8" fill="#f2f2f2" stroke="#f2f2f2" stroke-width="0.32" >Opacity</text>
<rect x="98.3" y="277.7" width="21.3" height="11.2" fill="#3d3d3d" />
<rect x="98.3" y="288" width="21.3" height="0.9" fill="#505050" />
<text x="100.1" y="286" font-size="8.4" fill="#f2f2f2" >1</text>
<rect x="43.6" y="292.2" width="6.4" height="6.4" fill="#5e5e5e" rx="1.2" />
<text x="52.8" y="298" font-size="7" fill="#a8a8a8" >Stroke</text>
<rect x="139.9" y="43.7" width="90.9" height="241.2" rx="5.5" fill="#000" fill-opacity="0.45" filter="url(#sh)"/>
<rect x="140.4" y="43.2" width="89.9" height="240.2" rx="5.5" fill="#333333" stroke="#4a4a4a" stroke-width="0.9"/>
<text x="160" y="51.7" font-size="6.1" fill="#9a9a9a" >Repeat</text>
<text x="160" y="59.6" font-size="7.3" fill="#fff" font-weight="bold" >Grid</text>
<circle cx="221.7" cy="51.7" r="4.6" fill="none" stroke="#6c6c6c" stroke-width="0.8"/>
<circle cx="219.7" cy="51.7" r="0.6" fill="#8a8a8a" />
<circle cx="221.7" cy="51.7" r="0.6" fill="#8a8a8a" />
<circle cx="223.7" cy="51.7" r="0.6" fill="#8a8a8a" />
<circle cx="210.1" cy="51.7" r="4.6" fill="none" stroke="#6c6c6c" stroke-width="0.8"/>
<path d="M208 52.1l1.5 1.8 2.8-4" fill="none" stroke="#858585" stroke-width="0.9"/>
<rect x="144.9" y="48.7" width="2" height="2" fill="#3db9ff" />
<rect x="148.9" y="48.7" width="2" height="2" fill="#f4eef4" />
<rect x="152.9" y="48.7" width="2" height="2" fill="#f4eef4" />
<rect x="144.9" y="52.75" width="2" height="2" fill="#f4eef4" />
<rect x="148.9" y="52.75" width="2" height="2" fill="#f4eef4" />
<rect x="152.9" y="52.75" width="2" height="2" fill="#f4eef4" />
<rect x="144.9" y="56.8" width="2" height="2" fill="#f4eef4" />
<rect x="148.9" y="56.8" width="2" height="2" fill="#f4eef4" />
<rect x="152.9" y="56.8" width="2" height="2" fill="#f4eef4" />
<rect x="140.4" y="64" width="89.9" height="65.3" fill="#fff" />
<path d="M140.5 129V64.4H230.2V129z" fill="none" stroke="#2d8fd0" stroke-width="1.1"/>
<g transform="translate(185.4 96.6) scale(0.0445)"><rect x="-972" y="-552" width="1944" height="1104" fill="#919191"/><use href="#uni" fill="#000" fill-opacity="0.2"/></g>
<text x="147.3" y="138.6" font-size="7" fill="#a8a8a8" >Grid pattern</text>
<rect x="147.8" y="142.1" width="76.3" height="11.8" fill="#5c5c5c" rx="3" />
<rect x="212.6" y="143.3" width="10.5" height="9.4" fill="#1267ee" rx="2.3" />
<path d="M216.1 146.7l1.8-1.9 1.8 1.9M216.1 149.3l1.8 1.9 1.8-1.9" fill="none" stroke="#fff" stroke-width="0.95" stroke-linecap="round" stroke-linejoin="round"/>
<text x="165.9" y="150.9" font-size="8.6" fill="#f4f4f4" stroke="#f4f4f4" stroke-width="0.22">Brick</text>
<rect x="153.2" y="144.2" width="1.5" height="1.5" fill="#3db9ff" />
<rect x="156" y="144.2" width="1.5" height="1.5" fill="#e6dfe6" />
<rect x="158.8" y="144.2" width="1.5" height="1.5" fill="#e6dfe6" />
<rect x="154.6" y="147.1" width="1.5" height="1.5" fill="#e6dfe6" />
<rect x="157.4" y="147.1" width="1.5" height="1.5" fill="#e6dfe6" />
<rect x="160.2" y="147.1" width="1.5" height="1.5" fill="#e6dfe6" />
<rect x="153.2" y="150" width="1.5" height="1.5" fill="#e6dfe6" />
<rect x="156" y="150" width="1.5" height="1.5" fill="#e6dfe6" />
<rect x="158.8" y="150" width="1.5" height="1.5" fill="#e6dfe6" />
<path d="M139.7 159.4a4.8 4.8 0 0 1 0 9.6z" fill="url(#gL)"/>
<path d="M140.4 159.4a4.8 4.8 0 0 1 0 9.6" fill="none" stroke="#4a4a4a" stroke-width="0.9"/>
<path d="M231 159.2a5 5 0 0 0 0 10z" fill="url(#gR)"/>
<path d="M230.3 159.2a5 5 0 0 0 0 10" fill="none" stroke="#4a4a4a" stroke-width="0.9"/>
<circle cx="230" cy="164.2" r="2.1" fill="#262626" stroke="#5c5c5c" stroke-width="0.9"/>
<text x="147.3" y="166.7" font-size="8" fill="#f2f2f2" stroke="#f2f2f2" stroke-width="0.32" >Columns</text>
<rect x="202.5" y="159.1" width="21.3" height="11.2" fill="#3d3d3d" />
<rect x="202.5" y="169.4" width="21.3" height="0.9" fill="#505050" />
<text x="204.3" y="168.1" font-size="8.4" fill="#f2f2f2" >41</text>
<path d="M139.7 171.9a4.8 4.8 0 0 1 0 9.6z" fill="url(#gL)"/>
<path d="M140.4 171.9a4.8 4.8 0 0 1 0 9.6" fill="none" stroke="#4a4a4a" stroke-width="0.9"/>
<path d="M231 171.7a5 5 0 0 0 0 10z" fill="url(#gR)"/>
<path d="M230.3 171.7a5 5 0 0 0 0 10" fill="none" stroke="#4a4a4a" stroke-width="0.9"/>
<circle cx="230" cy="176.7" r="2.1" fill="#262626" stroke="#5c5c5c" stroke-width="0.9"/>
<text x="147.3" y="179.2" font-size="8" fill="#f2f2f2" stroke="#f2f2f2" stroke-width="0.32" >Rows</text>
<rect x="202.5" y="171.6" width="21.3" height="11.2" fill="#3d3d3d" />
<rect x="202.5" y="181.9" width="21.3" height="0.9" fill="#505050" />
<text x="204.3" y="180.6" font-size="8.4" fill="#f2f2f2" >41</text>
<ellipse cx="194.7" cy="166" rx="1.15" ry="2.2" fill="none" stroke="#9a9a9a" stroke-width="0.7"/>
<ellipse cx="194.7" cy="171.2" rx="1.15" ry="2.2" fill="none" stroke="#9a9a9a" stroke-width="0.7"/>
<ellipse cx="194.7" cy="176.4" rx="1.15" ry="2.2" fill="none" stroke="#9a9a9a" stroke-width="0.7"/>
<path d="M201.5 165.4h-1a1.6 1.6 0 0 0-1.6 1.6V175.4a1.6 1.6 0 0 0 1.6 1.6h1" fill="none" stroke="#9a9a9a" stroke-width="0.8"/>
<path d="M139.7 186.4a4.8 4.8 0 0 1 0 9.6z" fill="url(#gL)"/>
<path d="M140.4 186.4a4.8 4.8 0 0 1 0 9.6" fill="none" stroke="#4a4a4a" stroke-width="0.9"/>
<path d="M231 186.2a5 5 0 0 0 0 10z" fill="url(#gR)"/>
<path d="M230.3 186.2a5 5 0 0 0 0 10" fill="none" stroke="#4a4a4a" stroke-width="0.9"/>
<circle cx="230" cy="191.2" r="2.1" fill="#262626" stroke="#5c5c5c" stroke-width="0.9"/>
<text x="147.3" y="193.7" font-size="8" fill="#f2f2f2" stroke="#f2f2f2" stroke-width="0.32" >Row shift</text>
<rect x="202.5" y="186.1" width="21.3" height="11.2" fill="#3d3d3d" />
<rect x="202.5" y="196.4" width="21.3" height="0.9" fill="#505050" />
<text x="204.3" y="195.1" font-size="8.4" fill="#f2f2f2" >0.5</text>
<text x="147.3" y="206" font-size="7" fill="#a8a8a8" >Grid spacing</text>
<path d="M218.6 203.3h5.4M221.3 200.6v5.4" stroke="#8c8c8c" stroke-width="1.5"/>
<path d="M231 209.7a5 5 0 0 0 0 10z" fill="url(#gR)"/>
<path d="M230.3 209.7a5 5 0 0 0 0 10" fill="none" stroke="#4a4a4a" stroke-width="0.9"/>
<circle cx="230" cy="214.7" r="2.1" fill="#262626" stroke="#5c5c5c" stroke-width="0.9"/>
<text x="147.3" y="217.2" font-size="8" fill="#f2f2f2" stroke="#f2f2f2" stroke-width="0.32" >X</text>
<rect x="202.5" y="209.6" width="21.3" height="11.2" fill="#3d3d3d" />
<rect x="202.5" y="219.9" width="21.3" height="0.9" fill="#505050" />
<text x="204.3" y="217.9" font-size="8.4" fill="#7d7d7d" >48</text>
<path d="M231 221.9a5 5 0 0 0 0 10z" fill="url(#gR)"/>
<path d="M230.3 221.9a5 5 0 0 0 0 10" fill="none" stroke="#4a4a4a" stroke-width="0.9"/>
<circle cx="230" cy="226.9" r="2.1" fill="#262626" stroke="#5c5c5c" stroke-width="0.9"/>
<text x="147.3" y="229.4" font-size="8" fill="#f2f2f2" stroke="#f2f2f2" stroke-width="0.32" >Y</text>
<rect x="202.5" y="221.8" width="21.3" height="11.2" fill="#3d3d3d" />
<rect x="202.5" y="232.1" width="21.3" height="0.9" fill="#505050" />
<text x="204.3" y="230.1" font-size="8.4" fill="#7d7d7d" >27</text>
<rect x="147.4" y="236.8" width="7.6" height="7.6" fill="#1b72ea" rx="1.4" />
<path d="M149.07 240.75l1.52 1.82 2.74 -3.8" fill="none" stroke="#fff" stroke-width="1.22" stroke-linecap="round" stroke-linejoin="round"/>
<text x="157.2" y="244" font-size="8" fill="#f2f2f2" stroke="#f2f2f2" stroke-width="0.32" >Auto spacing</text>
<text x="147.3" y="254.2" font-size="7" fill="#a8a8a8" >Repetition grid area</text>
<rect x="147.4" y="258.6" width="7.6" height="7.6" fill="#1b72ea" rx="1.4" />
<path d="M149.07 262.55l1.52 1.82 2.74 -3.8" fill="none" stroke="#fff" stroke-width="1.22" stroke-linecap="round" stroke-linejoin="round"/>
<text x="157.2" y="265.8" font-size="8" fill="#f2f2f2" stroke="#f2f2f2" stroke-width="0.32" >Use artboard size</text>
<rect x="148" y="270.6" width="6.4" height="6.4" fill="#5e5e5e" rx="1.2" />
<text x="157" y="276.6" font-size="7" fill="#a8a8a8" >Extra settings</text>
<rect x="256.2" y="44.3" width="92.1" height="170.2" rx="5.5" fill="#000" fill-opacity="0.45" filter="url(#sh)"/>
<rect x="256.7" y="43.8" width="91.1" height="169.2" rx="5.5" fill="#333333" stroke="#4a4a4a" stroke-width="0.9"/>
<text x="276.3" y="52.3" font-size="6.1" fill="#9a9a9a" >Change</text>
<text x="276.3" y="60.2" font-size="7.3" fill="#fff" font-weight="bold" >Transform 1</text>
<circle cx="339.2" cy="52.3" r="4.6" fill="none" stroke="#6c6c6c" stroke-width="0.8"/>
<circle cx="337.2" cy="52.3" r="0.6" fill="#8a8a8a" />
<circle cx="339.2" cy="52.3" r="0.6" fill="#8a8a8a" />
<circle cx="341.2" cy="52.3" r="0.6" fill="#8a8a8a" />
<circle cx="327.6" cy="52.3" r="4.6" fill="none" stroke="#6c6c6c" stroke-width="0.8"/>
<path d="M325.5 52.7l1.5 1.8 2.8-4" fill="none" stroke="#858585" stroke-width="0.9"/>
<circle cx="267.2" cy="54.6" r="5.3" fill="none" stroke="#777" stroke-width="0.8" stroke-dasharray="26 7"/>
<circle cx="267.9" cy="54.2" r="2.3" fill="#45bdff" />
<rect x="256.7" y="64.3" width="91.1" height="64.8" fill="#fff" />
<path d="M256.8 128.8V64.7H347.7V128.8z" fill="none" stroke="#2d8fd0" stroke-width="1.1"/>
<g transform="translate(302 96.5) rotate(-10) scale(0.0407)"><rect x="-972" y="-552" width="1944" height="1104" fill="#919191"/><use href="#uni" fill="#000" fill-opacity="0.2"/></g>
<rect x="257.2" y="129.2" width="90.1" height="16.4" fill="#464646" />
<text x="261.9" y="139.5" font-size="7.3" fill="#c8c8c8" >Apply to</text>
<rect x="298.4" y="131.9" width="45.9" height="10.9" fill="#515151" rx="2.5" />
<rect x="298.4" y="131.9" width="15.3" height="10.9" fill="#7b7b7b" rx="2.5" />
<circle cx="306" cy="137.4" r="2.4" fill="#f0f0f0" />
<rect x="318.7" y="134.8" width="2.2" height="2.2" fill="#f0f0f0" rx="0.4" />
<rect x="318.7" y="137.8" width="2.2" height="2.2" fill="#f0f0f0" rx="0.4" />
<rect x="321.7" y="134.8" width="2.2" height="2.2" fill="#f0f0f0" rx="0.4" />
<rect x="321.7" y="137.8" width="2.2" height="2.2" fill="#f0f0f0" rx="0.4" />
<rect x="333.8" y="134.6" width="2.2" height="2.2" fill="#f0f0f0" rx="0.4" />
<rect x="337.4" y="138" width="2.2" height="2.2" fill="#f0f0f0" rx="0.4" />
<rect x="337.7" y="135" width="1.4" height="1.4" fill="#f0f0f0" rx="0.3" />
<rect x="334.3" y="138.5" width="1.4" height="1.4" fill="#f0f0f0" rx="0.3" />
<text x="264.3" y="154.5" font-size="7" fill="#a8a8a8" >Transform</text>
<rect x="264.7" y="159.4" width="6.2" height="6.2" fill="#5e5e5e" rx="1.2" />
<text x="273.8" y="165" font-size="7.05" fill="#a8a8a8" >Offset</text>
<rect x="264.7" y="169.1" width="6.2" height="6.2" fill="#5e5e5e" rx="1.2" />
<text x="273.8" y="174.7" font-size="7.05" fill="#a8a8a8" >Scale</text>
<rect x="264.7" y="178.8" width="6.2" height="6.2" fill="#5e5e5e" rx="1.2" />
<text x="273.8" y="184.4" font-size="7.05" fill="#a8a8a8" >Resize</text>
<rect x="264.7" y="188.4" width="6.2" height="6.2" fill="#1b72ea" rx="1.4" />
<path d="M266.06 191.62l1.24 1.49 2.23 -3.1" fill="none" stroke="#fff" stroke-width="0.99" stroke-linecap="round" stroke-linejoin="round"/>
<text x="273.8" y="194" font-size="7.05" fill="#a8a8a8" >Rotation</text>
<path d="M335.2 162.1h5.4M337.9 159.4v5.4" stroke="#8c8c8c" stroke-width="1.5"/>
<circle cx="337.9" cy="171.8" r="2.4" fill="none" stroke="#8c8c8c" stroke-width="1.5"/>
<circle cx="337.9" cy="171.8" r="0.9" fill="#8c8c8c" />
<rect x="335.4" y="179" width="5" height="5" rx="0.9" fill="#4a4a4a" stroke="#868686" stroke-width="0.9"/>
<rect x="336.3" y="179.9" width="2.4" height="2" fill="#2e2e2e" />
<path d="M338.2 193.9a2.7 2.7 0 1 1 2.2-4.6" fill="none" stroke="#8c8c8c" stroke-width="0.9"/>
<path d="M337.5 191.6l3-1.7-0.6 2.6z" fill="#8c8c8c"/>
<path d="M256 196.3a4.8 4.8 0 0 1 0 9.6z" fill="url(#gL)"/>
<path d="M256.7 196.3a4.8 4.8 0 0 1 0 9.6" fill="none" stroke="#4a4a4a" stroke-width="0.9"/>
<path d="M348.5 196.1a5 5 0 0 0 0 10z" fill="url(#gR)"/>
<path d="M347.8 196.1a5 5 0 0 0 0 10" fill="none" stroke="#4a4a4a" stroke-width="0.9"/>
<circle cx="347.5" cy="201.1" r="2.1" fill="#262626" stroke="#5c5c5c" stroke-width="0.9"/>
<text x="263.9" y="203.6" font-size="8" fill="#f2f2f2" stroke="#f2f2f2" stroke-width="0.32" >Angle</text>
<path d="M311.2 201.4l2.4-2.4 2.4 2.4-2.4 2.4z" fill="#f00"/>
<rect x="319.1" y="196.3" width="21.4" height="10.8" fill="#3d3d3d" />
<rect x="319.1" y="206.2" width="21.4" height="0.9" fill="#505050" />
<text x="321.5" y="204.9" font-size="8.4" fill="#f2f2f2" >-10</text>
<rect x="568" y="57.2" width="92.1" height="170.2" rx="5.5" fill="#000" fill-opacity="0.45" filter="url(#sh)"/>
<rect x="568.5" y="56.7" width="91.1" height="169.2" rx="5.5" fill="#333333" stroke="#4a4a4a" stroke-width="0.9"/>
<text x="588.1" y="65.2" font-size="6.1" fill="#9a9a9a" >Change</text>
<text x="588.1" y="73.1" font-size="7.3" fill="#fff" font-weight="bold" >Transform 2</text>
<circle cx="651" cy="65.2" r="4.6" fill="none" stroke="#6c6c6c" stroke-width="0.8"/>
<circle cx="649" cy="65.2" r="0.6" fill="#8a8a8a" />
<circle cx="651" cy="65.2" r="0.6" fill="#8a8a8a" />
<circle cx="653" cy="65.2" r="0.6" fill="#8a8a8a" />
<circle cx="639.4" cy="65.2" r="4.6" fill="none" stroke="#6c6c6c" stroke-width="0.8"/>
<path d="M637.3 65.6l1.5 1.8 2.8-4" fill="none" stroke="#858585" stroke-width="0.9"/>
<circle cx="579" cy="67.5" r="5.3" fill="none" stroke="#777" stroke-width="0.8" stroke-dasharray="26 7"/>
<circle cx="579.7" cy="67.1" r="2.3" fill="#45bdff" />
<rect x="568.5" y="77.2" width="91.1" height="64.8" fill="#fff" />
<path d="M568.6 141.7V77.6H659.5V141.7z" fill="none" stroke="#2d8fd0" stroke-width="1.1"/>
<g transform="translate(614.1 108.3) scale(0.0436)"><rect x="-984" y="-552" width="1968" height="1116" fill="url(#hg)"/><use href="#ht" fill="#000" fill-opacity="0.35"/></g>
<rect x="569" y="142.1" width="90.1" height="16.4" fill="#464646" />
<text x="573.7" y="152.4" font-size="7.3" fill="#c8c8c8" >Apply to</text>
<rect x="610.2" y="144.8" width="45.9" height="10.9" fill="#515151" rx="2.5" />
<rect x="610.2" y="144.8" width="15.3" height="10.9" fill="#7b7b7b" rx="2.5" />
<circle cx="617.8" cy="150.3" r="2.4" fill="#f0f0f0" />
<rect x="630.5" y="147.7" width="2.2" height="2.2" fill="#f0f0f0" rx="0.4" />
<rect x="630.5" y="150.7" width="2.2" height="2.2" fill="#f0f0f0" rx="0.4" />
<rect x="633.5" y="147.7" width="2.2" height="2.2" fill="#f0f0f0" rx="0.4" />
<rect x="633.5" y="150.7" width="2.2" height="2.2" fill="#f0f0f0" rx="0.4" />
<rect x="645.6" y="147.5" width="2.2" height="2.2" fill="#f0f0f0" rx="0.4" />
<rect x="649.2" y="150.9" width="2.2" height="2.2" fill="#f0f0f0" rx="0.4" />
<rect x="649.5" y="147.9" width="1.4" height="1.4" fill="#f0f0f0" rx="0.3" />
<rect x="646.1" y="151.4" width="1.4" height="1.4" fill="#f0f0f0" rx="0.3" />
<text x="576.1" y="167.4" font-size="7" fill="#a8a8a8" >Transform</text>
<rect x="576.5" y="172.3" width="6.2" height="6.2" fill="#5e5e5e" rx="1.2" />
<text x="585.6" y="177.9" font-size="7.05" fill="#a8a8a8" >Offset</text>
<rect x="576.5" y="182" width="6.2" height="6.2" fill="#5e5e5e" rx="1.2" />
<text x="585.6" y="187.6" font-size="7.05" fill="#a8a8a8" >Scale</text>
<rect x="576.5" y="191.7" width="6.2" height="6.2" fill="#5e5e5e" rx="1.2" />
<text x="585.6" y="197.3" font-size="7.05" fill="#a8a8a8" >Resize</text>
<rect x="576.5" y="201.3" width="6.2" height="6.2" fill="#1b72ea" rx="1.4" />
<path d="M577.86 204.52l1.24 1.49 2.23 -3.1" fill="none" stroke="#fff" stroke-width="0.99" stroke-linecap="round" stroke-linejoin="round"/>
<text x="585.6" y="206.9" font-size="7.05" fill="#a8a8a8" >Rotation</text>
<path d="M647 175h5.4M649.7 172.3v5.4" stroke="#8c8c8c" stroke-width="1.5"/>
<circle cx="649.7" cy="184.7" r="2.4" fill="none" stroke="#8c8c8c" stroke-width="1.5"/>
<circle cx="649.7" cy="184.7" r="0.9" fill="#8c8c8c" />
<rect x="647.2" y="191.9" width="5" height="5" rx="0.9" fill="#4a4a4a" stroke="#868686" stroke-width="0.9"/>
<rect x="648.1" y="192.8" width="2.4" height="2" fill="#2e2e2e" />
<path d="M650 206.8a2.7 2.7 0 1 1 2.2-4.6" fill="none" stroke="#8c8c8c" stroke-width="0.9"/>
<path d="M649.3 204.5l3-1.7-0.6 2.6z" fill="#8c8c8c"/>
<path d="M567.8 209.2a4.8 4.8 0 0 1 0 9.6z" fill="url(#gL)"/>
<path d="M568.5 209.2a4.8 4.8 0 0 1 0 9.6" fill="none" stroke="#4a4a4a" stroke-width="0.9"/>
<path d="M660.3 209a5 5 0 0 0 0 10z" fill="url(#gR)"/>
<path d="M659.6 209a5 5 0 0 0 0 10" fill="none" stroke="#4a4a4a" stroke-width="0.9"/>
<circle cx="659.3" cy="214" r="2.1" fill="#262626" stroke="#5c5c5c" stroke-width="0.9"/>
<text x="575.7" y="216.5" font-size="8" fill="#f2f2f2" stroke="#f2f2f2" stroke-width="0.32" >Angle</text>
<rect x="630.9" y="209.2" width="21.4" height="10.8" fill="#3d3d3d" />
<rect x="630.9" y="219.1" width="21.4" height="0.9" fill="#505050" />
<text x="633.3" y="217.8" font-size="8.4" fill="#8a8a8a" >10</text>
<rect x="373.2" y="44.3" width="91.6" height="301.4" rx="5.5" fill="#000" fill-opacity="0.45" filter="url(#sh)"/>
<rect x="373.7" y="43.8" width="90.6" height="300.4" rx="5.5" fill="#333333" stroke="#4a4a4a" stroke-width="0.9"/>
<text x="393.3" y="52.3" font-size="6.1" fill="#9a9a9a" >Group</text>
<text x="393.3" y="60.2" font-size="7.3" fill="#fff" font-weight="bold" >Apply function</text>
<circle cx="455.7" cy="52.3" r="4.6" fill="none" stroke="#6c6c6c" stroke-width="0.8"/>
<circle cx="453.7" cy="52.3" r="0.6" fill="#8a8a8a" />
<circle cx="455.7" cy="52.3" r="0.6" fill="#8a8a8a" />
<circle cx="457.7" cy="52.3" r="0.6" fill="#8a8a8a" />
<circle cx="444.1" cy="52.3" r="4.6" fill="none" stroke="#6c6c6c" stroke-width="0.8"/>
<path d="M442 52.7l1.5 1.8 2.8-4" fill="none" stroke="#858585" stroke-width="0.9"/>
<rect x="378.15" y="48.75" width="2.3" height="2.3" fill="#4fc3ff" />
<rect x="382.75" y="49.05" width="1.7" height="1.7" fill="#2d9de0" />
<rect x="387.4" y="49.4" width="1" height="1" fill="#2a80b4" />
<rect x="378.15" y="52.9" width="2.3" height="2.3" fill="#4fc3ff" />
<rect x="382.75" y="53.2" width="1.7" height="1.7" fill="#2d9de0" />
<rect x="387.4" y="53.55" width="1" height="1" fill="#2a80b4" />
<rect x="378.15" y="57.05" width="2.3" height="2.3" fill="#4fc3ff" />
<rect x="382.75" y="57.35" width="1.7" height="1.7" fill="#2d9de0" />
<rect x="387.4" y="57.7" width="1" height="1" fill="#2a80b4" />
<rect x="373.7" y="64.3" width="90.6" height="64.8" fill="#fff" />
<path d="M373.8 128.8V64.7H464.2V128.8z" fill="none" stroke="#2d8fd0" stroke-width="1.1"/>
<clipPath id="pv4"><rect x="374.4" y="64.9" width="89.2" height="64.2"/></clipPath>
<g clip-path="url(#pv4)"><g transform="translate(418.1 95.5) rotate(-10) scale(0.0409)"><rect x="-984" y="-552" width="1968" height="1116" fill="url(#hg)"/><use href="#ht" fill="#000" fill-opacity="0.35"/></g></g>
<rect x="374.2" y="129.2" width="89.6" height="16.4" fill="#464646" />
<text x="378.9" y="139.5" font-size="7.3" fill="#c8c8c8" >Apply to</text>
<rect x="430.2" y="131.9" width="30.6" height="10.9" fill="#515151" rx="2.5" />
<rect x="430.2" y="131.9" width="15.3" height="10.9" fill="#7b7b7b" rx="2.5" />
<rect x="435.2" y="134.8" width="2.2" height="2.2" fill="#f0f0f0" rx="0.4" />
<rect x="435.2" y="137.8" width="2.2" height="2.2" fill="#f0f0f0" rx="0.4" />
<rect x="438.2" y="134.8" width="2.2" height="2.2" fill="#f0f0f0" rx="0.4" />
<rect x="438.2" y="137.8" width="2.2" height="2.2" fill="#f0f0f0" rx="0.4" />
<rect x="450.3" y="134.6" width="2.2" height="2.2" fill="#f0f0f0" rx="0.4" />
<rect x="453.9" y="138" width="2.2" height="2.2" fill="#f0f0f0" rx="0.4" />
<rect x="454.2" y="135" width="1.4" height="1.4" fill="#f0f0f0" rx="0.3" />
<rect x="450.8" y="138.5" width="1.4" height="1.4" fill="#f0f0f0" rx="0.3" />
<text x="380.7" y="155.3" font-size="7" fill="#a8a8a8" >Function input</text>
<rect x="381.6" y="158.6" width="76.2" height="11.7" fill="#5c5c5c" rx="3" />
<rect x="446.3" y="159.8" width="10.5" height="9.3" fill="#1267ee" rx="2.3" />
<path d="M449.8 163.15l1.8-1.9 1.8 1.9M449.8 165.75l1.8 1.9 1.8-1.9" fill="none" stroke="#fff" stroke-width="0.95" stroke-linecap="round" stroke-linejoin="round"/>
<text x="400.1" y="167.3" font-size="8.6" fill="#f4f4f4" stroke="#f4f4f4" stroke-width="0.22">Y Position</text>
<circle cx="390.5" cy="164.4" r="1.4" fill="#56c4ff" />
<text x="380.7" y="181.8" font-size="7" fill="#a8a8a8" >Function</text>
<rect x="381.6" y="185.1" width="76.2" height="11.7" fill="#5c5c5c" rx="3" />
<rect x="446.3" y="186.3" width="10.5" height="9.3" fill="#1267ee" rx="2.3" />
<path d="M449.8 189.65l1.8-1.9 1.8 1.9M449.8 192.25l1.8 1.9 1.8-1.9" fill="none" stroke="#fff" stroke-width="0.95" stroke-linecap="round" stroke-linejoin="round"/>
<text x="400.1" y="193.8" font-size="8.6" fill="#f4f4f4" stroke="#f4f4f4" stroke-width="0.22">Ease</text>
<path d="M387 187v8h8" fill="none" stroke="#222" stroke-width="0.8"/><path d="M387.5 194.5c3.5 0 2.5-7 7-7" fill="none" stroke="#111" stroke-width="1.2"/>
<path d="M382.6 199v33h75" fill="none" stroke="#4c4c4c" stroke-width="0.9"/>
<path d="M382.9 231.2L384.71 231.2L386.51 231.2L388.32 231.2L390.13 231.2L391.94 231.2L393.75 231.2L395.55 231.2L397.36 231.2L399.17 231.18L400.97 231.07L402.78 230.87L404.59 230.57L406.4 230.19L408.2 229.73L410.01 229.19L411.82 228.59L413.63 227.92L415.43 227.19L417.24 226.41L419.05 225.58L420.86 224.71L422.66 223.8L424.47 222.85L426.28 221.88L428.09 220.89L429.89 219.87L431.7 218.85L433.51 217.81L435.32 216.78L437.12 215.75L438.93 214.72L440.74 213.71L442.55 212.72L444.35 211.76L446.16 210.82L447.97 209.91L449.78 209.05L451.58 208.23L453.39 207.46L455.2 206.74" fill="none" stroke="#fff" stroke-width="1.7" stroke-linejoin="round" stroke-linecap="round"/>
<rect x="381.7" y="236.2" width="6.2" height="6.2" fill="#1b72ea" rx="1.4" />
<path d="M383.06 239.42l1.24 1.49 2.23 -3.1" fill="none" stroke="#fff" stroke-width="0.99" stroke-linecap="round" stroke-linejoin="round"/>
<text x="390.7" y="241.7" font-size="7" fill="#a8a8a8" >Modify periods</text>
<path d="M373 246a4.8 4.8 0 0 1 0 9.6z" fill="url(#gL)"/>
<path d="M373.7 246a4.8 4.8 0 0 1 0 9.6" fill="none" stroke="#4a4a4a" stroke-width="0.9"/>
<path d="M465 245.8a5 5 0 0 0 0 10z" fill="url(#gR)"/>
<path d="M464.3 245.8a5 5 0 0 0 0 10" fill="none" stroke="#4a4a4a" stroke-width="0.9"/>
<circle cx="464" cy="250.8" r="2.1" fill="#262626" stroke="#5c5c5c" stroke-width="0.9"/>
<text x="380.7" y="252.8" font-size="8" fill="#f2f2f2" stroke="#f2f2f2" stroke-width="0.32" >Periods</text>
<rect x="435.9" y="245.9" width="21.3" height="11" fill="#3d3d3d" />
<rect x="435.9" y="256" width="21.3" height="0.9" fill="#505050" />
<text x="437.7" y="254.7" font-size="8.4" fill="#f2f2f2" >1</text>
<path d="M373 260a4.8 4.8 0 0 1 0 9.6z" fill="url(#gL)"/>
<path d="M373.7 260a4.8 4.8 0 0 1 0 9.6" fill="none" stroke="#4a4a4a" stroke-width="0.9"/>
<path d="M465 259.8a5 5 0 0 0 0 10z" fill="url(#gR)"/>
<path d="M464.3 259.8a5 5 0 0 0 0 10" fill="none" stroke="#4a4a4a" stroke-width="0.9"/>
<circle cx="464" cy="264.8" r="2.1" fill="#262626" stroke="#5c5c5c" stroke-width="0.9"/>
<text x="380.7" y="267.3" font-size="8" fill="#f2f2f2" stroke="#f2f2f2" stroke-width="0.32" >Offset</text>
<rect x="435.9" y="259.9" width="21.3" height="11" fill="#3d3d3d" />
<rect x="435.9" y="270" width="21.3" height="0.9" fill="#505050" />
<text x="437.7" y="268.7" font-size="8.4" fill="#f2f2f2" >-0.21</text>
<path d="M428.2 265.1l2.3-2.3 2.3 2.3-2.3 2.3z" fill="#f00"/>
<rect x="381.6" y="274.6" width="7.6" height="7.6" fill="#1b72ea" rx="1.4" />
<path d="M383.27 278.55l1.52 1.82 2.74 -3.8" fill="none" stroke="#fff" stroke-width="1.22" stroke-linecap="round" stroke-linejoin="round"/>
<text x="391.6" y="281.9" font-size="8" fill="#f2f2f2" stroke="#f2f2f2" stroke-width="0.32" >Cap end values</text>
<text x="380.7" y="292.9" font-size="7" fill="#a8a8a8" >Apply to</text>
<rect x="381.6" y="296.3" width="76.2" height="11.7" fill="#5c5c5c" rx="3" />
<rect x="446.3" y="297.5" width="10.5" height="9.3" fill="#1267ee" rx="2.3" />
<path d="M449.8 300.85l1.8-1.9 1.8 1.9M449.8 303.45l1.8 1.9 1.8-1.9" fill="none" stroke="#fff" stroke-width="0.95" stroke-linecap="round" stroke-linejoin="round"/>
<text x="399.6" y="305" font-size="8.6" fill="#f4f4f4" stroke="#f4f4f4" stroke-width="0.22">Scale</text>
<circle cx="391.6" cy="302.1" r="1.4" fill="#5bc8ff" />
<path d="M373 313.7a4.8 4.8 0 0 1 0 9.6z" fill="url(#gL)"/>
<path d="M373.7 313.7a4.8 4.8 0 0 1 0 9.6" fill="none" stroke="#4a4a4a" stroke-width="0.9"/>
<path d="M465 313.5a5 5 0 0 0 0 10z" fill="url(#gR)"/>
<path d="M464.3 313.5a5 5 0 0 0 0 10" fill="none" stroke="#4a4a4a" stroke-width="0.9"/>
<circle cx="464" cy="318.5" r="2.1" fill="#262626" stroke="#5c5c5c" stroke-width="0.9"/>
<text x="380.7" y="321" font-size="8" fill="#f2f2f2" stroke="#f2f2f2" stroke-width="0.32" >Min</text>
<rect x="435.9" y="313.6" width="21.3" height="11" fill="#3d3d3d" />
<rect x="435.9" y="323.7" width="21.3" height="0.9" fill="#505050" />
<text x="437.7" y="322.4" font-size="8.4" fill="#f2f2f2" >0</text>
<path d="M373 328a4.8 4.8 0 0 1 0 9.6z" fill="url(#gL)"/>
<path d="M373.7 328a4.8 4.8 0 0 1 0 9.6" fill="none" stroke="#4a4a4a" stroke-width="0.9"/>
<path d="M465 327.8a5 5 0 0 0 0 10z" fill="url(#gR)"/>
<path d="M464.3 327.8a5 5 0 0 0 0 10" fill="none" stroke="#4a4a4a" stroke-width="0.9"/>
<circle cx="464" cy="332.8" r="2.1" fill="#262626" stroke="#5c5c5c" stroke-width="0.9"/>
<text x="380.7" y="335.3" font-size="8" fill="#f2f2f2" stroke="#f2f2f2" stroke-width="0.32" >Max</text>
<rect x="435.9" y="327.9" width="21.3" height="11" fill="#3d3d3d" />
<rect x="435.9" y="338" width="21.3" height="0.9" fill="#505050" />
<text x="437.7" y="336.7" font-size="8.4" fill="#f2f2f2" >2</text>
<rect x="489.9" y="200.3" width="52.7" height="23.2" rx="5.5" fill="#000" fill-opacity="0.45" filter="url(#sh)"/>
<rect x="490.4" y="199.8" width="51.7" height="22.2" rx="5.5" fill="#333333" stroke="#4a4a4a" stroke-width="0.9"/>
<path d="M489.7 206.4a4.8 4.8 0 0 1 0 9.6z" fill="url(#gL)"/>
<path d="M490.4 206.4a4.8 4.8 0 0 1 0 9.6" fill="none" stroke="#4a4a4a" stroke-width="0.9"/>
<path d="M542.8 206.2a5 5 0 0 0 0 10z" fill="url(#gR)"/>
<path d="M542.1 206.2a5 5 0 0 0 0 10" fill="none" stroke="#4a4a4a" stroke-width="0.9"/>
<circle cx="541.8" cy="211.2" r="2.1" fill="#262626" stroke="#5c5c5c" stroke-width="0.9"/>
<text x="498.3" y="212.1" font-size="6.8" fill="#e8e8e8" font-weight="bold" >a</text>
<rect x="507.3" y="204.4" width="28.6" height="12.4" fill="#3d3d3d" />
<rect x="507.3" y="215.9" width="28.6" height="0.9" fill="#505050" />
<text x="509.2" y="213.9" font-size="8" fill="#f2f2f2" >a*-1</text>
<rect x="750.3" y="44.3" width="91.4" height="164.2" rx="5.5" fill="#000" fill-opacity="0.45" filter="url(#sh)"/>
<rect x="750.8" y="43.8" width="90.4" height="163.2" rx="5.5" fill="#333333" stroke="#4a4a4a" stroke-width="0.9"/>
<text x="770.4" y="52.3" font-size="6.1" fill="#9a9a9a" >Output</text>
<text x="770.4" y="60.2" font-size="7.3" fill="#fff" font-weight="bold" >Artboard</text>
<circle cx="832.6" cy="52.3" r="4.6" fill="none" stroke="#6c6c6c" stroke-width="0.8"/>
<circle cx="830.6" cy="52.3" r="0.6" fill="#8a8a8a" />
<circle cx="832.6" cy="52.3" r="0.6" fill="#8a8a8a" />
<circle cx="834.6" cy="52.3" r="0.6" fill="#8a8a8a" />
<rect x="755.8" y="49.1" width="10" height="10" fill="#fff" rx="1" />
<text x="757.6" y="70.8" font-size="7" fill="#a8a8a8" >Output layers</text>
<path d="M750.1 76.1a4.9 4.9 0 0 1 0 9.8z" fill="url(#gL)"/>
<path d="M750.8 76.1a4.9 4.9 0 0 1 0 9.8" fill="none" stroke="#2b7fb8" stroke-width="1.1"/>
<text x="758.6" y="83" font-size="8" fill="#3a97d8" stroke="#3a97d8" stroke-width="0.25">Top layer</text>
<path d="M750.1 90.4a4.9 4.9 0 0 1 0 9.8z" fill="url(#gL)"/>
<path d="M750.8 90.4a4.9 4.9 0 0 1 0 9.8" fill="none" stroke="#2b7fb8" stroke-width="1.1"/>
<text x="758.6" y="97.3" font-size="8" fill="#3a97d8" stroke="#3a97d8" stroke-width="0.25">Middle layer</text>
<path d="M750.1 104.3a4.9 4.9 0 0 1 0 9.8z" fill="url(#gL)"/>
<path d="M750.8 104.3a4.9 4.9 0 0 1 0 9.8" fill="none" stroke="#2b7fb8" stroke-width="1.1"/>
<text x="758.6" y="111" font-size="8" fill="#3a97d8" stroke="#3a97d8" stroke-width="0.25">Bottom layer</text>
<text x="757.6" y="123.6" font-size="7.1" fill="#a8a8a8" >Artboard size</text>
<rect x="829.1" y="118.3" width="5" height="5" rx="0.9" fill="#4a4a4a" stroke="#868686" stroke-width="0.9"/>
<rect x="830" y="119.2" width="2.4" height="2" fill="#2e2e2e" />
<path d="M750.1 126.4a4.8 4.8 0 0 1 0 9.6z" fill="url(#gL)"/>
<path d="M750.8 126.4a4.8 4.8 0 0 1 0 9.6" fill="none" stroke="#4a4a4a" stroke-width="0.9"/>
<path d="M841.9 126.2a5 5 0 0 0 0 10z" fill="url(#gR)"/>
<path d="M841.2 126.2a5 5 0 0 0 0 10" fill="none" stroke="#4a4a4a" stroke-width="0.9"/>
<circle cx="840.9" cy="131.2" r="2.1" fill="#262626" stroke="#5c5c5c" stroke-width="0.9"/>
<text x="757.6" y="133.7" font-size="8" fill="#f2f2f2" stroke="#f2f2f2" stroke-width="0.32" >Width</text>
<rect x="813.3" y="126.3" width="21.2" height="10.8" fill="#3d3d3d" />
<rect x="813.3" y="136.2" width="21.2" height="0.9" fill="#505050" />
<text x="814.3" y="135.2" font-size="8.2" fill="#f2f2f2" >1920</text>
<path d="M750.1 139a4.8 4.8 0 0 1 0 9.6z" fill="url(#gL)"/>
<path d="M750.8 139a4.8 4.8 0 0 1 0 9.6" fill="none" stroke="#4a4a4a" stroke-width="0.9"/>
<path d="M841.9 138.8a5 5 0 0 0 0 10z" fill="url(#gR)"/>
<path d="M841.2 138.8a5 5 0 0 0 0 10" fill="none" stroke="#4a4a4a" stroke-width="0.9"/>
<circle cx="840.9" cy="143.8" r="2.1" fill="#262626" stroke="#5c5c5c" stroke-width="0.9"/>
<text x="757.6" y="146.3" font-size="8" fill="#f2f2f2" stroke="#f2f2f2" stroke-width="0.32" >Height</text>
<rect x="813.3" y="138.9" width="21.2" height="10.8" fill="#3d3d3d" />
<rect x="813.3" y="148.8" width="21.2" height="0.9" fill="#505050" />
<text x="814.3" y="147.8" font-size="8.2" fill="#f2f2f2" >1080</text>
<circle cx="805.1" cy="132" r="0.9" fill="none" stroke="#777" stroke-width="0.5"/>
<circle cx="805.1" cy="142.6" r="0.9" fill="none" stroke="#777" stroke-width="0.5"/>
<circle cx="805.1" cy="133.9" r="0.9" fill="none" stroke="#777" stroke-width="0.5"/>
<circle cx="805.1" cy="144.5" r="0.9" fill="none" stroke="#777" stroke-width="0.5"/>
<path d="M812.5 130.3h-2.4v12.6h2.4" fill="none" stroke="#777" stroke-width="0.7"/>
<rect x="758.2" y="156.3" width="6.5" height="6.5" fill="#5e5e5e" rx="1.2" />
<text x="767.3" y="162" font-size="7.1" fill="#c8c8c8" >Align content</text>
<rect x="758.2" y="166.8" width="6.5" height="6.5" fill="#1b72ea" rx="1.4" />
<path d="M759.63 170.18l1.3 1.56 2.34 -3.25" fill="none" stroke="#fff" stroke-width="1.04" stroke-linecap="round" stroke-linejoin="round"/>
<text x="767.3" y="172.3" font-size="7.1" fill="#c8c8c8" >Background</text>
<path d="M750.1 175.2a4.8 4.8 0 0 1 0 9.6z" fill="url(#gL)"/>
<path d="M750.8 175.2a4.8 4.8 0 0 1 0 9.6" fill="none" stroke="#2a9a36" stroke-width="1.1"/>
<path d="M841.9 175.6a5 5 0 0 0 0 10z" fill="url(#gR)"/>
<path d="M841.2 175.6a5 5 0 0 0 0 10" fill="none" stroke="#2a9a36" stroke-width="1.1"/>
<circle cx="841" cy="180.6" r="2.3" fill="#22b033" />
<text x="757.6" y="181.7" font-size="8.1" fill="#27a834" stroke="#27a834" stroke-width="0.3">Color</text>
<rect x="813" y="174.5" width="21.2" height="13.9" fill="#484848" />
<rect x="816.5" y="177.8" width="14.5" height="7.2" fill="#fff" stroke="#8a8a8a" stroke-width="0.9"/>
<path d="M750.1 189.5a4.8 4.8 0 0 1 0 9.6z" fill="url(#gL)"/>
<path d="M750.8 189.5a4.8 4.8 0 0 1 0 9.6" fill="none" stroke="#4a4a4a" stroke-width="0.9"/>
<path d="M841.9 190.6a5 5 0 0 0 0 10z" fill="url(#gR)"/>
<path d="M841.2 190.6a5 5 0 0 0 0 10" fill="none" stroke="#4a4a4a" stroke-width="0.9"/>
<circle cx="840.9" cy="195.6" r="2.1" fill="#262626" stroke="#5c5c5c" stroke-width="0.9"/>
<text x="757.6" y="197.5" font-size="8" fill="#f2f2f2" stroke="#f2f2f2" stroke-width="0.32" >Opacity</text>
<rect x="813.3" y="190.3" width="21.2" height="10.8" fill="#3d3d3d" />
<rect x="813.3" y="200.2" width="21.2" height="0.9" fill="#505050" />
<text x="815" y="199" font-size="8.4" fill="#f2f2f2" >1</text>
<path d="M127.2 96.8C133.8 96.8 133.8 96.8 140.4 96.8" fill="none" stroke="#161616" stroke-width="5.4" stroke-linecap="round"/>
<circle cx="127.2" cy="96.8" r="4.3" fill="#10161c" />
<circle cx="140.4" cy="96.8" r="4.3" fill="#10161c" />
<path d="M127.2 96.8C133.8 96.8 133.8 96.8 140.4 96.8" fill="none" stroke="#1a8ad4" stroke-width="3.7" stroke-linecap="round"/>
<circle cx="127.2" cy="96.8" r="3.1" fill="#1a8cd8" />
<circle cx="140.4" cy="96.8" r="3.1" fill="#1a8cd8" />
<path d="M230.3 96.8C243.5 96.8 243.5 96.8 256.7 96.8" fill="none" stroke="#161616" stroke-width="5.4" stroke-linecap="round"/>
<circle cx="230.3" cy="96.8" r="4.3" fill="#10161c" />
<circle cx="256.7" cy="96.8" r="4.3" fill="#10161c" />
<path d="M230.3 96.8C243.5 96.8 243.5 96.8 256.7 96.8" fill="none" stroke="#1a8ad4" stroke-width="3.7" stroke-linecap="round"/>
<circle cx="230.3" cy="96.8" r="3.1" fill="#1a8cd8" />
<circle cx="256.7" cy="96.8" r="3.1" fill="#1a8cd8" />
<path d="M347.8 96.8C360.75 96.8 360.75 96.8 373.7 96.8" fill="none" stroke="#161616" stroke-width="5.4" stroke-linecap="round"/>
<circle cx="347.8" cy="96.8" r="4.3" fill="#10161c" />
<circle cx="373.7" cy="96.8" r="4.3" fill="#10161c" />
<path d="M347.8 96.8C360.75 96.8 360.75 96.8 373.7 96.8" fill="none" stroke="#1a8ad4" stroke-width="3.7" stroke-linecap="round"/>
<circle cx="347.8" cy="96.8" r="3.1" fill="#1a8cd8" />
<circle cx="373.7" cy="96.8" r="3.1" fill="#1a8cd8" />
<path d="M464.3 96.8C516.35 96.8 516.35 109.7 568.4 109.7" fill="none" stroke="#161616" stroke-width="5.4" stroke-linecap="round"/>
<circle cx="464.3" cy="96.8" r="4.3" fill="#10161c" />
<circle cx="568.4" cy="109.7" r="4.3" fill="#10161c" />
<path d="M464.3 96.8C516.35 96.8 516.35 109.7 568.4 109.7" fill="none" stroke="#1a8ad4" stroke-width="3.7" stroke-linecap="round"/>
<circle cx="464.3" cy="96.8" r="3.1" fill="#1a8cd8" />
<circle cx="568.4" cy="109.7" r="3.1" fill="#1a8cd8" />
<path d="M659.4 109.8C704.85 109.8 704.85 95.3 750.3 95.3" fill="none" stroke="#161616" stroke-width="5.4" stroke-linecap="round"/>
<circle cx="659.4" cy="109.8" r="4.3" fill="#10161c" />
<circle cx="750.3" cy="95.3" r="4.3" fill="#10161c" />
<path d="M659.4 109.8C704.85 109.8 704.85 95.3 750.3 95.3" fill="none" stroke="#1a8ad4" stroke-width="3.7" stroke-linecap="round"/>
<circle cx="659.4" cy="109.8" r="3.1" fill="#1a8cd8" />
<circle cx="750.3" cy="95.3" r="3.1" fill="#1a8cd8" />
<path d="M347.9 201.2C419.25 201.2 419.25 211.2 490.6 211.2" fill="none" stroke="#595959" stroke-width="3.3" stroke-linecap="round"/>
<circle cx="347.9" cy="201.2" r="2.5" fill="#595959" />
<circle cx="490.6" cy="211.2" r="2.5" fill="#595959" />
<path d="M347.9 201.2C419.25 201.2 419.25 211.2 490.6 211.2" fill="none" stroke="#2d2d2d" stroke-width="1.7" stroke-linecap="round"/>
<circle cx="347.9" cy="201.2" r="1.6" fill="#2d2d2d" />
<circle cx="490.6" cy="211.2" r="1.6" fill="#2d2d2d" />
<path d="M542.3 211.2C555.45 211.2 555.45 214.5 568.6 214.5" fill="none" stroke="#595959" stroke-width="3.3" stroke-linecap="round"/>
<circle cx="542.3" cy="211.2" r="2.5" fill="#595959" />
<circle cx="568.6" cy="214.5" r="2.5" fill="#595959" />
<path d="M542.3 211.2C555.45 211.2 555.45 214.5 568.6 214.5" fill="none" stroke="#2d2d2d" stroke-width="1.7" stroke-linecap="round"/>
<circle cx="542.3" cy="211.2" r="1.6" fill="#2d2d2d" />
<circle cx="568.6" cy="214.5" r="1.6" fill="#2d2d2d" />
<rect x="16" y="371.4" width="971" height="6.8" fill="#202020" />
<circle cx="536" cy="374.9" r="1.5" fill="#444" />
<path d="M26.6 371.8V358.5a4.5 4.5 0 0 1 4.5-4.5H85.8a4.5 4.5 0 0 1 4.5 4.5V371.8z" fill="#3e3e3e"/>
<path d="M32.7 363.3l2.8-2.8 2.8 2.8-2.8 2.8z" fill="#f00"/>
<text x="44" y="365.9" font-size="7.5" fill="#f0f0f0" font-weight="bold" >Animation</text>
<rect x="16" y="378.2" width="371.9" height="242" fill="#363636" />
<rect x="16" y="402" width="371.9" height="23.7" fill="#454545" />
<path d="M25.5 384.3v12.2l10.2-6.1z" fill="#b8b8b8"/>
<path d="M47.8 386.4h1.5v8.2h-1.5zM54.3 386.4v8.2l-5-4.1z" fill="#b8b8b8"/>
<path d="M108.6 386.4h1.5v8.2h-1.5zM103.6 386.4v8.2l5-4.1z" fill="#b8b8b8"/>
<rect x="60" y="383.9" width="37.6" height="12.7" fill="#3f3f3f" />
<rect x="60" y="395.7" width="37.6" height="0.9" fill="#555" />
<text x="78.8" y="393.3" font-size="8" fill="#f0f0f0" text-anchor="middle" >01:16</text>
<text x="242.9" y="392.6" font-size="7.7" fill="#aaa" >Duration</text>
<rect x="276.3" y="384.3" width="37.8" height="12" fill="#3f3f3f" />
<rect x="276.3" y="395.4" width="37.8" height="0.9" fill="#555" />
<text x="295.2" y="393.3" font-size="8.2" fill="#f0f0f0" text-anchor="middle" >03:00</text>
<rect x="318.9" y="386" width="7.8" height="7.8" fill="#1b72ea" rx="1.4" />
<path d="M320.62 390.06l1.56 1.87 2.81 -3.9" fill="none" stroke="#fff" stroke-width="1.25" stroke-linecap="round" stroke-linejoin="round"/>
<text x="329" y="392.7" font-size="7.1" fill="#f0f0f0" font-weight="bold" >Loop</text>
<rect x="352.3" y="384.3" width="17" height="12" fill="#3f3f3f" />
<rect x="352.3" y="395.4" width="17" height="0.9" fill="#555" />
<text x="360.8" y="393.3" font-size="8.2" fill="#f0f0f0" text-anchor="middle" >30</text>
<text x="372.2" y="392.6" font-size="7.3" fill="#aaa" >fps</text>
<text x="27" y="417.3" font-size="8.1" fill="#c4c4c4" font-weight="bold" >Add animation</text>
<path d="M86.6 413.6l2.2 2.2 2.2-2.2" fill="none" stroke="#c4c4c4" stroke-width="1"/>
<path d="M122.9 427.8v3.8M125.8 427.8v3.8M128.7 427.8v3.8M131.6 427.8v3.8M134.5 427.8v3.8M137.4 427.8v3.8M140.3 427.8v3.8M143.2 427.8v3.8M146.1 427.8v3.8M149 427.8v3.8M151.9 427.8v3.8M154.8 427.8v3.8M157.7 427.8v3.8M160.6 427.8v3.8M163.5 427.8v3.8M166.4 427.8v3.8M169.3 427.8v3.8M172.2 427.8v3.8M175.1 427.8v3.8M178 427.8v3.8M180.9 427.8v3.8M183.8 427.8v3.8M186.7 427.8v3.8M189.6 427.8v3.8M192.5 427.8v3.8M195.4 427.8v3.8M198.3 427.8v3.8M201.2 427.8v3.8M204.1 427.8v3.8M207 427.8v3.8M209.9 427.8v3.8M212.8 427.8v3.8M215.7 427.8v3.8M218.6 427.8v3.8M221.5 427.8v3.8M224.4 427.8v3.8M227.3 427.8v3.8M230.2 427.8v3.8M233.1 427.8v3.8M236 427.8v3.8M238.9 427.8v3.8M241.8 427.8v3.8M244.7 427.8v3.8M247.6 427.8v3.8M250.5 427.8v3.8M253.4 427.8v3.8M256.3 427.8v3.8M259.2 427.8v3.8M262.1 427.8v3.8M265 427.8v3.8M267.9 427.8v3.8M270.8 427.8v3.8M273.7 427.8v3.8M276.6 427.8v3.8M279.5 427.8v3.8M282.4 427.8v3.8M285.3 427.8v3.8M288.2 427.8v3.8M291.1 427.8v3.8M294 427.8v3.8M296.9 427.8v3.8M299.8 427.8v3.8M302.7 427.8v3.8M305.6 427.8v3.8M308.5 427.8v3.8M311.4 427.8v3.8M314.3 427.8v3.8M317.2 427.8v3.8M320.1 427.8v3.8M323 427.8v3.8M325.9 427.8v3.8M328.8 427.8v3.8M331.7 427.8v3.8M334.6 427.8v3.8M337.5 427.8v3.8M340.4 427.8v3.8M343.3 427.8v3.8M346.2 427.8v3.8M349.1 427.8v3.8M352 427.8v3.8M354.9 427.8v3.8M357.8 427.8v3.8M360.7 427.8v3.8M363.6 427.8v3.8M366.5 427.8v3.8M369.4 427.8v3.8M372.3 427.8v3.8M375.2 427.8v3.8M378.1 427.8v3.8" stroke="#505050" stroke-width="1.3"/>
<rect x="119.3" y="427.6" width="1.2" height="192" fill="#505050" />
<rect x="206.4" y="427.6" width="1.2" height="192" fill="#505050" />
<rect x="293.4" y="427.6" width="1.2" height="192" fill="#505050" />
<rect x="380.4" y="427.6" width="1.2" height="192" fill="#505050" />
<path d="M120 443.35V449.1L381 437.6V443.35z" fill="#4a4a4a"/>
<path d="M120 449.1L381 437.6" stroke="#f4f4f4" stroke-width="1.8"/>
<path d="M116.7 449.1l3.2-3.2 3.2 3.2-3.2 3.2z" fill="#fff" stroke="#151515" stroke-width="1.1"/>
<path d="M377.7 437.6l3.2-3.2 3.2 3.2-3.2 3.2z" fill="#fff" stroke="#151515" stroke-width="1.1"/>
<path d="M120 465.4V471.3L381 459.5V465.4z" fill="#4a4a4a"/>
<path d="M120 471.3L381 459.5" stroke="#f4f4f4" stroke-width="1.8"/>
<path d="M116.7 471.3l3.2-3.2 3.2 3.2-3.2 3.2z" fill="#fff" stroke="#151515" stroke-width="1.1"/>
<path d="M377.7 459.5l3.2-3.2 3.2 3.2-3.2 3.2z" fill="#fff" stroke="#151515" stroke-width="1.1"/>
<rect x="220.6" y="427.6" width="1.9" height="192" fill="#e60000" />
<rect x="24.45" y="438.45" width="2.3" height="2.3" fill="#4fc3ff" />
<rect x="28.45" y="438.75" width="1.7" height="1.7" fill="#2d9de0" />
<rect x="32.5" y="439.1" width="1" height="1" fill="#2a80b4" />
<rect x="24.45" y="442.6" width="2.3" height="2.3" fill="#4fc3ff" />
<rect x="28.45" y="442.9" width="1.7" height="1.7" fill="#2d9de0" />
<rect x="32.5" y="443.25" width="1" height="1" fill="#2a80b4" />
<rect x="24.45" y="446.75" width="2.3" height="2.3" fill="#4fc3ff" />
<rect x="28.45" y="447.05" width="1.7" height="1.7" fill="#2d9de0" />
<rect x="32.5" y="447.4" width="1" height="1" fill="#2a80b4" />
<text x="38.3" y="441" font-size="6.3" fill="#b0b0b0" >Apply function</text>
<text x="38.3" y="449.7" font-size="7.6" fill="#f4f4f4" stroke="#f4f4f4" stroke-width="0.25">Offset</text>
<circle cx="29" cy="466" r="5.4" fill="none" stroke="#6c6c6c" stroke-width="0.8" stroke-dasharray="27 7"/>
<circle cx="29.7" cy="465.6" r="2.3" fill="#45bdff" />
<text x="38.3" y="463" font-size="6.3" fill="#b0b0b0" >Transform 1</text>
<text x="38.3" y="471.6" font-size="7.6" fill="#f4f4f4" stroke="#f4f4f4" stroke-width="0.25">Rotation Angle</text>
<rect x="387.9" y="378.2" width="6.3" height="242" fill="#222" />
<circle cx="390.8" cy="498" r="1.3" fill="#444" />
<rect x="394.2" y="378.2" width="593" height="224.5" fill="#666" />
<rect x="543.1" y="387.9" width="363.6" height="206" fill="#5d5d5d" />
<rect x="543.8" y="388.6" width="362.2" height="204.6" fill="#fff" />
<g clip-path="url(#art)"><use href="#ht" fill="#000" transform="translate(724.9 490.6) scale(0.18865)"/></g>
<rect x="394.2" y="602.6" width="593" height="17" fill="#2b2b2b" />
<rect x="16" y="618.6" width="971" height="0.9" fill="#2a2248" />
<text x="398.1" y="614" font-size="7.3" fill="#aaa" >Zoom</text>
<rect x="423" y="605.6" width="34.7" height="12" fill="#353535" rx="2" />
<text x="440.3" y="614" font-size="7.6" fill="#f4f4f4" font-weight="bold" text-anchor="middle" >29%</text>
<rect x="464" y="610.9" width="56.3" height="1.4" fill="#484848" />
<rect x="463.5" y="610.6" width="3" height="2" fill="#2a7de0" />
<circle cx="468.2" cy="611.6" r="4" fill="#b0b0b0" />
<text x="533.5" y="614" font-size="7.6" fill="#d0d0d0" font-weight="bold" >Fit</text>
<text x="951" y="614" font-size="7.6" fill="#d0d0d0" font-weight="bold" >Display</text>
<path d="M981.5 610.6l2.2 2.2 2.2-2.2" fill="none" stroke="#c4c4c4" stroke-width="1"/>
</g>
<path d="M16.7 619V23a6.9 6.9 0 0 1 6.9-6.9H978.7a6.9 6.9 0 0 1 6.9 6.9V34" fill="none" stroke="#686868" stroke-opacity="0.55" stroke-width="0.8"/>
<path d="M444 15.7h2a2.5 2.5 0 0 1 2.5 2.5V23.5a4 4 0 0 0 4 4H547a4 4 0 0 0 4-4V18.2a2.5 2.5 0 0 1 2.5-2.5h2V14H444z" fill="#0d0d0d"/>
</svg></body></html>
